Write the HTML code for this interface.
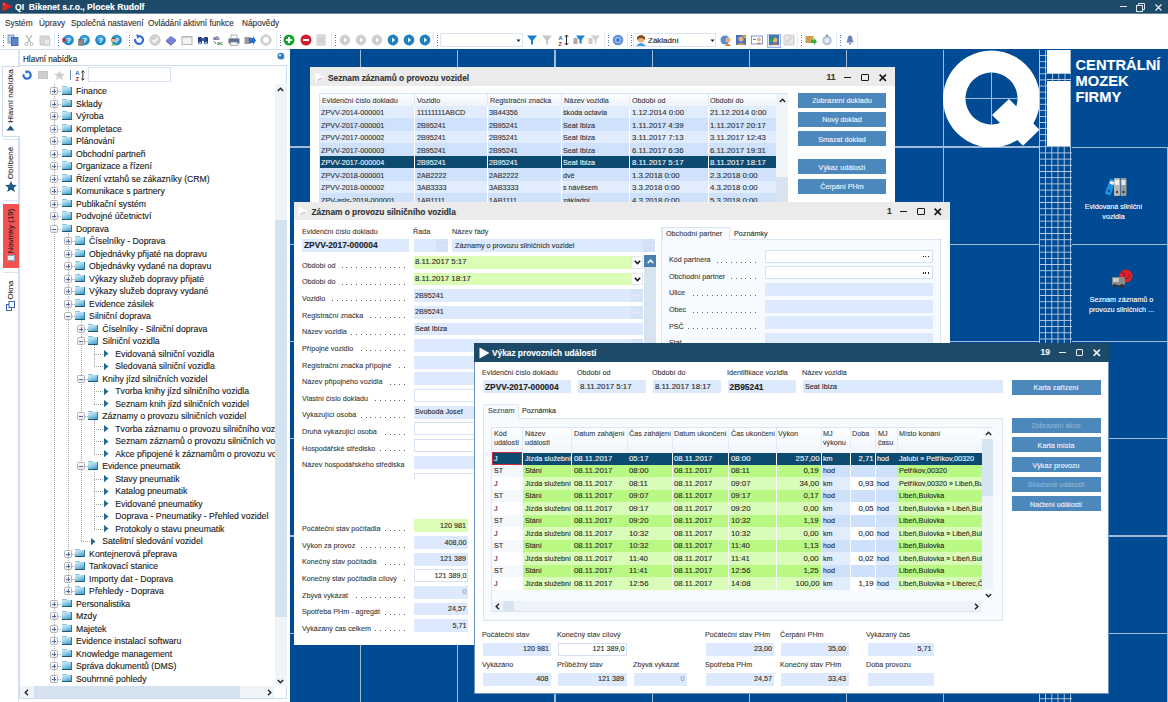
<!DOCTYPE html><html><head><meta charset="utf-8"><style>
html,body{margin:0;padding:0;width:1168px;height:702px;overflow:hidden;background:#fff;font-family:"Liberation Sans",sans-serif;}
.a{position:absolute;box-sizing:border-box;}
.t{position:absolute;white-space:nowrap;-webkit-text-stroke:0.12px currentColor;}
svg{position:absolute;overflow:visible}
</style></head><body>
<div class="a" style="left:0px;top:0px;width:1168px;height:13px;background:#1c4a68"></div>
<div class="a" style="left:0px;top:13px;width:1168px;height:1px;background:#6a8598"></div>
<div class="t" style="left:15px;top:1.62px;font-size:8.6px;line-height:10.75px;color:#fff;font-weight:bold;transform-origin:left;">QI&nbsp; Bikenet s.r.o., Plocek Rudolf</div>
<div class="a" style="left:1120px;top:6px;width:7px;height:1px;background:#dfe8ef"></div>
<svg style="left:1136px;top:3px" width="9" height="9" viewBox="0 0 9 9"><path d="M2.5 2.5 V0.5 H8.5 V6.5 H6.5" fill="none" stroke="#dfe8ef" stroke-width="1"/><rect x="0.5" y="2.5" width="6" height="6" fill="none" stroke="#dfe8ef" stroke-width="1"/></svg>
<svg style="left:1155px;top:3.5px" width="7" height="7"><path d="M0.5 0.5L6.5 6.5M6.5 0.5L0.5 6.5" stroke="#e8eef3" stroke-width="1.2"/></svg>
<div class="a" style="left:0px;top:14px;width:1168px;height:17px;background:#fff"></div>
<div class="t" style="left:5px;top:18.23px;font-size:8.6px;line-height:10.75px;color:#333;transform:scaleX(0.96);transform-origin:left;">Systém</div>
<div class="t" style="left:38.5px;top:18.23px;font-size:8.6px;line-height:10.75px;color:#333;transform:scaleX(0.96);transform-origin:left;">Úpravy</div>
<div class="t" style="left:71px;top:18.23px;font-size:8.6px;line-height:10.75px;color:#333;transform:scaleX(0.96);transform-origin:left;">Společná nastavení</div>
<div class="t" style="left:148px;top:18.23px;font-size:8.6px;line-height:10.75px;color:#333;transform:scaleX(0.96);transform-origin:left;">Ovládání aktivní funkce</div>
<div class="t" style="left:241.5px;top:18.23px;font-size:8.6px;line-height:10.75px;color:#333;transform:scaleX(0.96);transform-origin:left;">Nápovědy</div>
<div class="a" style="left:0px;top:31px;width:1168px;height:18px;background:#fff"></div>
<div class="a" style="left:0px;top:49px;width:19px;height:653px;background:#fff;border-right:1px solid #d6e2f1"></div>
<div class="a" style="left:19px;top:49px;width:271px;height:653px;background:#fff"></div>
<div class="a" style="left:0px;top:49px;width:290px;height:0.8px;background:#d3e0f2"></div>
<div class="a" style="left:19px;top:49.5px;width:268px;height:16px;background:#fff;border-left:1px solid #d6e2f1"></div>
<svg style="left:276px;top:51.5px" width="10" height="9" viewBox="0 0 10 9"><ellipse cx="5.5" cy="6" rx="3.5" ry="2" fill="#b8c0c8" opacity="0.6"/><circle cx="4.8" cy="4" r="3.3" fill="#2f78b8"/><circle cx="4" cy="3.2" r="1.4" fill="#a8d4f0"/></svg>
<div class="t" style="left:22.8px;top:54.05px;font-size:8.4px;line-height:10.5px;color:#222;transform:scaleX(0.97);transform-origin:left;">Hlavní nabídka</div>
<div class="a" style="left:19px;top:65px;width:268px;height:634px;border:1px solid #cddcf0;background:#fff"></div>
<div class="a" style="left:290px;top:49px;width:878px;height:653px;background:#004b94"></div>
<div class="a" style="left:360.0px;top:50px;width:1.3px;height:652px;background:#a3bbd9"></div>
<div class="a" style="left:457.1px;top:50px;width:1.3px;height:652px;background:#a3bbd9"></div>
<div class="a" style="left:554.3px;top:50px;width:1.3px;height:652px;background:#a3bbd9"></div>
<div class="a" style="left:651.5px;top:50px;width:1.3px;height:652px;background:#a3bbd9"></div>
<div class="a" style="left:748.6px;top:50px;width:1.3px;height:652px;background:#a3bbd9"></div>
<div class="a" style="left:845.7px;top:50px;width:1.3px;height:652px;background:#a3bbd9"></div>
<div class="a" style="left:942.9px;top:50px;width:1.3px;height:652px;background:#a3bbd9"></div>
<div class="a" style="left:1040.1px;top:50px;width:1.3px;height:652px;background:#a3bbd9"></div>
<div class="a" style="left:1166.5px;top:50px;width:1.3px;height:652px;background:#a3bbd9"></div>
<div class="a" style="left:290px;top:146.3px;width:878px;height:1.3px;background:#a3bbd9"></div>
<div class="a" style="left:290px;top:243.5px;width:878px;height:1.3px;background:#a3bbd9"></div>
<div class="a" style="left:290px;top:340.7px;width:878px;height:1.3px;background:#a3bbd9"></div>
<div class="a" style="left:290px;top:438.0px;width:878px;height:1.3px;background:#a3bbd9"></div>
<div class="a" style="left:290px;top:535.3px;width:878px;height:1.3px;background:#a3bbd9"></div>
<div class="a" style="left:290px;top:632.5px;width:878px;height:1.3px;background:#a3bbd9"></div>
<div class="a" style="left:1039.3px;top:50px;width:32.4px;height:652px;background-color:#004b94;background-image:linear-gradient(90deg,#bcd0e8 1.3px,transparent 1.3px),linear-gradient(180deg,#bcd0e8 1.3px,transparent 1.3px);background-size:6.2px 6.214px;background-position:0 0, 0 3.2px"></div>
<svg style="left:943px;top:50px" width="98" height="98" viewBox="0 0 98 98">
<defs><clipPath id="qc"><rect x="0" y="0" width="97" height="97"/></clipPath></defs>
<g clip-path="url(#qc)">
<path fill="#fff" fill-rule="evenodd" d="M48.5 0.5 a48.5 48.5 0 1 0 0.01 0 Z M48.5 22.5 a26 26 0 1 1 -0.01 0 Z"/>
<line x1="48.5" y1="22.5" x2="48.5" y2="74.5" stroke="#a3bbd9" stroke-width="1"/>
<line x1="22.5" y1="48.5" x2="74.5" y2="48.5" stroke="#a3bbd9" stroke-width="1"/>
<polygon fill="#fff" points="66,49 96.5,79.7 80,95.8 49,65"/>
</g></svg>
<div class="a" style="left:1046.8px;top:50px;width:23.7px;height:96.4px;background:#fff"></div>
<div class="a" style="left:1045.5px;top:73.4px;width:25.7px;height:7.4px;background-color:#004b94;background-image:linear-gradient(90deg,#bcd0e8 1.3px,transparent 1.3px),linear-gradient(180deg,#bcd0e8 1.3px,transparent 1.3px);background-size:6.2px 6.1px;background-position:0 0,0 0"></div>
<div class="a" style="left:1039.3px;top:50px;width:7.5px;height:96.4px;background-color:#004b94;background-image:linear-gradient(90deg,#bcd0e8 1.3px,transparent 1.3px),linear-gradient(180deg,#bcd0e8 1.3px,transparent 1.3px);background-size:6.2px 6.08px;background-position:0 0,0 5.2px"></div>
<div class="a" style="left:1070.5px;top:50px;width:97px;height:96.75px;background:#004b94"></div>
<div class="t" style="left:1075.5px;top:55.81px;font-size:14.7px;line-height:18.38px;color:#fff;font-weight:bold;transform-origin:left;">CENTRÁLNÍ</div>
<div class="t" style="left:1075.5px;top:71.81px;font-size:14.7px;line-height:18.38px;color:#fff;font-weight:bold;transform-origin:left;">MOZEK</div>
<div class="t" style="left:1075.5px;top:88.11px;font-size:14.7px;line-height:18.38px;color:#fff;font-weight:bold;transform-origin:left;">FIRMY</div>
<div style="position:absolute;left:0;top:0;width:274.5px;height:686px;overflow:hidden">
<div class="a" style="left:53.5px;top:84px;width:1px;height:594.8px;border-left:1px dotted #a8a8a8"></div>
<div class="a" style="left:67.5px;top:232.8px;width:1px;height:358.49999999999994px;border-left:1px dotted #a8a8a8"></div>
<div class="a" style="left:80.5px;top:320.3px;width:1px;height:220.99999999999994px;border-left:1px dotted #a8a8a8"></div>
<div class="a" style="left:93.5px;top:345.3px;width:1px;height:21.0px;border-left:1px dotted #a8a8a8"></div>
<div class="a" style="left:93.5px;top:382.8px;width:1px;height:21.0px;border-left:1px dotted #a8a8a8"></div>
<div class="a" style="left:93.5px;top:420.3px;width:1px;height:33.5px;border-left:1px dotted #a8a8a8"></div>
<div class="a" style="left:93.5px;top:470.3px;width:1px;height:58.49999999999994px;border-left:1px dotted #a8a8a8"></div>
<div class="a" style="left:53.5px;top:90.5px;width:9px;height:1px;border-top:1px dotted #a8a8a8"></div>
<div class="a" style="left:50px;top:87px;width:8px;height:8px;border:1px solid #b4b4b4;border-radius:1.5px;background:linear-gradient(#fdfdfd,#e6e6e6)"></div>
<div class="a" style="left:52px;top:90.5px;width:4px;height:1px;background:#5468a8"></div>
<div class="a" style="left:53.5px;top:89px;width:1px;height:4px;background:#5468a8"></div>
<div class="a" style="left:61.9px;top:86.0px;width:5px;height:2px;background:#7cc0e2;border-radius:1px 1px 0 0"></div>
<div class="a" style="left:61.9px;top:87.3px;width:10.3px;height:7.4px;background:linear-gradient(160deg,#d4ecf7 0%,#9ed2ea 45%,#3b9cc8 100%);border-bottom:1.2px solid #1d5874;border-right:0.8px solid #2d7ea6"></div>
<div class="t" style="left:76.0px;top:86.16px;font-size:8.7px;line-height:10.88px;color:#1a1a1a;transform-origin:left;">Finance</div>
<div class="a" style="left:53.5px;top:103.5px;width:9px;height:1px;border-top:1px dotted #a8a8a8"></div>
<div class="a" style="left:50px;top:100px;width:8px;height:8px;border:1px solid #b4b4b4;border-radius:1.5px;background:linear-gradient(#fdfdfd,#e6e6e6)"></div>
<div class="a" style="left:52px;top:103.5px;width:4px;height:1px;background:#5468a8"></div>
<div class="a" style="left:53.5px;top:102px;width:1px;height:4px;background:#5468a8"></div>
<div class="a" style="left:61.9px;top:98.5px;width:5px;height:2px;background:#7cc0e2;border-radius:1px 1px 0 0"></div>
<div class="a" style="left:61.9px;top:99.8px;width:10.3px;height:7.4px;background:linear-gradient(160deg,#d4ecf7 0%,#9ed2ea 45%,#3b9cc8 100%);border-bottom:1.2px solid #1d5874;border-right:0.8px solid #2d7ea6"></div>
<div class="t" style="left:76.0px;top:98.66px;font-size:8.7px;line-height:10.88px;color:#1a1a1a;transform-origin:left;">Sklady</div>
<div class="a" style="left:53.5px;top:115.5px;width:9px;height:1px;border-top:1px dotted #a8a8a8"></div>
<div class="a" style="left:50px;top:112px;width:8px;height:8px;border:1px solid #b4b4b4;border-radius:1.5px;background:linear-gradient(#fdfdfd,#e6e6e6)"></div>
<div class="a" style="left:52px;top:115.5px;width:4px;height:1px;background:#5468a8"></div>
<div class="a" style="left:53.5px;top:114px;width:1px;height:4px;background:#5468a8"></div>
<div class="a" style="left:61.9px;top:111.0px;width:5px;height:2px;background:#7cc0e2;border-radius:1px 1px 0 0"></div>
<div class="a" style="left:61.9px;top:112.3px;width:10.3px;height:7.4px;background:linear-gradient(160deg,#d4ecf7 0%,#9ed2ea 45%,#3b9cc8 100%);border-bottom:1.2px solid #1d5874;border-right:0.8px solid #2d7ea6"></div>
<div class="t" style="left:76.0px;top:111.16px;font-size:8.7px;line-height:10.88px;color:#1a1a1a;transform-origin:left;">Výroba</div>
<div class="a" style="left:53.5px;top:128.5px;width:9px;height:1px;border-top:1px dotted #a8a8a8"></div>
<div class="a" style="left:50px;top:125px;width:8px;height:8px;border:1px solid #b4b4b4;border-radius:1.5px;background:linear-gradient(#fdfdfd,#e6e6e6)"></div>
<div class="a" style="left:52px;top:128.5px;width:4px;height:1px;background:#5468a8"></div>
<div class="a" style="left:53.5px;top:127px;width:1px;height:4px;background:#5468a8"></div>
<div class="a" style="left:61.9px;top:123.50000000000001px;width:5px;height:2px;background:#7cc0e2;border-radius:1px 1px 0 0"></div>
<div class="a" style="left:61.9px;top:124.80000000000001px;width:10.3px;height:7.4px;background:linear-gradient(160deg,#d4ecf7 0%,#9ed2ea 45%,#3b9cc8 100%);border-bottom:1.2px solid #1d5874;border-right:0.8px solid #2d7ea6"></div>
<div class="t" style="left:76.0px;top:123.66px;font-size:8.7px;line-height:10.88px;color:#1a1a1a;transform-origin:left;">Kompletace</div>
<div class="a" style="left:53.5px;top:140.5px;width:9px;height:1px;border-top:1px dotted #a8a8a8"></div>
<div class="a" style="left:50px;top:137px;width:8px;height:8px;border:1px solid #b4b4b4;border-radius:1.5px;background:linear-gradient(#fdfdfd,#e6e6e6)"></div>
<div class="a" style="left:52px;top:140.5px;width:4px;height:1px;background:#5468a8"></div>
<div class="a" style="left:53.5px;top:139px;width:1px;height:4px;background:#5468a8"></div>
<div class="a" style="left:61.9px;top:136.0px;width:5px;height:2px;background:#7cc0e2;border-radius:1px 1px 0 0"></div>
<div class="a" style="left:61.9px;top:137.3px;width:10.3px;height:7.4px;background:linear-gradient(160deg,#d4ecf7 0%,#9ed2ea 45%,#3b9cc8 100%);border-bottom:1.2px solid #1d5874;border-right:0.8px solid #2d7ea6"></div>
<div class="t" style="left:76.0px;top:136.16px;font-size:8.7px;line-height:10.88px;color:#1a1a1a;transform-origin:left;">Plánování</div>
<div class="a" style="left:53.5px;top:153.5px;width:9px;height:1px;border-top:1px dotted #a8a8a8"></div>
<div class="a" style="left:50px;top:150px;width:8px;height:8px;border:1px solid #b4b4b4;border-radius:1.5px;background:linear-gradient(#fdfdfd,#e6e6e6)"></div>
<div class="a" style="left:52px;top:153.5px;width:4px;height:1px;background:#5468a8"></div>
<div class="a" style="left:53.5px;top:152px;width:1px;height:4px;background:#5468a8"></div>
<div class="a" style="left:61.9px;top:148.5px;width:5px;height:2px;background:#7cc0e2;border-radius:1px 1px 0 0"></div>
<div class="a" style="left:61.9px;top:149.8px;width:10.3px;height:7.4px;background:linear-gradient(160deg,#d4ecf7 0%,#9ed2ea 45%,#3b9cc8 100%);border-bottom:1.2px solid #1d5874;border-right:0.8px solid #2d7ea6"></div>
<div class="t" style="left:76.0px;top:148.66px;font-size:8.7px;line-height:10.88px;color:#1a1a1a;transform-origin:left;">Obchodní partneři</div>
<div class="a" style="left:53.5px;top:165.5px;width:9px;height:1px;border-top:1px dotted #a8a8a8"></div>
<div class="a" style="left:50px;top:162px;width:8px;height:8px;border:1px solid #b4b4b4;border-radius:1.5px;background:linear-gradient(#fdfdfd,#e6e6e6)"></div>
<div class="a" style="left:52px;top:165.5px;width:4px;height:1px;background:#5468a8"></div>
<div class="a" style="left:53.5px;top:164px;width:1px;height:4px;background:#5468a8"></div>
<div class="a" style="left:61.9px;top:161.0px;width:5px;height:2px;background:#7cc0e2;border-radius:1px 1px 0 0"></div>
<div class="a" style="left:61.9px;top:162.3px;width:10.3px;height:7.4px;background:linear-gradient(160deg,#d4ecf7 0%,#9ed2ea 45%,#3b9cc8 100%);border-bottom:1.2px solid #1d5874;border-right:0.8px solid #2d7ea6"></div>
<div class="t" style="left:76.0px;top:161.16px;font-size:8.7px;line-height:10.88px;color:#1a1a1a;transform-origin:left;">Organizace a řízení</div>
<div class="a" style="left:53.5px;top:178.5px;width:9px;height:1px;border-top:1px dotted #a8a8a8"></div>
<div class="a" style="left:50px;top:175px;width:8px;height:8px;border:1px solid #b4b4b4;border-radius:1.5px;background:linear-gradient(#fdfdfd,#e6e6e6)"></div>
<div class="a" style="left:52px;top:178.5px;width:4px;height:1px;background:#5468a8"></div>
<div class="a" style="left:53.5px;top:177px;width:1px;height:4px;background:#5468a8"></div>
<div class="a" style="left:61.9px;top:173.5px;width:5px;height:2px;background:#7cc0e2;border-radius:1px 1px 0 0"></div>
<div class="a" style="left:61.9px;top:174.8px;width:10.3px;height:7.4px;background:linear-gradient(160deg,#d4ecf7 0%,#9ed2ea 45%,#3b9cc8 100%);border-bottom:1.2px solid #1d5874;border-right:0.8px solid #2d7ea6"></div>
<div class="t" style="left:76.0px;top:173.66px;font-size:8.7px;line-height:10.88px;color:#1a1a1a;transform-origin:left;">Řízení vztahů se zákazníky (CRM)</div>
<div class="a" style="left:53.5px;top:190.5px;width:9px;height:1px;border-top:1px dotted #a8a8a8"></div>
<div class="a" style="left:50px;top:187px;width:8px;height:8px;border:1px solid #b4b4b4;border-radius:1.5px;background:linear-gradient(#fdfdfd,#e6e6e6)"></div>
<div class="a" style="left:52px;top:190.5px;width:4px;height:1px;background:#5468a8"></div>
<div class="a" style="left:53.5px;top:189px;width:1px;height:4px;background:#5468a8"></div>
<div class="a" style="left:61.9px;top:186.0px;width:5px;height:2px;background:#7cc0e2;border-radius:1px 1px 0 0"></div>
<div class="a" style="left:61.9px;top:187.3px;width:10.3px;height:7.4px;background:linear-gradient(160deg,#d4ecf7 0%,#9ed2ea 45%,#3b9cc8 100%);border-bottom:1.2px solid #1d5874;border-right:0.8px solid #2d7ea6"></div>
<div class="t" style="left:76.0px;top:186.16px;font-size:8.7px;line-height:10.88px;color:#1a1a1a;transform-origin:left;">Komunikace s partnery</div>
<div class="a" style="left:53.5px;top:203.5px;width:9px;height:1px;border-top:1px dotted #a8a8a8"></div>
<div class="a" style="left:50px;top:200px;width:8px;height:8px;border:1px solid #b4b4b4;border-radius:1.5px;background:linear-gradient(#fdfdfd,#e6e6e6)"></div>
<div class="a" style="left:52px;top:203.5px;width:4px;height:1px;background:#5468a8"></div>
<div class="a" style="left:53.5px;top:202px;width:1px;height:4px;background:#5468a8"></div>
<div class="a" style="left:61.9px;top:198.5px;width:5px;height:2px;background:#7cc0e2;border-radius:1px 1px 0 0"></div>
<div class="a" style="left:61.9px;top:199.8px;width:10.3px;height:7.4px;background:linear-gradient(160deg,#d4ecf7 0%,#9ed2ea 45%,#3b9cc8 100%);border-bottom:1.2px solid #1d5874;border-right:0.8px solid #2d7ea6"></div>
<div class="t" style="left:76.0px;top:198.66px;font-size:8.7px;line-height:10.88px;color:#1a1a1a;transform-origin:left;">Publikační systém</div>
<div class="a" style="left:53.5px;top:215.5px;width:9px;height:1px;border-top:1px dotted #a8a8a8"></div>
<div class="a" style="left:50px;top:212px;width:8px;height:8px;border:1px solid #b4b4b4;border-radius:1.5px;background:linear-gradient(#fdfdfd,#e6e6e6)"></div>
<div class="a" style="left:52px;top:215.5px;width:4px;height:1px;background:#5468a8"></div>
<div class="a" style="left:53.5px;top:214px;width:1px;height:4px;background:#5468a8"></div>
<div class="a" style="left:61.9px;top:211.0px;width:5px;height:2px;background:#7cc0e2;border-radius:1px 1px 0 0"></div>
<div class="a" style="left:61.9px;top:212.3px;width:10.3px;height:7.4px;background:linear-gradient(160deg,#d4ecf7 0%,#9ed2ea 45%,#3b9cc8 100%);border-bottom:1.2px solid #1d5874;border-right:0.8px solid #2d7ea6"></div>
<div class="t" style="left:76.0px;top:211.16px;font-size:8.7px;line-height:10.88px;color:#1a1a1a;transform-origin:left;">Podvojné účetnictví</div>
<div class="a" style="left:53.5px;top:228.5px;width:9px;height:1px;border-top:1px dotted #a8a8a8"></div>
<div class="a" style="left:50px;top:225px;width:8px;height:8px;border:1px solid #b4b4b4;border-radius:1.5px;background:linear-gradient(#fdfdfd,#e6e6e6)"></div>
<div class="a" style="left:52px;top:228.5px;width:4px;height:1px;background:#5468a8"></div>
<div class="a" style="left:61.9px;top:223.5px;width:5px;height:2px;background:#7cc0e2;border-radius:1px 1px 0 0"></div>
<div class="a" style="left:61.9px;top:224.8px;width:10.3px;height:7.4px;background:linear-gradient(160deg,#d4ecf7 0%,#9ed2ea 45%,#3b9cc8 100%);border-bottom:1.2px solid #1d5874;border-right:0.8px solid #2d7ea6"></div>
<div class="t" style="left:76.0px;top:223.66px;font-size:8.7px;line-height:10.88px;color:#1a1a1a;transform-origin:left;">Doprava</div>
<div class="a" style="left:67.5px;top:240.5px;width:9px;height:1px;border-top:1px dotted #a8a8a8"></div>
<div class="a" style="left:64px;top:237px;width:8px;height:8px;border:1px solid #b4b4b4;border-radius:1.5px;background:linear-gradient(#fdfdfd,#e6e6e6)"></div>
<div class="a" style="left:66px;top:240.5px;width:4px;height:1px;background:#5468a8"></div>
<div class="a" style="left:67.5px;top:239px;width:1px;height:4px;background:#5468a8"></div>
<div class="a" style="left:75.0px;top:236.0px;width:5px;height:2px;background:#7cc0e2;border-radius:1px 1px 0 0"></div>
<div class="a" style="left:75.0px;top:237.3px;width:10.3px;height:7.4px;background:linear-gradient(160deg,#d4ecf7 0%,#9ed2ea 45%,#3b9cc8 100%);border-bottom:1.2px solid #1d5874;border-right:0.8px solid #2d7ea6"></div>
<div class="t" style="left:89.1px;top:236.16px;font-size:8.7px;line-height:10.88px;color:#1a1a1a;transform-origin:left;">Číselníky - Doprava</div>
<div class="a" style="left:67.5px;top:253.5px;width:9px;height:1px;border-top:1px dotted #a8a8a8"></div>
<div class="a" style="left:64px;top:250px;width:8px;height:8px;border:1px solid #b4b4b4;border-radius:1.5px;background:linear-gradient(#fdfdfd,#e6e6e6)"></div>
<div class="a" style="left:66px;top:253.5px;width:4px;height:1px;background:#5468a8"></div>
<div class="a" style="left:67.5px;top:252px;width:1px;height:4px;background:#5468a8"></div>
<div class="a" style="left:75.0px;top:248.5px;width:5px;height:2px;background:#7cc0e2;border-radius:1px 1px 0 0"></div>
<div class="a" style="left:75.0px;top:249.8px;width:10.3px;height:7.4px;background:linear-gradient(160deg,#d4ecf7 0%,#9ed2ea 45%,#3b9cc8 100%);border-bottom:1.2px solid #1d5874;border-right:0.8px solid #2d7ea6"></div>
<div class="t" style="left:89.1px;top:248.66px;font-size:8.7px;line-height:10.88px;color:#1a1a1a;transform-origin:left;">Objednávky přijaté na dopravu</div>
<div class="a" style="left:67.5px;top:265.5px;width:9px;height:1px;border-top:1px dotted #a8a8a8"></div>
<div class="a" style="left:64px;top:262px;width:8px;height:8px;border:1px solid #b4b4b4;border-radius:1.5px;background:linear-gradient(#fdfdfd,#e6e6e6)"></div>
<div class="a" style="left:66px;top:265.5px;width:4px;height:1px;background:#5468a8"></div>
<div class="a" style="left:67.5px;top:264px;width:1px;height:4px;background:#5468a8"></div>
<div class="a" style="left:75.0px;top:261.0px;width:5px;height:2px;background:#7cc0e2;border-radius:1px 1px 0 0"></div>
<div class="a" style="left:75.0px;top:262.3px;width:10.3px;height:7.4px;background:linear-gradient(160deg,#d4ecf7 0%,#9ed2ea 45%,#3b9cc8 100%);border-bottom:1.2px solid #1d5874;border-right:0.8px solid #2d7ea6"></div>
<div class="t" style="left:89.1px;top:261.16px;font-size:8.7px;line-height:10.88px;color:#1a1a1a;transform-origin:left;">Objednávky vydané na dopravu</div>
<div class="a" style="left:67.5px;top:278.5px;width:9px;height:1px;border-top:1px dotted #a8a8a8"></div>
<div class="a" style="left:64px;top:275px;width:8px;height:8px;border:1px solid #b4b4b4;border-radius:1.5px;background:linear-gradient(#fdfdfd,#e6e6e6)"></div>
<div class="a" style="left:66px;top:278.5px;width:4px;height:1px;background:#5468a8"></div>
<div class="a" style="left:67.5px;top:277px;width:1px;height:4px;background:#5468a8"></div>
<div class="a" style="left:75.0px;top:273.5px;width:5px;height:2px;background:#7cc0e2;border-radius:1px 1px 0 0"></div>
<div class="a" style="left:75.0px;top:274.8px;width:10.3px;height:7.4px;background:linear-gradient(160deg,#d4ecf7 0%,#9ed2ea 45%,#3b9cc8 100%);border-bottom:1.2px solid #1d5874;border-right:0.8px solid #2d7ea6"></div>
<div class="t" style="left:89.1px;top:273.66px;font-size:8.7px;line-height:10.88px;color:#1a1a1a;transform-origin:left;">Výkazy služeb dopravy přijaté</div>
<div class="a" style="left:67.5px;top:290.5px;width:9px;height:1px;border-top:1px dotted #a8a8a8"></div>
<div class="a" style="left:64px;top:287px;width:8px;height:8px;border:1px solid #b4b4b4;border-radius:1.5px;background:linear-gradient(#fdfdfd,#e6e6e6)"></div>
<div class="a" style="left:66px;top:290.5px;width:4px;height:1px;background:#5468a8"></div>
<div class="a" style="left:67.5px;top:289px;width:1px;height:4px;background:#5468a8"></div>
<div class="a" style="left:75.0px;top:286.0px;width:5px;height:2px;background:#7cc0e2;border-radius:1px 1px 0 0"></div>
<div class="a" style="left:75.0px;top:287.3px;width:10.3px;height:7.4px;background:linear-gradient(160deg,#d4ecf7 0%,#9ed2ea 45%,#3b9cc8 100%);border-bottom:1.2px solid #1d5874;border-right:0.8px solid #2d7ea6"></div>
<div class="t" style="left:89.1px;top:286.16px;font-size:8.7px;line-height:10.88px;color:#1a1a1a;transform-origin:left;">Výkazy služeb dopravy vydané</div>
<div class="a" style="left:67.5px;top:303.5px;width:9px;height:1px;border-top:1px dotted #a8a8a8"></div>
<div class="a" style="left:64px;top:300px;width:8px;height:8px;border:1px solid #b4b4b4;border-radius:1.5px;background:linear-gradient(#fdfdfd,#e6e6e6)"></div>
<div class="a" style="left:66px;top:303.5px;width:4px;height:1px;background:#5468a8"></div>
<div class="a" style="left:67.5px;top:302px;width:1px;height:4px;background:#5468a8"></div>
<div class="a" style="left:75.0px;top:298.5px;width:5px;height:2px;background:#7cc0e2;border-radius:1px 1px 0 0"></div>
<div class="a" style="left:75.0px;top:299.8px;width:10.3px;height:7.4px;background:linear-gradient(160deg,#d4ecf7 0%,#9ed2ea 45%,#3b9cc8 100%);border-bottom:1.2px solid #1d5874;border-right:0.8px solid #2d7ea6"></div>
<div class="t" style="left:89.1px;top:298.66px;font-size:8.7px;line-height:10.88px;color:#1a1a1a;transform-origin:left;">Evidence zásilek</div>
<div class="a" style="left:67.5px;top:315.5px;width:9px;height:1px;border-top:1px dotted #a8a8a8"></div>
<div class="a" style="left:64px;top:312px;width:8px;height:8px;border:1px solid #b4b4b4;border-radius:1.5px;background:linear-gradient(#fdfdfd,#e6e6e6)"></div>
<div class="a" style="left:66px;top:315.5px;width:4px;height:1px;background:#5468a8"></div>
<div class="a" style="left:75.0px;top:311.0px;width:5px;height:2px;background:#7cc0e2;border-radius:1px 1px 0 0"></div>
<div class="a" style="left:75.0px;top:312.3px;width:10.3px;height:7.4px;background:linear-gradient(160deg,#d4ecf7 0%,#9ed2ea 45%,#3b9cc8 100%);border-bottom:1.2px solid #1d5874;border-right:0.8px solid #2d7ea6"></div>
<div class="t" style="left:89.1px;top:311.16px;font-size:8.7px;line-height:10.88px;color:#1a1a1a;transform-origin:left;">Silniční doprava</div>
<div class="a" style="left:80.5px;top:328.5px;width:9px;height:1px;border-top:1px dotted #a8a8a8"></div>
<div class="a" style="left:77px;top:325px;width:8px;height:8px;border:1px solid #b4b4b4;border-radius:1.5px;background:linear-gradient(#fdfdfd,#e6e6e6)"></div>
<div class="a" style="left:79px;top:328.5px;width:4px;height:1px;background:#5468a8"></div>
<div class="a" style="left:80.5px;top:327px;width:1px;height:4px;background:#5468a8"></div>
<div class="a" style="left:88.1px;top:323.5px;width:5px;height:2px;background:#7cc0e2;border-radius:1px 1px 0 0"></div>
<div class="a" style="left:88.1px;top:324.8px;width:10.3px;height:7.4px;background:linear-gradient(160deg,#d4ecf7 0%,#9ed2ea 45%,#3b9cc8 100%);border-bottom:1.2px solid #1d5874;border-right:0.8px solid #2d7ea6"></div>
<div class="t" style="left:102.2px;top:323.66px;font-size:8.7px;line-height:10.88px;color:#1a1a1a;transform-origin:left;">Číselníky - Silniční doprava</div>
<div class="a" style="left:80.5px;top:340.5px;width:9px;height:1px;border-top:1px dotted #a8a8a8"></div>
<div class="a" style="left:77px;top:337px;width:8px;height:8px;border:1px solid #b4b4b4;border-radius:1.5px;background:linear-gradient(#fdfdfd,#e6e6e6)"></div>
<div class="a" style="left:79px;top:340.5px;width:4px;height:1px;background:#5468a8"></div>
<div class="a" style="left:88.1px;top:336.0px;width:5px;height:2px;background:#7cc0e2;border-radius:1px 1px 0 0"></div>
<div class="a" style="left:88.1px;top:337.3px;width:10.3px;height:7.4px;background:linear-gradient(160deg,#d4ecf7 0%,#9ed2ea 45%,#3b9cc8 100%);border-bottom:1.2px solid #1d5874;border-right:0.8px solid #2d7ea6"></div>
<div class="t" style="left:102.2px;top:336.16px;font-size:8.7px;line-height:10.88px;color:#1a1a1a;transform-origin:left;">Silniční vozidla</div>
<div class="a" style="left:93.5px;top:353.5px;width:9px;height:1px;border-top:1px dotted #a8a8a8"></div>
<svg style="left:104.29999999999998px;top:350.2px" width="5" height="8"><polygon points="0,0 4.5,3.6 0,7.2" fill="#236a92"/></svg>
<div class="t" style="left:115.3px;top:348.66px;font-size:8.7px;line-height:10.88px;color:#1a1a1a;transform-origin:left;">Evidovaná silniční vozidla</div>
<div class="a" style="left:93.5px;top:365.5px;width:9px;height:1px;border-top:1px dotted #a8a8a8"></div>
<svg style="left:104.29999999999998px;top:362.7px" width="5" height="8"><polygon points="0,0 4.5,3.6 0,7.2" fill="#236a92"/></svg>
<div class="t" style="left:115.3px;top:361.16px;font-size:8.7px;line-height:10.88px;color:#1a1a1a;transform-origin:left;">Sledovaná silniční vozidla</div>
<div class="a" style="left:80.5px;top:378.5px;width:9px;height:1px;border-top:1px dotted #a8a8a8"></div>
<div class="a" style="left:77px;top:375px;width:8px;height:8px;border:1px solid #b4b4b4;border-radius:1.5px;background:linear-gradient(#fdfdfd,#e6e6e6)"></div>
<div class="a" style="left:79px;top:378.5px;width:4px;height:1px;background:#5468a8"></div>
<div class="a" style="left:88.1px;top:373.5px;width:5px;height:2px;background:#7cc0e2;border-radius:1px 1px 0 0"></div>
<div class="a" style="left:88.1px;top:374.8px;width:10.3px;height:7.4px;background:linear-gradient(160deg,#d4ecf7 0%,#9ed2ea 45%,#3b9cc8 100%);border-bottom:1.2px solid #1d5874;border-right:0.8px solid #2d7ea6"></div>
<div class="t" style="left:102.2px;top:373.66px;font-size:8.7px;line-height:10.88px;color:#1a1a1a;transform-origin:left;">Knihy jízd silničních vozidel</div>
<div class="a" style="left:93.5px;top:390.5px;width:9px;height:1px;border-top:1px dotted #a8a8a8"></div>
<svg style="left:104.29999999999998px;top:387.7px" width="5" height="8"><polygon points="0,0 4.5,3.6 0,7.2" fill="#236a92"/></svg>
<div class="t" style="left:115.3px;top:386.16px;font-size:8.7px;line-height:10.88px;color:#1a1a1a;transform-origin:left;">Tvorba knihy jízd silničního vozidla</div>
<div class="a" style="left:93.5px;top:403.5px;width:9px;height:1px;border-top:1px dotted #a8a8a8"></div>
<svg style="left:104.29999999999998px;top:400.2px" width="5" height="8"><polygon points="0,0 4.5,3.6 0,7.2" fill="#236a92"/></svg>
<div class="t" style="left:115.3px;top:398.66px;font-size:8.7px;line-height:10.88px;color:#1a1a1a;transform-origin:left;">Seznam knih jízd silničních vozidel</div>
<div class="a" style="left:80.5px;top:415.5px;width:9px;height:1px;border-top:1px dotted #a8a8a8"></div>
<div class="a" style="left:77px;top:412px;width:8px;height:8px;border:1px solid #b4b4b4;border-radius:1.5px;background:linear-gradient(#fdfdfd,#e6e6e6)"></div>
<div class="a" style="left:79px;top:415.5px;width:4px;height:1px;background:#5468a8"></div>
<div class="a" style="left:88.1px;top:411.0px;width:5px;height:2px;background:#7cc0e2;border-radius:1px 1px 0 0"></div>
<div class="a" style="left:88.1px;top:412.3px;width:10.3px;height:7.4px;background:linear-gradient(160deg,#d4ecf7 0%,#9ed2ea 45%,#3b9cc8 100%);border-bottom:1.2px solid #1d5874;border-right:0.8px solid #2d7ea6"></div>
<div class="t" style="left:102.2px;top:411.16px;font-size:8.7px;line-height:10.88px;color:#1a1a1a;transform-origin:left;">Záznamy o provozu silničních vozidel</div>
<div class="a" style="left:93.5px;top:428.5px;width:9px;height:1px;border-top:1px dotted #a8a8a8"></div>
<svg style="left:104.29999999999998px;top:425.2px" width="5" height="8"><polygon points="0,0 4.5,3.6 0,7.2" fill="#236a92"/></svg>
<div class="t" style="left:115.3px;top:423.66px;font-size:8.7px;line-height:10.88px;color:#1a1a1a;transform-origin:left;">Tvorba záznamu o provozu silničního vozidla</div>
<div class="a" style="left:93.5px;top:440.5px;width:9px;height:1px;border-top:1px dotted #a8a8a8"></div>
<svg style="left:104.29999999999998px;top:437.7px" width="5" height="8"><polygon points="0,0 4.5,3.6 0,7.2" fill="#236a92"/></svg>
<div class="t" style="left:115.3px;top:436.16px;font-size:8.7px;line-height:10.88px;color:#1a1a1a;transform-origin:left;">Seznam záznamů o provozu silničních vozidel</div>
<div class="a" style="left:93.5px;top:453.5px;width:9px;height:1px;border-top:1px dotted #a8a8a8"></div>
<svg style="left:104.29999999999998px;top:450.2px" width="5" height="8"><polygon points="0,0 4.5,3.6 0,7.2" fill="#236a92"/></svg>
<div class="t" style="left:115.3px;top:448.66px;font-size:8.7px;line-height:10.88px;color:#1a1a1a;transform-origin:left;">Akce připojené k záznamům o provozu vozidel</div>
<div class="a" style="left:80.5px;top:465.5px;width:9px;height:1px;border-top:1px dotted #a8a8a8"></div>
<div class="a" style="left:77px;top:462px;width:8px;height:8px;border:1px solid #b4b4b4;border-radius:1.5px;background:linear-gradient(#fdfdfd,#e6e6e6)"></div>
<div class="a" style="left:79px;top:465.5px;width:4px;height:1px;background:#5468a8"></div>
<div class="a" style="left:88.1px;top:461.0px;width:5px;height:2px;background:#7cc0e2;border-radius:1px 1px 0 0"></div>
<div class="a" style="left:88.1px;top:462.3px;width:10.3px;height:7.4px;background:linear-gradient(160deg,#d4ecf7 0%,#9ed2ea 45%,#3b9cc8 100%);border-bottom:1.2px solid #1d5874;border-right:0.8px solid #2d7ea6"></div>
<div class="t" style="left:102.2px;top:461.16px;font-size:8.7px;line-height:10.88px;color:#1a1a1a;transform-origin:left;">Evidence pneumatik</div>
<div class="a" style="left:93.5px;top:478.5px;width:9px;height:1px;border-top:1px dotted #a8a8a8"></div>
<svg style="left:104.29999999999998px;top:475.2px" width="5" height="8"><polygon points="0,0 4.5,3.6 0,7.2" fill="#236a92"/></svg>
<div class="t" style="left:115.3px;top:473.66px;font-size:8.7px;line-height:10.88px;color:#1a1a1a;transform-origin:left;">Stavy pneumatik</div>
<div class="a" style="left:93.5px;top:490.5px;width:9px;height:1px;border-top:1px dotted #a8a8a8"></div>
<svg style="left:104.29999999999998px;top:487.7px" width="5" height="8"><polygon points="0,0 4.5,3.6 0,7.2" fill="#236a92"/></svg>
<div class="t" style="left:115.3px;top:486.16px;font-size:8.7px;line-height:10.88px;color:#1a1a1a;transform-origin:left;">Katalog pneumatik</div>
<div class="a" style="left:93.5px;top:503.5px;width:9px;height:1px;border-top:1px dotted #a8a8a8"></div>
<svg style="left:104.29999999999998px;top:500.2px" width="5" height="8"><polygon points="0,0 4.5,3.6 0,7.2" fill="#236a92"/></svg>
<div class="t" style="left:115.3px;top:498.66px;font-size:8.7px;line-height:10.88px;color:#1a1a1a;transform-origin:left;">Evidované pneumatiky</div>
<div class="a" style="left:93.5px;top:515.5px;width:9px;height:1px;border-top:1px dotted #a8a8a8"></div>
<svg style="left:104.29999999999998px;top:512.6999999999999px" width="5" height="8"><polygon points="0,0 4.5,3.6 0,7.2" fill="#236a92"/></svg>
<div class="t" style="left:115.3px;top:511.16px;font-size:8.7px;line-height:10.88px;color:#1a1a1a;transform-origin:left;">Doprava - Pneumatiky - Přehled vozidel</div>
<div class="a" style="left:93.5px;top:528.5px;width:9px;height:1px;border-top:1px dotted #a8a8a8"></div>
<svg style="left:104.29999999999998px;top:525.1999999999999px" width="5" height="8"><polygon points="0,0 4.5,3.6 0,7.2" fill="#236a92"/></svg>
<div class="t" style="left:115.3px;top:523.66px;font-size:8.7px;line-height:10.88px;color:#1a1a1a;transform-origin:left;">Protokoly o stavu pneumatik</div>
<div class="a" style="left:80.5px;top:540.5px;width:9px;height:1px;border-top:1px dotted #a8a8a8"></div>
<svg style="left:91.19999999999999px;top:537.6999999999999px" width="5" height="8"><polygon points="0,0 4.5,3.6 0,7.2" fill="#236a92"/></svg>
<div class="t" style="left:102.2px;top:536.16px;font-size:8.7px;line-height:10.88px;color:#1a1a1a;transform-origin:left;">Satelitní sledování vozidel</div>
<div class="a" style="left:67.5px;top:553.5px;width:9px;height:1px;border-top:1px dotted #a8a8a8"></div>
<div class="a" style="left:64px;top:550px;width:8px;height:8px;border:1px solid #b4b4b4;border-radius:1.5px;background:linear-gradient(#fdfdfd,#e6e6e6)"></div>
<div class="a" style="left:66px;top:553.5px;width:4px;height:1px;background:#5468a8"></div>
<div class="a" style="left:67.5px;top:552px;width:1px;height:4px;background:#5468a8"></div>
<div class="a" style="left:75.0px;top:548.5px;width:5px;height:2px;background:#7cc0e2;border-radius:1px 1px 0 0"></div>
<div class="a" style="left:75.0px;top:549.8px;width:10.3px;height:7.4px;background:linear-gradient(160deg,#d4ecf7 0%,#9ed2ea 45%,#3b9cc8 100%);border-bottom:1.2px solid #1d5874;border-right:0.8px solid #2d7ea6"></div>
<div class="t" style="left:89.1px;top:548.66px;font-size:8.7px;line-height:10.88px;color:#1a1a1a;transform-origin:left;">Kontejnerová přeprava</div>
<div class="a" style="left:67.5px;top:565.5px;width:9px;height:1px;border-top:1px dotted #a8a8a8"></div>
<div class="a" style="left:64px;top:562px;width:8px;height:8px;border:1px solid #b4b4b4;border-radius:1.5px;background:linear-gradient(#fdfdfd,#e6e6e6)"></div>
<div class="a" style="left:66px;top:565.5px;width:4px;height:1px;background:#5468a8"></div>
<div class="a" style="left:67.5px;top:564px;width:1px;height:4px;background:#5468a8"></div>
<div class="a" style="left:75.0px;top:561.0px;width:5px;height:2px;background:#7cc0e2;border-radius:1px 1px 0 0"></div>
<div class="a" style="left:75.0px;top:562.3px;width:10.3px;height:7.4px;background:linear-gradient(160deg,#d4ecf7 0%,#9ed2ea 45%,#3b9cc8 100%);border-bottom:1.2px solid #1d5874;border-right:0.8px solid #2d7ea6"></div>
<div class="t" style="left:89.1px;top:561.16px;font-size:8.7px;line-height:10.88px;color:#1a1a1a;transform-origin:left;">Tankovací stanice</div>
<div class="a" style="left:67.5px;top:578.5px;width:9px;height:1px;border-top:1px dotted #a8a8a8"></div>
<div class="a" style="left:64px;top:575px;width:8px;height:8px;border:1px solid #b4b4b4;border-radius:1.5px;background:linear-gradient(#fdfdfd,#e6e6e6)"></div>
<div class="a" style="left:66px;top:578.5px;width:4px;height:1px;background:#5468a8"></div>
<div class="a" style="left:67.5px;top:577px;width:1px;height:4px;background:#5468a8"></div>
<div class="a" style="left:75.0px;top:573.5px;width:5px;height:2px;background:#7cc0e2;border-radius:1px 1px 0 0"></div>
<div class="a" style="left:75.0px;top:574.8px;width:10.3px;height:7.4px;background:linear-gradient(160deg,#d4ecf7 0%,#9ed2ea 45%,#3b9cc8 100%);border-bottom:1.2px solid #1d5874;border-right:0.8px solid #2d7ea6"></div>
<div class="t" style="left:89.1px;top:573.66px;font-size:8.7px;line-height:10.88px;color:#1a1a1a;transform-origin:left;">Importy dat - Doprava</div>
<div class="a" style="left:67.5px;top:590.5px;width:9px;height:1px;border-top:1px dotted #a8a8a8"></div>
<div class="a" style="left:64px;top:587px;width:8px;height:8px;border:1px solid #b4b4b4;border-radius:1.5px;background:linear-gradient(#fdfdfd,#e6e6e6)"></div>
<div class="a" style="left:66px;top:590.5px;width:4px;height:1px;background:#5468a8"></div>
<div class="a" style="left:67.5px;top:589px;width:1px;height:4px;background:#5468a8"></div>
<div class="a" style="left:75.0px;top:586.0px;width:5px;height:2px;background:#7cc0e2;border-radius:1px 1px 0 0"></div>
<div class="a" style="left:75.0px;top:587.3px;width:10.3px;height:7.4px;background:linear-gradient(160deg,#d4ecf7 0%,#9ed2ea 45%,#3b9cc8 100%);border-bottom:1.2px solid #1d5874;border-right:0.8px solid #2d7ea6"></div>
<div class="t" style="left:89.1px;top:586.16px;font-size:8.7px;line-height:10.88px;color:#1a1a1a;transform-origin:left;">Přehledy - Doprava</div>
<div class="a" style="left:53.5px;top:603.5px;width:9px;height:1px;border-top:1px dotted #a8a8a8"></div>
<div class="a" style="left:50px;top:600px;width:8px;height:8px;border:1px solid #b4b4b4;border-radius:1.5px;background:linear-gradient(#fdfdfd,#e6e6e6)"></div>
<div class="a" style="left:52px;top:603.5px;width:4px;height:1px;background:#5468a8"></div>
<div class="a" style="left:53.5px;top:602px;width:1px;height:4px;background:#5468a8"></div>
<div class="a" style="left:61.9px;top:598.5px;width:5px;height:2px;background:#7cc0e2;border-radius:1px 1px 0 0"></div>
<div class="a" style="left:61.9px;top:599.8px;width:10.3px;height:7.4px;background:linear-gradient(160deg,#d4ecf7 0%,#9ed2ea 45%,#3b9cc8 100%);border-bottom:1.2px solid #1d5874;border-right:0.8px solid #2d7ea6"></div>
<div class="t" style="left:76.0px;top:598.66px;font-size:8.7px;line-height:10.88px;color:#1a1a1a;transform-origin:left;">Personalistika</div>
<div class="a" style="left:53.5px;top:615.5px;width:9px;height:1px;border-top:1px dotted #a8a8a8"></div>
<div class="a" style="left:50px;top:612px;width:8px;height:8px;border:1px solid #b4b4b4;border-radius:1.5px;background:linear-gradient(#fdfdfd,#e6e6e6)"></div>
<div class="a" style="left:52px;top:615.5px;width:4px;height:1px;background:#5468a8"></div>
<div class="a" style="left:53.5px;top:614px;width:1px;height:4px;background:#5468a8"></div>
<div class="a" style="left:61.9px;top:611.0px;width:5px;height:2px;background:#7cc0e2;border-radius:1px 1px 0 0"></div>
<div class="a" style="left:61.9px;top:612.3px;width:10.3px;height:7.4px;background:linear-gradient(160deg,#d4ecf7 0%,#9ed2ea 45%,#3b9cc8 100%);border-bottom:1.2px solid #1d5874;border-right:0.8px solid #2d7ea6"></div>
<div class="t" style="left:76.0px;top:611.16px;font-size:8.7px;line-height:10.88px;color:#1a1a1a;transform-origin:left;">Mzdy</div>
<div class="a" style="left:53.5px;top:628.5px;width:9px;height:1px;border-top:1px dotted #a8a8a8"></div>
<div class="a" style="left:50px;top:625px;width:8px;height:8px;border:1px solid #b4b4b4;border-radius:1.5px;background:linear-gradient(#fdfdfd,#e6e6e6)"></div>
<div class="a" style="left:52px;top:628.5px;width:4px;height:1px;background:#5468a8"></div>
<div class="a" style="left:53.5px;top:627px;width:1px;height:4px;background:#5468a8"></div>
<div class="a" style="left:61.9px;top:623.5px;width:5px;height:2px;background:#7cc0e2;border-radius:1px 1px 0 0"></div>
<div class="a" style="left:61.9px;top:624.8px;width:10.3px;height:7.4px;background:linear-gradient(160deg,#d4ecf7 0%,#9ed2ea 45%,#3b9cc8 100%);border-bottom:1.2px solid #1d5874;border-right:0.8px solid #2d7ea6"></div>
<div class="t" style="left:76.0px;top:623.66px;font-size:8.7px;line-height:10.88px;color:#1a1a1a;transform-origin:left;">Majetek</div>
<div class="a" style="left:53.5px;top:640.5px;width:9px;height:1px;border-top:1px dotted #a8a8a8"></div>
<div class="a" style="left:50px;top:637px;width:8px;height:8px;border:1px solid #b4b4b4;border-radius:1.5px;background:linear-gradient(#fdfdfd,#e6e6e6)"></div>
<div class="a" style="left:52px;top:640.5px;width:4px;height:1px;background:#5468a8"></div>
<div class="a" style="left:53.5px;top:639px;width:1px;height:4px;background:#5468a8"></div>
<div class="a" style="left:61.9px;top:636.0px;width:5px;height:2px;background:#7cc0e2;border-radius:1px 1px 0 0"></div>
<div class="a" style="left:61.9px;top:637.3px;width:10.3px;height:7.4px;background:linear-gradient(160deg,#d4ecf7 0%,#9ed2ea 45%,#3b9cc8 100%);border-bottom:1.2px solid #1d5874;border-right:0.8px solid #2d7ea6"></div>
<div class="t" style="left:76.0px;top:636.16px;font-size:8.7px;line-height:10.88px;color:#1a1a1a;transform-origin:left;">Evidence instalací softwaru</div>
<div class="a" style="left:53.5px;top:653.5px;width:9px;height:1px;border-top:1px dotted #a8a8a8"></div>
<div class="a" style="left:50px;top:650px;width:8px;height:8px;border:1px solid #b4b4b4;border-radius:1.5px;background:linear-gradient(#fdfdfd,#e6e6e6)"></div>
<div class="a" style="left:52px;top:653.5px;width:4px;height:1px;background:#5468a8"></div>
<div class="a" style="left:53.5px;top:652px;width:1px;height:4px;background:#5468a8"></div>
<div class="a" style="left:61.9px;top:648.5px;width:5px;height:2px;background:#7cc0e2;border-radius:1px 1px 0 0"></div>
<div class="a" style="left:61.9px;top:649.8px;width:10.3px;height:7.4px;background:linear-gradient(160deg,#d4ecf7 0%,#9ed2ea 45%,#3b9cc8 100%);border-bottom:1.2px solid #1d5874;border-right:0.8px solid #2d7ea6"></div>
<div class="t" style="left:76.0px;top:648.66px;font-size:8.7px;line-height:10.88px;color:#1a1a1a;transform-origin:left;">Knowledge management</div>
<div class="a" style="left:53.5px;top:665.5px;width:9px;height:1px;border-top:1px dotted #a8a8a8"></div>
<div class="a" style="left:50px;top:662px;width:8px;height:8px;border:1px solid #b4b4b4;border-radius:1.5px;background:linear-gradient(#fdfdfd,#e6e6e6)"></div>
<div class="a" style="left:52px;top:665.5px;width:4px;height:1px;background:#5468a8"></div>
<div class="a" style="left:53.5px;top:664px;width:1px;height:4px;background:#5468a8"></div>
<div class="a" style="left:61.9px;top:661.0px;width:5px;height:2px;background:#7cc0e2;border-radius:1px 1px 0 0"></div>
<div class="a" style="left:61.9px;top:662.3px;width:10.3px;height:7.4px;background:linear-gradient(160deg,#d4ecf7 0%,#9ed2ea 45%,#3b9cc8 100%);border-bottom:1.2px solid #1d5874;border-right:0.8px solid #2d7ea6"></div>
<div class="t" style="left:76.0px;top:661.16px;font-size:8.7px;line-height:10.88px;color:#1a1a1a;transform-origin:left;">Správa dokumentů (DMS)</div>
<div class="a" style="left:53.5px;top:678.5px;width:9px;height:1px;border-top:1px dotted #a8a8a8"></div>
<div class="a" style="left:50px;top:675px;width:8px;height:8px;border:1px solid #b4b4b4;border-radius:1.5px;background:linear-gradient(#fdfdfd,#e6e6e6)"></div>
<div class="a" style="left:52px;top:678.5px;width:4px;height:1px;background:#5468a8"></div>
<div class="a" style="left:53.5px;top:677px;width:1px;height:4px;background:#5468a8"></div>
<div class="a" style="left:61.9px;top:673.5px;width:5px;height:2px;background:#7cc0e2;border-radius:1px 1px 0 0"></div>
<div class="a" style="left:61.9px;top:674.8px;width:10.3px;height:7.4px;background:linear-gradient(160deg,#d4ecf7 0%,#9ed2ea 45%,#3b9cc8 100%);border-bottom:1.2px solid #1d5874;border-right:0.8px solid #2d7ea6"></div>
<div class="t" style="left:76.0px;top:673.66px;font-size:8.7px;line-height:10.88px;color:#1a1a1a;transform-origin:left;">Souhrnné pohledy</div>
</div>
<svg style="left:22px;top:70px" width="10" height="10" viewBox="0 0 10 10"><path d="M5 1.5 A3.6 3.6 0 1 1 1.6 4.2" fill="none" stroke="#2f6fd0" stroke-width="2.2"/><polygon points="3.2,0 6.6,1.8 3.6,4" fill="#2f6fd0"/></svg>
<div class="a" style="left:38px;top:71px;width:10px;height:8px;background:#cfcfcf;border:1px solid #c2c2c2"></div>
<svg style="left:54px;top:70px" width="11" height="10" viewBox="0 0 11 10"><polygon points="5.5,0 7,3.5 11,3.7 8,6.2 9,10 5.5,7.9 2,10 3,6.2 0,3.7 4,3.5" fill="#d0d0d0"/></svg>
<div class="a" style="left:70px;top:70px;width:1px;height:10px;background:#6a8fc0"></div>
<svg style="left:75px;top:69.5px" width="10" height="11" viewBox="0 0 10 11"><text x="0.3" y="5" font-size="5.8" font-weight="bold" fill="#2a58b0" font-family="Liberation Sans">A</text><text x="0.5" y="10.6" font-size="5.8" font-weight="bold" fill="#903028" font-family="Liberation Sans">Z</text><path d="M7.8 0.8 V10.2 M6.2 2.4 L7.8 0.8 L9.4 2.4 M6.2 8.6 L7.8 10.2 L9.4 8.6" stroke="#222" stroke-width="0.9" fill="none"/></svg>
<div class="a" style="left:87.5px;top:67px;width:83px;height:14.5px;border:1px solid #d6e2f1;background:#fff"></div>
<div class="a" style="left:274.5px;top:84px;width:12px;height:602px;background:#eff4f9"></div>
<div class="a" style="left:274.5px;top:220px;width:12px;height:397px;background:#d5e3f1"></div>
<svg style="left:277px;top:87px" width="7" height="5"><path d="M0.8 4 L3.5 1.2 L6.2 4" fill="none" stroke="#222" stroke-width="1.4"/></svg>
<svg style="left:277px;top:679px" width="7" height="5"><path d="M0.8 1 L3.5 3.8 L6.2 1" fill="none" stroke="#222" stroke-width="1.4"/></svg>
<div class="a" style="left:20px;top:686px;width:254px;height:12px;background:#eff4f9"></div>
<div class="a" style="left:34px;top:686px;width:206px;height:12px;background:#d5e3f1"></div>
<svg style="left:24px;top:689px" width="5" height="7"><path d="M4 0.8 L1.2 3.5 L4 6.2" fill="none" stroke="#222" stroke-width="1.4"/></svg>
<svg style="left:267px;top:689px" width="5" height="7"><path d="M1 0.8 L3.8 3.5 L1 6.2" fill="none" stroke="#222" stroke-width="1.4"/></svg>
<svg style="left:1104px;top:176px" width="24" height="22" viewBox="0 0 24 22">
<g transform="rotate(20 6 12)"><rect x="3" y="3" width="6" height="16" rx="1" fill="#1e90e0"/><rect x="4" y="5" width="4" height="3" fill="#e8f4ff"/><circle cx="6" cy="15" r="1.2" fill="#0a4a90"/></g>
<rect x="10" y="2" width="6" height="18" rx="1" fill="#b8b8b8"/><rect x="11" y="4" width="4" height="5" fill="#f0f0f0"/><circle cx="13" cy="16" r="1.2" fill="#444"/>
<rect x="16.5" y="2" width="6" height="18" rx="1" fill="#9a9a9a"/><rect x="17.5" y="4" width="4" height="5" fill="#e8e8e8"/><circle cx="19.5" cy="16" r="1.2" fill="#333"/>
</svg>
<div class="t" style="left:813.5px;width:600px;text-align:center;top:202.0px;font-size:7.2px;line-height:9.0px;color:#fff;transform-origin:center;">Evidovaná silniční</div>
<div class="t" style="left:813.5px;width:600px;text-align:center;top:212.0px;font-size:7.2px;line-height:9.0px;color:#fff;transform-origin:center;">vozidla</div>
<div class="t" style="left:821.5px;width:600px;text-align:center;top:294.5px;font-size:7.2px;line-height:9.0px;color:#fff;transform-origin:center;">Seznam záznamů o</div>
<div class="t" style="left:821.5px;width:600px;text-align:center;top:304.5px;font-size:7.2px;line-height:9.0px;color:#fff;transform-origin:center;">provozu silničních ...</div>
<svg style="left:1109px;top:268px" width="26" height="22" viewBox="0 0 26 22">
<circle cx="17" cy="8" r="6.5" fill="#e0202a"/><path d="M13 4 Q17 6 15 10 Q19 12 21 7" stroke="#a01018" stroke-width="1.2" fill="none"/>
<rect x="3" y="9" width="13" height="8" rx="1" fill="#8a8a8a"/><rect x="4" y="10" width="6" height="4" fill="#c8c8c8"/>
<circle cx="6" cy="18" r="2" fill="#333"/><circle cx="13" cy="18" r="2" fill="#333"/>
</svg>
<div class="a" style="left:310px;top:67.3px;width:584.6px;height:200px;background:#fff"></div>
<div class="a" style="left:310px;top:67.3px;width:584.6px;height:19.1px;background:#ebebeb"></div>
<svg style="left:315px;top:72px" width="10" height="11" viewBox="0 0 10 11"><polygon points="0.5,0.5 9.5,5 0.5,10.5" fill="#fff"/><path d="M2 8.5 L7 6" stroke="#999" stroke-width="0.8"/></svg>
<div class="t" style="left:328px;top:72.81px;font-size:8.3px;line-height:10.38px;color:#333;font-weight:bold;transform-origin:left;">Seznam záznamů o provozu vozidel</div>
<div class="t" style="left:826.5px;top:72.33px;font-size:8.6px;line-height:10.75px;color:#3a3328;font-weight:bold;transform-origin:left;">11</div>
<div class="a" style="left:844px;top:76.80000000000001px;width:7px;height:1.3px;background:#1a1a1a"></div>
<div class="a" style="left:861px;top:73.9px;width:7.5px;height:7.3px;border:1.2px solid #1a1a1a;border-radius:1px"></div>
<svg style="left:879px;top:73.9px" width="7.5" height="7.5" viewBox="0 0 7.5 7.5"><path d="M0.6 0.6L6.9 6.9M6.9 0.6L0.6 6.9" stroke="#1a1a1a" stroke-width="1.6"/></svg>
<div class="a" style="left:319.2px;top:93.2px;width:469px;height:110px;background:#fff;border:1px solid #d8e4f4"></div>
<div class="a" style="left:320px;top:93.8px;width:456px;height:12px;background:linear-gradient(#fcfdff,#eef3fa)"></div>
<div class="a" style="left:414.4px;top:94px;width:0.8px;height:11.6px;background:#e2eaf5"></div>
<div class="a" style="left:487.2px;top:94px;width:0.8px;height:11.6px;background:#e2eaf5"></div>
<div class="a" style="left:561.2px;top:94px;width:0.8px;height:11.6px;background:#e2eaf5"></div>
<div class="a" style="left:629.3px;top:94px;width:0.8px;height:11.6px;background:#e2eaf5"></div>
<div class="a" style="left:708px;top:94px;width:0.8px;height:11.6px;background:#e2eaf5"></div>
<div class="t" style="left:321.59999999999997px;top:95.8px;font-size:8.0px;line-height:10.0px;color:#404040;transform:scaleX(0.9);transform-origin:left;">Evidenční číslo dokladu</div>
<div class="t" style="left:416.79999999999995px;top:95.8px;font-size:8.0px;line-height:10.0px;color:#404040;transform:scaleX(0.9);transform-origin:left;">Vozidlo</div>
<div class="t" style="left:489.59999999999997px;top:95.8px;font-size:8.0px;line-height:10.0px;color:#404040;transform:scaleX(0.9);transform-origin:left;">Registrační značka</div>
<div class="t" style="left:563.6px;top:95.8px;font-size:8.0px;line-height:10.0px;color:#404040;transform:scaleX(0.9);transform-origin:left;">Název vozidla</div>
<div class="t" style="left:631.6999999999999px;top:95.8px;font-size:8.0px;line-height:10.0px;color:#404040;transform:scaleX(0.9);transform-origin:left;">Období od</div>
<div class="t" style="left:710.4px;top:95.8px;font-size:8.0px;line-height:10.0px;color:#404040;transform:scaleX(0.9);transform-origin:left;">Období do</div>
<div class="a" style="left:320.0px;top:105.6px;width:94.39999999999999px;height:12.5px;background:#e1edfd"></div>
<div class="t" style="left:321.4px;top:108.1px;font-size:8.0px;line-height:10.0px;color:#333;transform:scaleX(0.9);transform-origin:left;">ZPVV-2014-000001</div>
<div class="a" style="left:415.2px;top:105.6px;width:72.00000000000001px;height:12.5px;background:#e1edfd"></div>
<div class="t" style="left:416.59999999999997px;top:108.1px;font-size:8.0px;line-height:10.0px;color:#333;transform:scaleX(0.9);transform-origin:left;">11111111ABCD</div>
<div class="a" style="left:488.0px;top:105.6px;width:73.20000000000006px;height:12.5px;background:#e1edfd"></div>
<div class="t" style="left:489.4px;top:108.1px;font-size:8.0px;line-height:10.0px;color:#333;transform:scaleX(0.9);transform-origin:left;">3B44356</div>
<div class="a" style="left:562.0px;top:105.6px;width:67.29999999999991px;height:12.5px;background:#e1edfd"></div>
<div class="t" style="left:563.4000000000001px;top:108.1px;font-size:8.0px;line-height:10.0px;color:#333;transform:scaleX(0.9);transform-origin:left;">škoda octavia</div>
<div class="a" style="left:630.0999999999999px;top:105.6px;width:77.90000000000005px;height:12.5px;background:#e1edfd"></div>
<div class="t" style="left:631.5px;top:108.1px;font-size:8.0px;line-height:10.0px;color:#333;transform:scaleX(0.975);transform-origin:left;">1.12.2014 0:00</div>
<div class="a" style="left:708.8px;top:105.6px;width:67.49999999999996px;height:12.5px;background:#e1edfd"></div>
<div class="t" style="left:710.2px;top:108.1px;font-size:8.0px;line-height:10.0px;color:#333;transform:scaleX(0.975);transform-origin:left;">21.12.2014 0:00</div>
<div class="a" style="left:320.0px;top:118.1px;width:94.39999999999999px;height:12.5px;background:#d0e2fb"></div>
<div class="t" style="left:321.4px;top:120.6px;font-size:8.0px;line-height:10.0px;color:#333;transform:scaleX(0.9);transform-origin:left;">ZPVV-2017-000001</div>
<div class="a" style="left:415.2px;top:118.1px;width:72.00000000000001px;height:12.5px;background:#d0e2fb"></div>
<div class="t" style="left:416.59999999999997px;top:120.6px;font-size:8.0px;line-height:10.0px;color:#333;transform:scaleX(0.9);transform-origin:left;">2B95241</div>
<div class="a" style="left:488.0px;top:118.1px;width:73.20000000000006px;height:12.5px;background:#d0e2fb"></div>
<div class="t" style="left:489.4px;top:120.6px;font-size:8.0px;line-height:10.0px;color:#333;transform:scaleX(0.9);transform-origin:left;">2B95241</div>
<div class="a" style="left:562.0px;top:118.1px;width:67.29999999999991px;height:12.5px;background:#d0e2fb"></div>
<div class="t" style="left:563.4000000000001px;top:120.6px;font-size:8.0px;line-height:10.0px;color:#333;transform:scaleX(0.9);transform-origin:left;">Seat Ibiza</div>
<div class="a" style="left:630.0999999999999px;top:118.1px;width:77.90000000000005px;height:12.5px;background:#d0e2fb"></div>
<div class="t" style="left:631.5px;top:120.6px;font-size:8.0px;line-height:10.0px;color:#333;transform:scaleX(0.975);transform-origin:left;">1.11.2017 4:39</div>
<div class="a" style="left:708.8px;top:118.1px;width:67.49999999999996px;height:12.5px;background:#d0e2fb"></div>
<div class="t" style="left:710.2px;top:120.6px;font-size:8.0px;line-height:10.0px;color:#333;transform:scaleX(0.975);transform-origin:left;">1.11.2017 20:17</div>
<div class="a" style="left:320.0px;top:130.6px;width:94.39999999999999px;height:12.5px;background:#e1edfd"></div>
<div class="t" style="left:321.4px;top:133.1px;font-size:8.0px;line-height:10.0px;color:#333;transform:scaleX(0.9);transform-origin:left;">ZPVV-2017-000002</div>
<div class="a" style="left:415.2px;top:130.6px;width:72.00000000000001px;height:12.5px;background:#e1edfd"></div>
<div class="t" style="left:416.59999999999997px;top:133.1px;font-size:8.0px;line-height:10.0px;color:#333;transform:scaleX(0.9);transform-origin:left;">2B95241</div>
<div class="a" style="left:488.0px;top:130.6px;width:73.20000000000006px;height:12.5px;background:#e1edfd"></div>
<div class="t" style="left:489.4px;top:133.1px;font-size:8.0px;line-height:10.0px;color:#333;transform:scaleX(0.9);transform-origin:left;">2B95241</div>
<div class="a" style="left:562.0px;top:130.6px;width:67.29999999999991px;height:12.5px;background:#e1edfd"></div>
<div class="t" style="left:563.4000000000001px;top:133.1px;font-size:8.0px;line-height:10.0px;color:#333;transform:scaleX(0.9);transform-origin:left;">Seat Ibiza</div>
<div class="a" style="left:630.0999999999999px;top:130.6px;width:77.90000000000005px;height:12.5px;background:#e1edfd"></div>
<div class="t" style="left:631.5px;top:133.1px;font-size:8.0px;line-height:10.0px;color:#333;transform:scaleX(0.975);transform-origin:left;">3.11.2017 7:13</div>
<div class="a" style="left:708.8px;top:130.6px;width:67.49999999999996px;height:12.5px;background:#e1edfd"></div>
<div class="t" style="left:710.2px;top:133.1px;font-size:8.0px;line-height:10.0px;color:#333;transform:scaleX(0.975);transform-origin:left;">3.11.2017 12:43</div>
<div class="a" style="left:320.0px;top:143.1px;width:94.39999999999999px;height:12.5px;background:#d0e2fb"></div>
<div class="t" style="left:321.4px;top:145.6px;font-size:8.0px;line-height:10.0px;color:#333;transform:scaleX(0.9);transform-origin:left;">ZPVV-2017-000003</div>
<div class="a" style="left:415.2px;top:143.1px;width:72.00000000000001px;height:12.5px;background:#d0e2fb"></div>
<div class="t" style="left:416.59999999999997px;top:145.6px;font-size:8.0px;line-height:10.0px;color:#333;transform:scaleX(0.9);transform-origin:left;">2B95241</div>
<div class="a" style="left:488.0px;top:143.1px;width:73.20000000000006px;height:12.5px;background:#d0e2fb"></div>
<div class="t" style="left:489.4px;top:145.6px;font-size:8.0px;line-height:10.0px;color:#333;transform:scaleX(0.9);transform-origin:left;">2B95241</div>
<div class="a" style="left:562.0px;top:143.1px;width:67.29999999999991px;height:12.5px;background:#d0e2fb"></div>
<div class="t" style="left:563.4000000000001px;top:145.6px;font-size:8.0px;line-height:10.0px;color:#333;transform:scaleX(0.9);transform-origin:left;">Seat Ibiza</div>
<div class="a" style="left:630.0999999999999px;top:143.1px;width:77.90000000000005px;height:12.5px;background:#d0e2fb"></div>
<div class="t" style="left:631.5px;top:145.6px;font-size:8.0px;line-height:10.0px;color:#333;transform:scaleX(0.975);transform-origin:left;">6.11.2017 6:36</div>
<div class="a" style="left:708.8px;top:143.1px;width:67.49999999999996px;height:12.5px;background:#d0e2fb"></div>
<div class="t" style="left:710.2px;top:145.6px;font-size:8.0px;line-height:10.0px;color:#333;transform:scaleX(0.975);transform-origin:left;">6.11.2017 19:31</div>
<div class="a" style="left:320.0px;top:155.6px;width:94.39999999999999px;height:12.5px;background:#0d4a6f"></div>
<div class="t" style="left:321.4px;top:158.1px;font-size:8.0px;line-height:10.0px;color:#f0f4f8;transform:scaleX(0.9);transform-origin:left;">ZPVV-2017-000004</div>
<div class="a" style="left:415.2px;top:155.6px;width:72.00000000000001px;height:12.5px;background:#0d4a6f"></div>
<div class="t" style="left:416.59999999999997px;top:158.1px;font-size:8.0px;line-height:10.0px;color:#f0f4f8;transform:scaleX(0.9);transform-origin:left;">2B95241</div>
<div class="a" style="left:488.0px;top:155.6px;width:73.20000000000006px;height:12.5px;background:#0d4a6f"></div>
<div class="t" style="left:489.4px;top:158.1px;font-size:8.0px;line-height:10.0px;color:#f0f4f8;transform:scaleX(0.9);transform-origin:left;">2B95241</div>
<div class="a" style="left:562.0px;top:155.6px;width:67.29999999999991px;height:12.5px;background:#0d4a6f"></div>
<div class="t" style="left:563.4000000000001px;top:158.1px;font-size:8.0px;line-height:10.0px;color:#f0f4f8;transform:scaleX(0.9);transform-origin:left;">Seat Ibiza</div>
<div class="a" style="left:630.0999999999999px;top:155.6px;width:77.90000000000005px;height:12.5px;background:#0d4a6f"></div>
<div class="t" style="left:631.5px;top:158.1px;font-size:8.0px;line-height:10.0px;color:#f0f4f8;transform:scaleX(0.975);transform-origin:left;">8.11.2017 5:17</div>
<div class="a" style="left:708.8px;top:155.6px;width:67.49999999999996px;height:12.5px;background:#0d4a6f"></div>
<div class="t" style="left:710.2px;top:158.1px;font-size:8.0px;line-height:10.0px;color:#f0f4f8;transform:scaleX(0.975);transform-origin:left;">8.11.2017 18:17</div>
<div class="a" style="left:320.0px;top:168.1px;width:94.39999999999999px;height:12.5px;background:#d0e2fb"></div>
<div class="t" style="left:321.4px;top:170.6px;font-size:8.0px;line-height:10.0px;color:#333;transform:scaleX(0.9);transform-origin:left;">ZPVV-2018-000001</div>
<div class="a" style="left:415.2px;top:168.1px;width:72.00000000000001px;height:12.5px;background:#d0e2fb"></div>
<div class="t" style="left:416.59999999999997px;top:170.6px;font-size:8.0px;line-height:10.0px;color:#333;transform:scaleX(0.9);transform-origin:left;">2AB2222</div>
<div class="a" style="left:488.0px;top:168.1px;width:73.20000000000006px;height:12.5px;background:#d0e2fb"></div>
<div class="t" style="left:489.4px;top:170.6px;font-size:8.0px;line-height:10.0px;color:#333;transform:scaleX(0.9);transform-origin:left;">2AB2222</div>
<div class="a" style="left:562.0px;top:168.1px;width:67.29999999999991px;height:12.5px;background:#d0e2fb"></div>
<div class="t" style="left:563.4000000000001px;top:170.6px;font-size:8.0px;line-height:10.0px;color:#333;transform:scaleX(0.9);transform-origin:left;">dvě</div>
<div class="a" style="left:630.0999999999999px;top:168.1px;width:77.90000000000005px;height:12.5px;background:#d0e2fb"></div>
<div class="t" style="left:631.5px;top:170.6px;font-size:8.0px;line-height:10.0px;color:#333;transform:scaleX(0.975);transform-origin:left;">1.3.2018 0:00</div>
<div class="a" style="left:708.8px;top:168.1px;width:67.49999999999996px;height:12.5px;background:#d0e2fb"></div>
<div class="t" style="left:710.2px;top:170.6px;font-size:8.0px;line-height:10.0px;color:#333;transform:scaleX(0.975);transform-origin:left;">2.3.2018 0:00</div>
<div class="a" style="left:320.0px;top:180.6px;width:94.39999999999999px;height:12.5px;background:#e1edfd"></div>
<div class="t" style="left:321.4px;top:183.1px;font-size:8.0px;line-height:10.0px;color:#333;transform:scaleX(0.9);transform-origin:left;">ZPVV-2018-000002</div>
<div class="a" style="left:415.2px;top:180.6px;width:72.00000000000001px;height:12.5px;background:#e1edfd"></div>
<div class="t" style="left:416.59999999999997px;top:183.1px;font-size:8.0px;line-height:10.0px;color:#333;transform:scaleX(0.9);transform-origin:left;">3AB3333</div>
<div class="a" style="left:488.0px;top:180.6px;width:73.20000000000006px;height:12.5px;background:#e1edfd"></div>
<div class="t" style="left:489.4px;top:183.1px;font-size:8.0px;line-height:10.0px;color:#333;transform:scaleX(0.9);transform-origin:left;">3AB3333</div>
<div class="a" style="left:562.0px;top:180.6px;width:67.29999999999991px;height:12.5px;background:#e1edfd"></div>
<div class="t" style="left:563.4000000000001px;top:183.1px;font-size:8.0px;line-height:10.0px;color:#333;transform:scaleX(0.9);transform-origin:left;">s návěsem</div>
<div class="a" style="left:630.0999999999999px;top:180.6px;width:77.90000000000005px;height:12.5px;background:#e1edfd"></div>
<div class="t" style="left:631.5px;top:183.1px;font-size:8.0px;line-height:10.0px;color:#333;transform:scaleX(0.975);transform-origin:left;">3.3.2018 0:00</div>
<div class="a" style="left:708.8px;top:180.6px;width:67.49999999999996px;height:12.5px;background:#e1edfd"></div>
<div class="t" style="left:710.2px;top:183.1px;font-size:8.0px;line-height:10.0px;color:#333;transform:scaleX(0.975);transform-origin:left;">4.3.2018 0:00</div>
<div class="a" style="left:320.0px;top:193.1px;width:94.39999999999999px;height:12.5px;background:#d0e2fb"></div>
<div class="t" style="left:321.4px;top:195.6px;font-size:8.0px;line-height:10.0px;color:#333;transform:scaleX(0.9);transform-origin:left;">ZPV-asis-2018-000001</div>
<div class="a" style="left:415.2px;top:193.1px;width:72.00000000000001px;height:12.5px;background:#d0e2fb"></div>
<div class="t" style="left:416.59999999999997px;top:195.6px;font-size:8.0px;line-height:10.0px;color:#333;transform:scaleX(0.9);transform-origin:left;">1AB1111</div>
<div class="a" style="left:488.0px;top:193.1px;width:73.20000000000006px;height:12.5px;background:#d0e2fb"></div>
<div class="t" style="left:489.4px;top:195.6px;font-size:8.0px;line-height:10.0px;color:#333;transform:scaleX(0.9);transform-origin:left;">1AB1111</div>
<div class="a" style="left:562.0px;top:193.1px;width:67.29999999999991px;height:12.5px;background:#d0e2fb"></div>
<div class="t" style="left:563.4000000000001px;top:195.6px;font-size:8.0px;line-height:10.0px;color:#333;transform:scaleX(0.9);transform-origin:left;">základní</div>
<div class="a" style="left:630.0999999999999px;top:193.1px;width:77.90000000000005px;height:12.5px;background:#d0e2fb"></div>
<div class="t" style="left:631.5px;top:195.6px;font-size:8.0px;line-height:10.0px;color:#333;transform:scaleX(0.975);transform-origin:left;">4.3.2018 0:00</div>
<div class="a" style="left:708.8px;top:193.1px;width:67.49999999999996px;height:12.5px;background:#d0e2fb"></div>
<div class="t" style="left:710.2px;top:195.6px;font-size:8.0px;line-height:10.0px;color:#333;transform:scaleX(0.975);transform-origin:left;">5.3.2018 0:00</div>
<div class="a" style="left:776.3px;top:93.8px;width:11.5px;height:109px;background:#eff4f9"></div>
<div class="a" style="left:776.3px;top:177px;width:11.5px;height:26px;background:#d8e5f1"></div>
<svg style="left:778.5px;top:97.5px" width="7" height="5"><path d="M0.8 4 L3.5 1.2 L6.2 4" fill="none" stroke="#222" stroke-width="1.4"/></svg>
<div class="a" style="left:797.5px;top:92.5px;width:88.5px;height:15.299999999999997px;background:#4d88bd"></div>
<div class="t" style="left:541.75px;width:600px;text-align:center;top:96.15px;font-size:8.0px;line-height:10.0px;color:#eef4fa;transform:scaleX(0.9);transform-origin:center;">Zobrazení dokladu</div>
<div class="a" style="left:797.5px;top:111.8px;width:88.5px;height:15.100000000000009px;background:#4d88bd"></div>
<div class="t" style="left:541.75px;width:600px;text-align:center;top:115.35px;font-size:8.0px;line-height:10.0px;color:#eef4fa;transform:scaleX(0.9);transform-origin:center;">Nový doklad</div>
<div class="a" style="left:797.5px;top:131.4px;width:88.5px;height:15.099999999999994px;background:#4d88bd"></div>
<div class="t" style="left:541.75px;width:600px;text-align:center;top:134.95px;font-size:8.0px;line-height:10.0px;color:#eef4fa;transform:scaleX(0.9);transform-origin:center;">Smazat doklad</div>
<div class="a" style="left:797.5px;top:159.3px;width:88.5px;height:15.099999999999994px;background:#4d88bd"></div>
<div class="t" style="left:541.75px;width:600px;text-align:center;top:162.85px;font-size:8.0px;line-height:10.0px;color:#eef4fa;transform:scaleX(0.9);transform-origin:center;">Výkaz událostí</div>
<div class="a" style="left:797.5px;top:178.7px;width:88.5px;height:15.100000000000023px;background:#4d88bd"></div>
<div class="t" style="left:541.75px;width:600px;text-align:center;top:182.25px;font-size:8.0px;line-height:10.0px;color:#eef4fa;transform:scaleX(0.9);transform-origin:center;">Čerpání PHm</div>
<div class="a" style="left:293.5px;top:201.6px;width:656.5px;height:443px;background:#fff"></div>
<div class="a" style="left:293.5px;top:201.6px;width:656.5px;height:18.7px;background:#ebebeb"></div>
<svg style="left:298px;top:206px" width="10" height="11" viewBox="0 0 10 11"><polygon points="0.5,0.5 9.5,5 0.5,10.5" fill="#fff"/><path d="M2 8.5 L7 6" stroke="#999" stroke-width="0.8"/></svg>
<div class="t" style="left:311.5px;top:207.01px;font-size:8.3px;line-height:10.38px;color:#333;font-weight:bold;transform-origin:left;">Záznam o provozu silničního vozidla</div>
<div class="t" style="left:887px;top:206.23px;font-size:8.6px;line-height:10.75px;color:#3a3328;font-weight:bold;transform-origin:left;">1</div>
<div class="a" style="left:900px;top:210.70000000000002px;width:7px;height:1.3px;background:#1a1a1a"></div>
<div class="a" style="left:917px;top:207.8px;width:7.5px;height:7.3px;border:1.2px solid #1a1a1a;border-radius:1px"></div>
<svg style="left:934px;top:207.8px" width="7.5" height="7.5" viewBox="0 0 7.5 7.5"><path d="M0.6 0.6L6.9 6.9M6.9 0.6L0.6 6.9" stroke="#1a1a1a" stroke-width="1.6"/></svg>
<div class="t" style="left:301.6px;top:227.3px;font-size:8.0px;line-height:10.0px;color:#404040;transform:scaleX(0.9);transform-origin:left;">Evidenční číslo dokladu</div>
<div class="t" style="left:412.8px;top:227.3px;font-size:8.0px;line-height:10.0px;color:#404040;transform:scaleX(0.9);transform-origin:left;">Řada</div>
<div class="t" style="left:451.8px;top:227.3px;font-size:8.0px;line-height:10.0px;color:#404040;transform:scaleX(0.9);transform-origin:left;">Název řady</div>
<div class="a" style="left:302px;top:239.1px;width:107.3px;height:12.8px;background:#dde9fd"></div>
<div class="t" style="left:304px;top:240.25px;font-size:8.4px;line-height:10.5px;color:#222;font-weight:bold;transform-origin:left;">ZPVV-2017-000004</div>
<div class="a" style="left:413.7px;top:239.1px;width:34.7px;height:12.8px;background:#dde9fd"></div>
<div class="a" style="left:436px;top:239.1px;width:12.4px;height:12.8px;background:#d3e1f8"></div>
<div class="a" style="left:438.6px;top:245.0px;width:1.2px;height:1.2px;background:#f2f4f8"></div>
<div class="a" style="left:441.20000000000005px;top:245.0px;width:1.2px;height:1.2px;background:#f2f4f8"></div>
<div class="a" style="left:443.8px;top:245.0px;width:1.2px;height:1.2px;background:#f2f4f8"></div>
<div class="a" style="left:452.4px;top:239.1px;width:202.6px;height:12.8px;background:#dde9fd"></div>
<div class="a" style="left:643px;top:239.1px;width:12px;height:12.8px;background:#d3e1f8"></div>
<div class="a" style="left:645.6px;top:245.0px;width:1.2px;height:1.2px;background:#f2f4f8"></div>
<div class="a" style="left:648.2px;top:245.0px;width:1.2px;height:1.2px;background:#f2f4f8"></div>
<div class="a" style="left:650.8000000000001px;top:245.0px;width:1.2px;height:1.2px;background:#f2f4f8"></div>
<div class="t" style="left:454.5px;top:240.5px;font-size:8.0px;line-height:10.0px;color:#333;transform:scaleX(0.9);transform-origin:left;">Záznamy o provozu silničních vozidel</div>
<div class="t" style="left:301.7px;top:260.6px;font-size:8.0px;line-height:10.0px;color:#404040;transform:scaleX(0.9);transform-origin:left;">Období od</div>
<div class="a" style="left:404px;top:267px;width:1.1px;height:1.1px;background:#666"></div>
<div class="a" style="left:399px;top:267px;width:1.1px;height:1.1px;background:#666"></div>
<div class="a" style="left:394px;top:267px;width:1.1px;height:1.1px;background:#666"></div>
<div class="a" style="left:390px;top:267px;width:1.1px;height:1.1px;background:#666"></div>
<div class="a" style="left:385px;top:267px;width:1.1px;height:1.1px;background:#666"></div>
<div class="a" style="left:380px;top:267px;width:1.1px;height:1.1px;background:#666"></div>
<div class="a" style="left:375px;top:267px;width:1.1px;height:1.1px;background:#666"></div>
<div class="a" style="left:370px;top:267px;width:1.1px;height:1.1px;background:#666"></div>
<div class="a" style="left:366px;top:267px;width:1.1px;height:1.1px;background:#666"></div>
<div class="a" style="left:361px;top:267px;width:1.1px;height:1.1px;background:#666"></div>
<div class="a" style="left:356px;top:267px;width:1.1px;height:1.1px;background:#666"></div>
<div class="a" style="left:351px;top:267px;width:1.1px;height:1.1px;background:#666"></div>
<div class="a" style="left:346px;top:267px;width:1.1px;height:1.1px;background:#666"></div>
<div class="a" style="left:342px;top:267px;width:1.1px;height:1.1px;background:#666"></div>
<div class="a" style="left:413.7px;top:255.9px;width:229px;height:12.9px;background:#dbfdb5"></div>
<div class="a" style="left:630.7px;top:255.9px;width:12px;height:12.9px;background:#fdfdfd;border:1px solid #e0e8f2"></div>
<svg style="left:633.5px;top:260.4px" width="7" height="5"><path d="M0.8 0.8 L3.5 3.6 L6.2 0.8" fill="none" stroke="#111" stroke-width="1.5"/></svg>
<div class="t" style="left:415.3px;top:257.4px;font-size:8.0px;line-height:10.0px;color:#2a2a2a;transform:scaleX(0.975);transform-origin:left;">8.11.2017 5:17</div>
<div class="t" style="left:301.7px;top:277.25px;font-size:8.0px;line-height:10.0px;color:#404040;transform:scaleX(0.9);transform-origin:left;">Období do</div>
<div class="a" style="left:404px;top:284px;width:1.1px;height:1.1px;background:#666"></div>
<div class="a" style="left:399px;top:284px;width:1.1px;height:1.1px;background:#666"></div>
<div class="a" style="left:394px;top:284px;width:1.1px;height:1.1px;background:#666"></div>
<div class="a" style="left:390px;top:284px;width:1.1px;height:1.1px;background:#666"></div>
<div class="a" style="left:385px;top:284px;width:1.1px;height:1.1px;background:#666"></div>
<div class="a" style="left:380px;top:284px;width:1.1px;height:1.1px;background:#666"></div>
<div class="a" style="left:375px;top:284px;width:1.1px;height:1.1px;background:#666"></div>
<div class="a" style="left:370px;top:284px;width:1.1px;height:1.1px;background:#666"></div>
<div class="a" style="left:366px;top:284px;width:1.1px;height:1.1px;background:#666"></div>
<div class="a" style="left:361px;top:284px;width:1.1px;height:1.1px;background:#666"></div>
<div class="a" style="left:356px;top:284px;width:1.1px;height:1.1px;background:#666"></div>
<div class="a" style="left:351px;top:284px;width:1.1px;height:1.1px;background:#666"></div>
<div class="a" style="left:346px;top:284px;width:1.1px;height:1.1px;background:#666"></div>
<div class="a" style="left:342px;top:284px;width:1.1px;height:1.1px;background:#666"></div>
<div class="a" style="left:413.7px;top:272.55px;width:229px;height:12.9px;background:#dbfdb5"></div>
<div class="a" style="left:630.7px;top:272.55px;width:12px;height:12.9px;background:#fdfdfd;border:1px solid #e0e8f2"></div>
<svg style="left:633.5px;top:277.05px" width="7" height="5"><path d="M0.8 0.8 L3.5 3.6 L6.2 0.8" fill="none" stroke="#111" stroke-width="1.5"/></svg>
<div class="t" style="left:415.3px;top:274.05px;font-size:8.0px;line-height:10.0px;color:#2a2a2a;transform:scaleX(0.975);transform-origin:left;">8.11.2017 18:17</div>
<div class="t" style="left:301.7px;top:293.9px;font-size:8.0px;line-height:10.0px;color:#404040;transform:scaleX(0.9);transform-origin:left;">Vozidlo</div>
<div class="a" style="left:404px;top:300px;width:1.1px;height:1.1px;background:#666"></div>
<div class="a" style="left:399px;top:300px;width:1.1px;height:1.1px;background:#666"></div>
<div class="a" style="left:394px;top:300px;width:1.1px;height:1.1px;background:#666"></div>
<div class="a" style="left:390px;top:300px;width:1.1px;height:1.1px;background:#666"></div>
<div class="a" style="left:385px;top:300px;width:1.1px;height:1.1px;background:#666"></div>
<div class="a" style="left:380px;top:300px;width:1.1px;height:1.1px;background:#666"></div>
<div class="a" style="left:375px;top:300px;width:1.1px;height:1.1px;background:#666"></div>
<div class="a" style="left:370px;top:300px;width:1.1px;height:1.1px;background:#666"></div>
<div class="a" style="left:366px;top:300px;width:1.1px;height:1.1px;background:#666"></div>
<div class="a" style="left:361px;top:300px;width:1.1px;height:1.1px;background:#666"></div>
<div class="a" style="left:356px;top:300px;width:1.1px;height:1.1px;background:#666"></div>
<div class="a" style="left:351px;top:300px;width:1.1px;height:1.1px;background:#666"></div>
<div class="a" style="left:346px;top:300px;width:1.1px;height:1.1px;background:#666"></div>
<div class="a" style="left:342px;top:300px;width:1.1px;height:1.1px;background:#666"></div>
<div class="a" style="left:337px;top:300px;width:1.1px;height:1.1px;background:#666"></div>
<div class="a" style="left:332px;top:300px;width:1.1px;height:1.1px;background:#666"></div>
<div class="a" style="left:413.7px;top:289.2px;width:229px;height:12.9px;background:#dde9fd"></div>
<div class="a" style="left:631px;top:289.2px;width:11.7px;height:12.9px;background:#d6e3f9"></div>
<div class="a" style="left:633.2px;top:295.2px;width:1.2px;height:1.2px;background:#f4f6fa"></div>
<div class="a" style="left:635.8000000000001px;top:295.2px;width:1.2px;height:1.2px;background:#f4f6fa"></div>
<div class="a" style="left:638.4000000000001px;top:295.2px;width:1.2px;height:1.2px;background:#f4f6fa"></div>
<div class="t" style="left:415.3px;top:290.7px;font-size:8.0px;line-height:10.0px;color:#2a2a2a;transform:scaleX(0.9);transform-origin:left;">2B95241</div>
<div class="t" style="left:301.7px;top:310.55px;font-size:8.0px;line-height:10.0px;color:#404040;transform:scaleX(0.9);transform-origin:left;">Registrační značka</div>
<div class="a" style="left:404px;top:317px;width:1.1px;height:1.1px;background:#666"></div>
<div class="a" style="left:399px;top:317px;width:1.1px;height:1.1px;background:#666"></div>
<div class="a" style="left:394px;top:317px;width:1.1px;height:1.1px;background:#666"></div>
<div class="a" style="left:390px;top:317px;width:1.1px;height:1.1px;background:#666"></div>
<div class="a" style="left:385px;top:317px;width:1.1px;height:1.1px;background:#666"></div>
<div class="a" style="left:380px;top:317px;width:1.1px;height:1.1px;background:#666"></div>
<div class="a" style="left:375px;top:317px;width:1.1px;height:1.1px;background:#666"></div>
<div class="a" style="left:370px;top:317px;width:1.1px;height:1.1px;background:#666"></div>
<div class="a" style="left:413.7px;top:305.85px;width:229px;height:12.9px;background:#dde9fd"></div>
<div class="a" style="left:631px;top:305.85px;width:11.7px;height:12.9px;background:#d6e3f9"></div>
<div class="a" style="left:633.2px;top:311.85px;width:1.2px;height:1.2px;background:#f4f6fa"></div>
<div class="a" style="left:635.8000000000001px;top:311.85px;width:1.2px;height:1.2px;background:#f4f6fa"></div>
<div class="a" style="left:638.4000000000001px;top:311.85px;width:1.2px;height:1.2px;background:#f4f6fa"></div>
<div class="t" style="left:415.3px;top:307.35px;font-size:8.0px;line-height:10.0px;color:#2a2a2a;transform:scaleX(0.9);transform-origin:left;">2B95241</div>
<div class="t" style="left:301.7px;top:327.2px;font-size:8.0px;line-height:10.0px;color:#404040;transform:scaleX(0.9);transform-origin:left;">Název vozidla</div>
<div class="a" style="left:404px;top:334px;width:1.1px;height:1.1px;background:#666"></div>
<div class="a" style="left:399px;top:334px;width:1.1px;height:1.1px;background:#666"></div>
<div class="a" style="left:394px;top:334px;width:1.1px;height:1.1px;background:#666"></div>
<div class="a" style="left:390px;top:334px;width:1.1px;height:1.1px;background:#666"></div>
<div class="a" style="left:385px;top:334px;width:1.1px;height:1.1px;background:#666"></div>
<div class="a" style="left:380px;top:334px;width:1.1px;height:1.1px;background:#666"></div>
<div class="a" style="left:375px;top:334px;width:1.1px;height:1.1px;background:#666"></div>
<div class="a" style="left:370px;top:334px;width:1.1px;height:1.1px;background:#666"></div>
<div class="a" style="left:366px;top:334px;width:1.1px;height:1.1px;background:#666"></div>
<div class="a" style="left:361px;top:334px;width:1.1px;height:1.1px;background:#666"></div>
<div class="a" style="left:356px;top:334px;width:1.1px;height:1.1px;background:#666"></div>
<div class="a" style="left:351px;top:334px;width:1.1px;height:1.1px;background:#666"></div>
<div class="a" style="left:413.7px;top:322.5px;width:229px;height:12.9px;background:#dde9fd"></div>
<div class="t" style="left:415.3px;top:324.0px;font-size:8.0px;line-height:10.0px;color:#2a2a2a;transform:scaleX(0.9);transform-origin:left;">Seat Ibiza</div>
<div class="t" style="left:301.7px;top:343.85px;font-size:8.0px;line-height:10.0px;color:#404040;transform:scaleX(0.9);transform-origin:left;">Přípojné vozidlo</div>
<div class="a" style="left:404px;top:350px;width:1.1px;height:1.1px;background:#666"></div>
<div class="a" style="left:399px;top:350px;width:1.1px;height:1.1px;background:#666"></div>
<div class="a" style="left:394px;top:350px;width:1.1px;height:1.1px;background:#666"></div>
<div class="a" style="left:390px;top:350px;width:1.1px;height:1.1px;background:#666"></div>
<div class="a" style="left:385px;top:350px;width:1.1px;height:1.1px;background:#666"></div>
<div class="a" style="left:380px;top:350px;width:1.1px;height:1.1px;background:#666"></div>
<div class="a" style="left:375px;top:350px;width:1.1px;height:1.1px;background:#666"></div>
<div class="a" style="left:370px;top:350px;width:1.1px;height:1.1px;background:#666"></div>
<div class="a" style="left:366px;top:350px;width:1.1px;height:1.1px;background:#666"></div>
<div class="a" style="left:361px;top:350px;width:1.1px;height:1.1px;background:#666"></div>
<div class="a" style="left:413.7px;top:339.15px;width:229px;height:12.9px;background:#dde9fd"></div>
<div class="a" style="left:631px;top:339.15px;width:11.7px;height:12.9px;background:#d6e3f9"></div>
<div class="a" style="left:633.2px;top:345.15px;width:1.2px;height:1.2px;background:#f4f6fa"></div>
<div class="a" style="left:635.8000000000001px;top:345.15px;width:1.2px;height:1.2px;background:#f4f6fa"></div>
<div class="a" style="left:638.4000000000001px;top:345.15px;width:1.2px;height:1.2px;background:#f4f6fa"></div>
<div class="t" style="left:301.7px;top:360.5px;font-size:8.0px;line-height:10.0px;color:#404040;transform:scaleX(0.9);transform-origin:left;">Registrační značka přípojné</div>
<div class="a" style="left:404px;top:367px;width:1.1px;height:1.1px;background:#666"></div>
<div class="a" style="left:399px;top:367px;width:1.1px;height:1.1px;background:#666"></div>
<div class="a" style="left:413.7px;top:355.8px;width:229px;height:12.9px;background:#dde9fd"></div>
<div class="t" style="left:301.7px;top:377.15px;font-size:8.0px;line-height:10.0px;color:#404040;transform:scaleX(0.9);transform-origin:left;">Název připojného vozidla</div>
<div class="a" style="left:404px;top:384px;width:1.1px;height:1.1px;background:#666"></div>
<div class="a" style="left:399px;top:384px;width:1.1px;height:1.1px;background:#666"></div>
<div class="a" style="left:394px;top:384px;width:1.1px;height:1.1px;background:#666"></div>
<div class="a" style="left:390px;top:384px;width:1.1px;height:1.1px;background:#666"></div>
<div class="a" style="left:413.7px;top:372.45px;width:229px;height:12.9px;background:#dde9fd"></div>
<div class="t" style="left:301.7px;top:393.8px;font-size:8.0px;line-height:10.0px;color:#404040;transform:scaleX(0.9);transform-origin:left;">Vlastní číslo dokladu</div>
<div class="a" style="left:404px;top:400px;width:1.1px;height:1.1px;background:#666"></div>
<div class="a" style="left:399px;top:400px;width:1.1px;height:1.1px;background:#666"></div>
<div class="a" style="left:394px;top:400px;width:1.1px;height:1.1px;background:#666"></div>
<div class="a" style="left:390px;top:400px;width:1.1px;height:1.1px;background:#666"></div>
<div class="a" style="left:385px;top:400px;width:1.1px;height:1.1px;background:#666"></div>
<div class="a" style="left:380px;top:400px;width:1.1px;height:1.1px;background:#666"></div>
<div class="a" style="left:375px;top:400px;width:1.1px;height:1.1px;background:#666"></div>
<div class="a" style="left:413.7px;top:389.1px;width:229px;height:12.9px;background:#fff;border:1px solid #d6e2f2"></div>
<div class="t" style="left:301.7px;top:410.45px;font-size:8.0px;line-height:10.0px;color:#404040;transform:scaleX(0.9);transform-origin:left;">Vykazující osoba</div>
<div class="a" style="left:404px;top:417px;width:1.1px;height:1.1px;background:#666"></div>
<div class="a" style="left:399px;top:417px;width:1.1px;height:1.1px;background:#666"></div>
<div class="a" style="left:394px;top:417px;width:1.1px;height:1.1px;background:#666"></div>
<div class="a" style="left:390px;top:417px;width:1.1px;height:1.1px;background:#666"></div>
<div class="a" style="left:385px;top:417px;width:1.1px;height:1.1px;background:#666"></div>
<div class="a" style="left:380px;top:417px;width:1.1px;height:1.1px;background:#666"></div>
<div class="a" style="left:375px;top:417px;width:1.1px;height:1.1px;background:#666"></div>
<div class="a" style="left:370px;top:417px;width:1.1px;height:1.1px;background:#666"></div>
<div class="a" style="left:366px;top:417px;width:1.1px;height:1.1px;background:#666"></div>
<div class="a" style="left:361px;top:417px;width:1.1px;height:1.1px;background:#666"></div>
<div class="a" style="left:413.7px;top:405.75px;width:229px;height:12.9px;background:#dde9fd"></div>
<div class="a" style="left:631px;top:405.75px;width:11.7px;height:12.9px;background:#d6e3f9"></div>
<div class="a" style="left:633.2px;top:411.75px;width:1.2px;height:1.2px;background:#f4f6fa"></div>
<div class="a" style="left:635.8000000000001px;top:411.75px;width:1.2px;height:1.2px;background:#f4f6fa"></div>
<div class="a" style="left:638.4000000000001px;top:411.75px;width:1.2px;height:1.2px;background:#f4f6fa"></div>
<div class="t" style="left:415.3px;top:407.25px;font-size:8.0px;line-height:10.0px;color:#2a2a2a;transform:scaleX(0.9);transform-origin:left;">Svoboda Josef</div>
<div class="t" style="left:301.7px;top:427.1px;font-size:8.0px;line-height:10.0px;color:#404040;transform:scaleX(0.9);transform-origin:left;">Druhá vykazující osoba</div>
<div class="a" style="left:404px;top:434px;width:1.1px;height:1.1px;background:#666"></div>
<div class="a" style="left:399px;top:434px;width:1.1px;height:1.1px;background:#666"></div>
<div class="a" style="left:394px;top:434px;width:1.1px;height:1.1px;background:#666"></div>
<div class="a" style="left:390px;top:434px;width:1.1px;height:1.1px;background:#666"></div>
<div class="a" style="left:385px;top:434px;width:1.1px;height:1.1px;background:#666"></div>
<div class="a" style="left:413.7px;top:422.4px;width:229px;height:12.9px;background:#fff;border:1px solid #d6e2f2"></div>
<div class="t" style="left:301.7px;top:443.75px;font-size:8.0px;line-height:10.0px;color:#404040;transform:scaleX(0.9);transform-origin:left;">Hospodářské středisko</div>
<div class="a" style="left:404px;top:450px;width:1.1px;height:1.1px;background:#666"></div>
<div class="a" style="left:399px;top:450px;width:1.1px;height:1.1px;background:#666"></div>
<div class="a" style="left:394px;top:450px;width:1.1px;height:1.1px;background:#666"></div>
<div class="a" style="left:390px;top:450px;width:1.1px;height:1.1px;background:#666"></div>
<div class="a" style="left:385px;top:450px;width:1.1px;height:1.1px;background:#666"></div>
<div class="a" style="left:380px;top:450px;width:1.1px;height:1.1px;background:#666"></div>
<div class="a" style="left:413.7px;top:439.04999999999995px;width:229px;height:12.9px;background:#fff;border:1px solid #d6e2f2"></div>
<div class="t" style="left:301.7px;top:460.4px;font-size:8.0px;line-height:10.0px;color:#404040;transform:scaleX(0.9);transform-origin:left;">Název hospodářského střediska</div>
<div class="a" style="left:413.7px;top:455.7px;width:229px;height:12.9px;background:#dde9fd"></div>
<div class="t" style="left:301.7px;top:473.5px;font-size:8.0px;line-height:10.0px;color:#666;transform:scaleX(0.9);transform-origin:left;">. . . . .</div>
<div class="a" style="left:413.7px;top:472.5px;width:229px;height:6px;background:#fff;border:1px solid #d6e2f2;border-bottom:none"></div>
<div class="a" style="left:293.5px;top:478.5px;width:300px;height:30px;background:#fff"></div>
<div class="a" style="left:644px;top:255.3px;width:11.8px;height:223px;background:#d6e4f0"></div>
<div class="a" style="left:644px;top:255.3px;width:11.8px;height:11.5px;background:#4a7fb0"></div>
<svg style="left:646.5px;top:258.8px" width="7" height="5"><path d="M0.8 4 L3.5 1.2 L6.2 4" fill="none" stroke="#fff" stroke-width="1.5"/></svg>
<div class="t" style="left:301.7px;top:524.1px;font-size:8.0px;line-height:10.0px;color:#404040;transform:scaleX(0.9);transform-origin:left;">Počáteční stav počítadla</div>
<div class="a" style="left:404px;top:530px;width:1.1px;height:1.1px;background:#666"></div>
<div class="a" style="left:399px;top:530px;width:1.1px;height:1.1px;background:#666"></div>
<div class="a" style="left:394px;top:530px;width:1.1px;height:1.1px;background:#666"></div>
<div class="a" style="left:390px;top:530px;width:1.1px;height:1.1px;background:#666"></div>
<div class="a" style="left:385px;top:530px;width:1.1px;height:1.1px;background:#666"></div>
<div class="a" style="left:413.8px;top:519.4px;width:54.5px;height:12.9px;background:#dbfdb5"></div>
<div class="t" style="right:701.7px;top:520.9px;font-size:8.0px;line-height:10.0px;color:#2a2a2a;transform:scaleX(0.9);transform-origin:right;">120 981</div>
<div class="t" style="left:301.7px;top:540.72px;font-size:8.0px;line-height:10.0px;color:#404040;transform:scaleX(0.9);transform-origin:left;">Výkon za provoz</div>
<div class="a" style="left:404px;top:547px;width:1.1px;height:1.1px;background:#666"></div>
<div class="a" style="left:399px;top:547px;width:1.1px;height:1.1px;background:#666"></div>
<div class="a" style="left:394px;top:547px;width:1.1px;height:1.1px;background:#666"></div>
<div class="a" style="left:390px;top:547px;width:1.1px;height:1.1px;background:#666"></div>
<div class="a" style="left:385px;top:547px;width:1.1px;height:1.1px;background:#666"></div>
<div class="a" style="left:380px;top:547px;width:1.1px;height:1.1px;background:#666"></div>
<div class="a" style="left:375px;top:547px;width:1.1px;height:1.1px;background:#666"></div>
<div class="a" style="left:370px;top:547px;width:1.1px;height:1.1px;background:#666"></div>
<div class="a" style="left:366px;top:547px;width:1.1px;height:1.1px;background:#666"></div>
<div class="a" style="left:361px;top:547px;width:1.1px;height:1.1px;background:#666"></div>
<div class="a" style="left:413.8px;top:536.02px;width:54.5px;height:12.9px;background:#dde9fd"></div>
<div class="t" style="right:701.7px;top:537.52px;font-size:8.0px;line-height:10.0px;color:#2a2a2a;transform:scaleX(0.9);transform-origin:right;">408,00</div>
<div class="t" style="left:301.7px;top:557.34px;font-size:8.0px;line-height:10.0px;color:#404040;transform:scaleX(0.9);transform-origin:left;">Konečný stav počítadla</div>
<div class="a" style="left:404px;top:564px;width:1.1px;height:1.1px;background:#666"></div>
<div class="a" style="left:399px;top:564px;width:1.1px;height:1.1px;background:#666"></div>
<div class="a" style="left:394px;top:564px;width:1.1px;height:1.1px;background:#666"></div>
<div class="a" style="left:390px;top:564px;width:1.1px;height:1.1px;background:#666"></div>
<div class="a" style="left:385px;top:564px;width:1.1px;height:1.1px;background:#666"></div>
<div class="a" style="left:413.8px;top:552.64px;width:54.5px;height:12.9px;background:#dde9fd"></div>
<div class="t" style="right:701.7px;top:554.14px;font-size:8.0px;line-height:10.0px;color:#2a2a2a;transform:scaleX(0.9);transform-origin:right;">121 389</div>
<div class="t" style="left:301.7px;top:573.96px;font-size:8.0px;line-height:10.0px;color:#404040;transform:scaleX(0.9);transform-origin:left;">Konečný stav počítadla cílový</div>
<div class="a" style="left:404px;top:580px;width:1.1px;height:1.1px;background:#666"></div>
<div class="a" style="left:413.8px;top:569.26px;width:54.5px;height:12.9px;background:#fff;border:1px solid #d6e2f2"></div>
<div class="t" style="right:701.7px;top:570.76px;font-size:8.0px;line-height:10.0px;color:#2a2a2a;transform:scaleX(0.9);transform-origin:right;">121 389,0</div>
<div class="t" style="left:301.7px;top:590.58px;font-size:8.0px;line-height:10.0px;color:#404040;transform:scaleX(0.9);transform-origin:left;">Zbývá vykázat</div>
<div class="a" style="left:404px;top:597px;width:1.1px;height:1.1px;background:#666"></div>
<div class="a" style="left:399px;top:597px;width:1.1px;height:1.1px;background:#666"></div>
<div class="a" style="left:394px;top:597px;width:1.1px;height:1.1px;background:#666"></div>
<div class="a" style="left:390px;top:597px;width:1.1px;height:1.1px;background:#666"></div>
<div class="a" style="left:385px;top:597px;width:1.1px;height:1.1px;background:#666"></div>
<div class="a" style="left:380px;top:597px;width:1.1px;height:1.1px;background:#666"></div>
<div class="a" style="left:375px;top:597px;width:1.1px;height:1.1px;background:#666"></div>
<div class="a" style="left:370px;top:597px;width:1.1px;height:1.1px;background:#666"></div>
<div class="a" style="left:366px;top:597px;width:1.1px;height:1.1px;background:#666"></div>
<div class="a" style="left:361px;top:597px;width:1.1px;height:1.1px;background:#666"></div>
<div class="a" style="left:356px;top:597px;width:1.1px;height:1.1px;background:#666"></div>
<div class="a" style="left:413.8px;top:585.88px;width:54.5px;height:12.9px;background:#dde9fd"></div>
<div class="t" style="right:701.7px;top:587.38px;font-size:8.0px;line-height:10.0px;color:#9aa0a8;transform:scaleX(0.9);transform-origin:right;">0</div>
<div class="t" style="left:301.7px;top:607.2px;font-size:8.0px;line-height:10.0px;color:#404040;transform:scaleX(0.9);transform-origin:left;">Spotřeba PHm - agregát</div>
<div class="a" style="left:404px;top:614px;width:1.1px;height:1.1px;background:#666"></div>
<div class="a" style="left:399px;top:614px;width:1.1px;height:1.1px;background:#666"></div>
<div class="a" style="left:394px;top:614px;width:1.1px;height:1.1px;background:#666"></div>
<div class="a" style="left:390px;top:614px;width:1.1px;height:1.1px;background:#666"></div>
<div class="a" style="left:385px;top:614px;width:1.1px;height:1.1px;background:#666"></div>
<div class="a" style="left:413.8px;top:602.5px;width:54.5px;height:12.9px;background:#dde9fd"></div>
<div class="t" style="right:701.7px;top:604.0px;font-size:8.0px;line-height:10.0px;color:#2a2a2a;transform:scaleX(0.9);transform-origin:right;">24,57</div>
<div class="t" style="left:301.7px;top:623.82px;font-size:8.0px;line-height:10.0px;color:#404040;transform:scaleX(0.9);transform-origin:left;">Vykázaný čas celkem</div>
<div class="a" style="left:404px;top:630px;width:1.1px;height:1.1px;background:#666"></div>
<div class="a" style="left:399px;top:630px;width:1.1px;height:1.1px;background:#666"></div>
<div class="a" style="left:394px;top:630px;width:1.1px;height:1.1px;background:#666"></div>
<div class="a" style="left:390px;top:630px;width:1.1px;height:1.1px;background:#666"></div>
<div class="a" style="left:385px;top:630px;width:1.1px;height:1.1px;background:#666"></div>
<div class="a" style="left:380px;top:630px;width:1.1px;height:1.1px;background:#666"></div>
<div class="a" style="left:375px;top:630px;width:1.1px;height:1.1px;background:#666"></div>
<div class="a" style="left:413.8px;top:619.12px;width:54.5px;height:12.9px;background:#dde9fd"></div>
<div class="t" style="right:701.7px;top:620.62px;font-size:8.0px;line-height:10.0px;color:#2a2a2a;transform:scaleX(0.9);transform-origin:right;">5,71</div>
<div class="a" style="left:661px;top:226.5px;width:280.4px;height:250px;background:#f7faff;border:1px solid #dbe6f3"></div>
<div class="a" style="left:662px;top:226.5px;width:68px;height:14px;background:#f7faff;border:1px solid #dbe6f3;border-bottom:none"></div>
<div class="a" style="left:661px;top:226.5px;width:290px;height:0px;"></div>
<div class="a" style="left:730.5px;top:226px;width:211px;height:14px;background:#fff;border-bottom:1px solid #dbe6f3"></div>
<div class="t" style="left:665.5px;top:228.5px;font-size:8.0px;line-height:10.0px;color:#404040;transform:scaleX(0.9);transform-origin:left;">Obchodní partner</div>
<div class="t" style="left:733.5px;top:229.0px;font-size:8.0px;line-height:10.0px;color:#303030;transform:scaleX(0.9);transform-origin:left;">Poznámky</div>
<div class="a" style="left:661px;top:239.5px;width:1px;height:240px;background:#dbe6f3"></div>
<div class="t" style="left:668.8px;top:255.1px;font-size:8.0px;line-height:10.0px;color:#404040;transform:scaleX(0.9);transform-origin:left;">Kód partnera</div>
<div class="a" style="left:755px;top:262px;width:1.1px;height:1.1px;background:#666"></div>
<div class="a" style="left:750px;top:262px;width:1.1px;height:1.1px;background:#666"></div>
<div class="a" style="left:745px;top:262px;width:1.1px;height:1.1px;background:#666"></div>
<div class="a" style="left:741px;top:262px;width:1.1px;height:1.1px;background:#666"></div>
<div class="a" style="left:736px;top:262px;width:1.1px;height:1.1px;background:#666"></div>
<div class="a" style="left:731px;top:262px;width:1.1px;height:1.1px;background:#666"></div>
<div class="a" style="left:726px;top:262px;width:1.1px;height:1.1px;background:#666"></div>
<div class="a" style="left:721px;top:262px;width:1.1px;height:1.1px;background:#666"></div>
<div class="a" style="left:717px;top:262px;width:1.1px;height:1.1px;background:#666"></div>
<div class="a" style="left:765.2px;top:249.8px;width:167.4px;height:12.9px;background:#fff;border:1px solid #d6e2f2"></div>
<div class="a" style="left:922.5px;top:255.8px;width:1.2px;height:1.2px;background:#222"></div>
<div class="a" style="left:925.1px;top:255.8px;width:1.2px;height:1.2px;background:#222"></div>
<div class="a" style="left:927.7px;top:255.8px;width:1.2px;height:1.2px;background:#222"></div>
<div class="t" style="left:668.8px;top:271.75px;font-size:8.0px;line-height:10.0px;color:#404040;transform:scaleX(0.9);transform-origin:left;">Obchodní partner</div>
<div class="a" style="left:755px;top:278px;width:1.1px;height:1.1px;background:#666"></div>
<div class="a" style="left:750px;top:278px;width:1.1px;height:1.1px;background:#666"></div>
<div class="a" style="left:745px;top:278px;width:1.1px;height:1.1px;background:#666"></div>
<div class="a" style="left:741px;top:278px;width:1.1px;height:1.1px;background:#666"></div>
<div class="a" style="left:736px;top:278px;width:1.1px;height:1.1px;background:#666"></div>
<div class="a" style="left:731px;top:278px;width:1.1px;height:1.1px;background:#666"></div>
<div class="a" style="left:765.2px;top:266.45px;width:167.4px;height:12.9px;background:#fff;border:1px solid #d6e2f2"></div>
<div class="a" style="left:922.5px;top:272.45px;width:1.2px;height:1.2px;background:#222"></div>
<div class="a" style="left:925.1px;top:272.45px;width:1.2px;height:1.2px;background:#222"></div>
<div class="a" style="left:927.7px;top:272.45px;width:1.2px;height:1.2px;background:#222"></div>
<div class="t" style="left:668.8px;top:288.4px;font-size:8.0px;line-height:10.0px;color:#404040;transform:scaleX(0.9);transform-origin:left;">Ulice</div>
<div class="a" style="left:755px;top:295px;width:1.1px;height:1.1px;background:#666"></div>
<div class="a" style="left:750px;top:295px;width:1.1px;height:1.1px;background:#666"></div>
<div class="a" style="left:745px;top:295px;width:1.1px;height:1.1px;background:#666"></div>
<div class="a" style="left:741px;top:295px;width:1.1px;height:1.1px;background:#666"></div>
<div class="a" style="left:736px;top:295px;width:1.1px;height:1.1px;background:#666"></div>
<div class="a" style="left:731px;top:295px;width:1.1px;height:1.1px;background:#666"></div>
<div class="a" style="left:726px;top:295px;width:1.1px;height:1.1px;background:#666"></div>
<div class="a" style="left:721px;top:295px;width:1.1px;height:1.1px;background:#666"></div>
<div class="a" style="left:717px;top:295px;width:1.1px;height:1.1px;background:#666"></div>
<div class="a" style="left:712px;top:295px;width:1.1px;height:1.1px;background:#666"></div>
<div class="a" style="left:707px;top:295px;width:1.1px;height:1.1px;background:#666"></div>
<div class="a" style="left:702px;top:295px;width:1.1px;height:1.1px;background:#666"></div>
<div class="a" style="left:697px;top:295px;width:1.1px;height:1.1px;background:#666"></div>
<div class="a" style="left:693px;top:295px;width:1.1px;height:1.1px;background:#666"></div>
<div class="a" style="left:765.2px;top:283.1px;width:167.4px;height:12.9px;background:#dde9fd"></div>
<div class="t" style="left:668.8px;top:305.05px;font-size:8.0px;line-height:10.0px;color:#404040;transform:scaleX(0.9);transform-origin:left;">Obec</div>
<div class="a" style="left:755px;top:312px;width:1.1px;height:1.1px;background:#666"></div>
<div class="a" style="left:750px;top:312px;width:1.1px;height:1.1px;background:#666"></div>
<div class="a" style="left:745px;top:312px;width:1.1px;height:1.1px;background:#666"></div>
<div class="a" style="left:741px;top:312px;width:1.1px;height:1.1px;background:#666"></div>
<div class="a" style="left:736px;top:312px;width:1.1px;height:1.1px;background:#666"></div>
<div class="a" style="left:731px;top:312px;width:1.1px;height:1.1px;background:#666"></div>
<div class="a" style="left:726px;top:312px;width:1.1px;height:1.1px;background:#666"></div>
<div class="a" style="left:721px;top:312px;width:1.1px;height:1.1px;background:#666"></div>
<div class="a" style="left:717px;top:312px;width:1.1px;height:1.1px;background:#666"></div>
<div class="a" style="left:712px;top:312px;width:1.1px;height:1.1px;background:#666"></div>
<div class="a" style="left:707px;top:312px;width:1.1px;height:1.1px;background:#666"></div>
<div class="a" style="left:702px;top:312px;width:1.1px;height:1.1px;background:#666"></div>
<div class="a" style="left:697px;top:312px;width:1.1px;height:1.1px;background:#666"></div>
<div class="a" style="left:693px;top:312px;width:1.1px;height:1.1px;background:#666"></div>
<div class="a" style="left:765.2px;top:299.75px;width:167.4px;height:12.9px;background:#dde9fd"></div>
<div class="t" style="left:668.8px;top:321.7px;font-size:8.0px;line-height:10.0px;color:#404040;transform:scaleX(0.9);transform-origin:left;">PSČ</div>
<div class="a" style="left:755px;top:328px;width:1.1px;height:1.1px;background:#666"></div>
<div class="a" style="left:750px;top:328px;width:1.1px;height:1.1px;background:#666"></div>
<div class="a" style="left:745px;top:328px;width:1.1px;height:1.1px;background:#666"></div>
<div class="a" style="left:741px;top:328px;width:1.1px;height:1.1px;background:#666"></div>
<div class="a" style="left:736px;top:328px;width:1.1px;height:1.1px;background:#666"></div>
<div class="a" style="left:731px;top:328px;width:1.1px;height:1.1px;background:#666"></div>
<div class="a" style="left:726px;top:328px;width:1.1px;height:1.1px;background:#666"></div>
<div class="a" style="left:721px;top:328px;width:1.1px;height:1.1px;background:#666"></div>
<div class="a" style="left:717px;top:328px;width:1.1px;height:1.1px;background:#666"></div>
<div class="a" style="left:712px;top:328px;width:1.1px;height:1.1px;background:#666"></div>
<div class="a" style="left:707px;top:328px;width:1.1px;height:1.1px;background:#666"></div>
<div class="a" style="left:702px;top:328px;width:1.1px;height:1.1px;background:#666"></div>
<div class="a" style="left:697px;top:328px;width:1.1px;height:1.1px;background:#666"></div>
<div class="a" style="left:693px;top:328px;width:1.1px;height:1.1px;background:#666"></div>
<div class="a" style="left:688px;top:328px;width:1.1px;height:1.1px;background:#666"></div>
<div class="a" style="left:765.2px;top:316.4px;width:167.4px;height:12.9px;background:#dde9fd"></div>
<div class="t" style="left:668.8px;top:338.35px;font-size:8.0px;line-height:10.0px;color:#404040;transform:scaleX(0.9);transform-origin:left;">Stát</div>
<div class="a" style="left:755px;top:345px;width:1.1px;height:1.1px;background:#666"></div>
<div class="a" style="left:750px;top:345px;width:1.1px;height:1.1px;background:#666"></div>
<div class="a" style="left:745px;top:345px;width:1.1px;height:1.1px;background:#666"></div>
<div class="a" style="left:741px;top:345px;width:1.1px;height:1.1px;background:#666"></div>
<div class="a" style="left:736px;top:345px;width:1.1px;height:1.1px;background:#666"></div>
<div class="a" style="left:731px;top:345px;width:1.1px;height:1.1px;background:#666"></div>
<div class="a" style="left:726px;top:345px;width:1.1px;height:1.1px;background:#666"></div>
<div class="a" style="left:721px;top:345px;width:1.1px;height:1.1px;background:#666"></div>
<div class="a" style="left:717px;top:345px;width:1.1px;height:1.1px;background:#666"></div>
<div class="a" style="left:712px;top:345px;width:1.1px;height:1.1px;background:#666"></div>
<div class="a" style="left:707px;top:345px;width:1.1px;height:1.1px;background:#666"></div>
<div class="a" style="left:702px;top:345px;width:1.1px;height:1.1px;background:#666"></div>
<div class="a" style="left:697px;top:345px;width:1.1px;height:1.1px;background:#666"></div>
<div class="a" style="left:693px;top:345px;width:1.1px;height:1.1px;background:#666"></div>
<div class="a" style="left:688px;top:345px;width:1.1px;height:1.1px;background:#666"></div>
<div class="a" style="left:765.2px;top:333.05px;width:167.4px;height:12.9px;background:#dde9fd"></div>
<div class="a" style="left:474px;top:342.8px;width:634.5px;height:351.6px;background:#fff;border:1px solid #6b93bd;border-top:none"></div>
<div class="a" style="left:474px;top:342.8px;width:634.5px;height:19px;background:#1c4a68"></div>
<svg style="left:479px;top:346.5px" width="11" height="12" viewBox="0 0 11 12"><polygon points="0.5,0.5 10.5,6 0.5,11.5" fill="#fff"/></svg>
<div class="t" style="left:492px;top:348.01px;font-size:8.3px;line-height:10.38px;color:#fff;font-weight:bold;transform-origin:left;">Výkaz provozních událostí</div>
<div class="t" style="left:1040.5px;top:347.23px;font-size:8.6px;line-height:10.75px;color:#f4f4f4;font-weight:bold;transform-origin:left;">19</div>
<div class="a" style="left:1058.5px;top:351.7px;width:7px;height:1.3px;background:#e8eef4"></div>
<div class="a" style="left:1075.5px;top:348.8px;width:7.5px;height:7.3px;border:1.2px solid #e8eef4;border-radius:1px"></div>
<svg style="left:1092.5px;top:348.8px" width="7.5" height="7.5" viewBox="0 0 7.5 7.5"><path d="M0.6 0.6L6.9 6.9M6.9 0.6L0.6 6.9" stroke="#e8eef4" stroke-width="1.6"/></svg>
<div class="t" style="left:481.9px;top:367.6px;font-size:8.0px;line-height:10.0px;color:#404040;transform:scaleX(0.9);transform-origin:left;">Evidenční číslo dokladu</div>
<div class="t" style="left:576.8px;top:367.6px;font-size:8.0px;line-height:10.0px;color:#404040;transform:scaleX(0.9);transform-origin:left;">Období od</div>
<div class="t" style="left:652px;top:367.6px;font-size:8.0px;line-height:10.0px;color:#404040;transform:scaleX(0.9);transform-origin:left;">Období do</div>
<div class="t" style="left:727px;top:367.6px;font-size:8.0px;line-height:10.0px;color:#404040;transform:scaleX(0.9);transform-origin:left;">Identifikace vozidla</div>
<div class="t" style="left:802px;top:367.6px;font-size:8.0px;line-height:10.0px;color:#404040;transform:scaleX(0.9);transform-origin:left;">Název vozidla</div>
<div class="a" style="left:483.3px;top:380.2px;width:87.59999999999997px;height:13.3px;background:#dde9fd"></div>
<div class="a" style="left:578px;top:380.2px;width:67.79999999999995px;height:13.3px;background:#dde9fd"></div>
<div class="a" style="left:652.8px;top:380.2px;width:67.80000000000007px;height:13.3px;background:#dde9fd"></div>
<div class="a" style="left:728px;top:380.2px;width:67.79999999999995px;height:13.3px;background:#dde9fd"></div>
<div class="a" style="left:803px;top:380.2px;width:199.70000000000005px;height:13.3px;background:#dde9fd"></div>
<div class="t" style="left:485px;top:381.75px;font-size:8.4px;line-height:10.5px;color:#222;font-weight:bold;transform-origin:left;">ZPVV-2017-000004</div>
<div class="t" style="left:579.5px;top:382.0px;font-size:8.0px;line-height:10.0px;color:#2a2a2a;transform:scaleX(0.975);transform-origin:left;">8.11.2017 5:17</div>
<div class="t" style="left:654.5px;top:382.0px;font-size:8.0px;line-height:10.0px;color:#2a2a2a;transform:scaleX(0.975);transform-origin:left;">8.11.2017 18:17</div>
<div class="t" style="left:729.5px;top:381.75px;font-size:8.4px;line-height:10.5px;color:#222;font-weight:bold;transform-origin:left;">2B95241</div>
<div class="t" style="left:804.5px;top:382.0px;font-size:8.0px;line-height:10.0px;color:#2a2a2a;transform:scaleX(0.9);transform-origin:left;">Seat Ibiza</div>
<div class="a" style="left:1011.7px;top:379.6px;width:89.0px;height:15.299999999999955px;background:#4d88bd"></div>
<div class="t" style="left:756.2px;width:600px;text-align:center;top:383.25px;font-size:8.0px;line-height:10.0px;color:#eef4fa;transform:scaleX(0.9);transform-origin:center;">Karta zařízení</div>
<div class="a" style="left:482.5px;top:418.4px;width:520px;height:203px;background:#f7faff;border:1px solid #dbe6f3"></div>
<div class="a" style="left:482.5px;top:404.1px;width:36.5px;height:15px;background:#f7faff;border:1px solid #dbe6f3;border-bottom:none;border-radius:2px 2px 0 0"></div>
<div class="t" style="left:487.7px;top:406.0px;font-size:8.0px;line-height:10.0px;color:#505050;transform:scaleX(0.9);transform-origin:left;">Seznam</div>
<div class="t" style="left:521.9px;top:406.3px;font-size:8.0px;line-height:10.0px;color:#303030;transform:scaleX(0.9);transform-origin:left;">Poznámka</div>
<div class="a" style="left:491.3px;top:427.3px;width:502.2px;height:185.1px;background:#f7faff;border:1px solid #dde7f4"></div>
<div class="a" style="left:492px;top:428px;width:489.7px;height:24.5px;background:linear-gradient(#fdfeff,#f0f5fb)"></div>
<div class="a" style="left:522.4px;top:428px;width:0.8px;height:24.5px;background:#e4ecf6"></div>
<div class="a" style="left:571.4px;top:428px;width:0.8px;height:24.5px;background:#e4ecf6"></div>
<div class="a" style="left:626.6px;top:428px;width:0.8px;height:24.5px;background:#e4ecf6"></div>
<div class="a" style="left:671.8px;top:428px;width:0.8px;height:24.5px;background:#e4ecf6"></div>
<div class="a" style="left:728.3px;top:428px;width:0.8px;height:24.5px;background:#e4ecf6"></div>
<div class="a" style="left:775.9px;top:428px;width:0.8px;height:24.5px;background:#e4ecf6"></div>
<div class="a" style="left:820.8px;top:428px;width:0.8px;height:24.5px;background:#e4ecf6"></div>
<div class="a" style="left:849.8px;top:428px;width:0.8px;height:24.5px;background:#e4ecf6"></div>
<div class="a" style="left:875px;top:428px;width:0.8px;height:24.5px;background:#e4ecf6"></div>
<div class="a" style="left:896.6px;top:428px;width:0.8px;height:24.5px;background:#e4ecf6"></div>
<div class="t" style="left:493.8px;top:428.8px;font-size:8.0px;line-height:10.0px;color:#404040;transform:scaleX(0.9);transform-origin:left;">Kód</div>
<div class="t" style="left:493.8px;top:438.0px;font-size:8.0px;line-height:10.0px;color:#404040;transform:scaleX(0.9);transform-origin:left;">události</div>
<div class="t" style="left:524.9px;top:428.8px;font-size:8.0px;line-height:10.0px;color:#404040;transform:scaleX(0.9);transform-origin:left;">Název</div>
<div class="t" style="left:524.9px;top:438.0px;font-size:8.0px;line-height:10.0px;color:#404040;transform:scaleX(0.9);transform-origin:left;">události</div>
<div class="t" style="left:573.9px;top:428.8px;font-size:8.0px;line-height:10.0px;color:#404040;transform:scaleX(0.9);transform-origin:left;">Datum zahájení</div>
<div class="t" style="left:629.1px;top:428.8px;font-size:8.0px;line-height:10.0px;color:#404040;transform:scaleX(0.9);transform-origin:left;">Čas zahájení</div>
<div class="t" style="left:674.3px;top:428.8px;font-size:8.0px;line-height:10.0px;color:#404040;transform:scaleX(0.9);transform-origin:left;">Datum ukončení</div>
<div class="t" style="left:730.8px;top:428.8px;font-size:8.0px;line-height:10.0px;color:#404040;transform:scaleX(0.9);transform-origin:left;">Čas ukončení</div>
<div class="t" style="left:778.4px;top:428.8px;font-size:8.0px;line-height:10.0px;color:#404040;transform:scaleX(0.9);transform-origin:left;">Výkon</div>
<div class="t" style="left:823.3px;top:428.8px;font-size:8.0px;line-height:10.0px;color:#404040;transform:scaleX(0.9);transform-origin:left;">MJ</div>
<div class="t" style="left:823.3px;top:438.0px;font-size:8.0px;line-height:10.0px;color:#404040;transform:scaleX(0.9);transform-origin:left;">výkonu</div>
<div class="t" style="left:852.3px;top:428.8px;font-size:8.0px;line-height:10.0px;color:#404040;transform:scaleX(0.9);transform-origin:left;">Doba</div>
<div class="t" style="left:877.5px;top:428.8px;font-size:8.0px;line-height:10.0px;color:#404040;transform:scaleX(0.9);transform-origin:left;">MJ</div>
<div class="t" style="left:877.5px;top:438.0px;font-size:8.0px;line-height:10.0px;color:#404040;transform:scaleX(0.9);transform-origin:left;">času</div>
<div class="t" style="left:899.1px;top:428.8px;font-size:8.0px;line-height:10.0px;color:#404040;transform:scaleX(0.9);transform-origin:left;">Místo konání</div>
<div class="a" style="left:492.0px;top:452.5px;width:30.399999999999967px;height:12.45px;background:#0d4a6f"></div>
<div class="a" style="left:523.1999999999999px;top:452.5px;width:48.2px;height:12.45px;background:#0d4a6f"></div>
<div class="a" style="left:572.1999999999999px;top:452.5px;width:54.40000000000005px;height:12.45px;background:#0d4a6f"></div>
<div class="a" style="left:627.4px;top:452.5px;width:44.399999999999935px;height:12.45px;background:#0d4a6f"></div>
<div class="a" style="left:672.5999999999999px;top:452.5px;width:55.7px;height:12.45px;background:#0d4a6f"></div>
<div class="a" style="left:729.0999999999999px;top:452.5px;width:46.800000000000026px;height:12.45px;background:#0d4a6f"></div>
<div class="a" style="left:776.6999999999999px;top:452.5px;width:44.09999999999998px;height:12.45px;background:#0d4a6f"></div>
<div class="a" style="left:821.5999999999999px;top:452.5px;width:28.2px;height:12.45px;background:#0d4a6f"></div>
<div class="a" style="left:850.5999999999999px;top:452.5px;width:24.400000000000045px;height:12.45px;background:#0d4a6f"></div>
<div class="a" style="left:875.8px;top:452.5px;width:20.800000000000022px;height:12.45px;background:#0d4a6f"></div>
<div class="a" style="left:897.4px;top:452.5px;width:84.30000000000003px;height:12.45px;background:#0d4a6f"></div>
<div style="position:absolute;left:0;top:0;width:981.7px;height:700px;overflow:hidden">
<div class="t" style="left:493.5px;top:454.0px;font-size:8.0px;line-height:10.0px;color:#f2f5f8;transform:scaleX(0.9);transform-origin:left;">J</div>
<div class="t" style="left:524.6px;top:454.0px;font-size:8.0px;line-height:10.0px;color:#f2f5f8;transform:scaleX(0.9);transform-origin:left;">Jízda služební</div>
<div class="t" style="left:573.6px;top:454.0px;font-size:8.0px;line-height:10.0px;color:#f2f5f8;transform:scaleX(0.975);transform-origin:left;">08.11.2017</div>
<div class="t" style="left:628.8000000000001px;top:454.0px;font-size:8.0px;line-height:10.0px;color:#f2f5f8;transform:scaleX(0.975);transform-origin:left;">05:17</div>
<div class="t" style="left:674.0px;top:454.0px;font-size:8.0px;line-height:10.0px;color:#f2f5f8;transform:scaleX(0.975);transform-origin:left;">08.11.2017</div>
<div class="t" style="left:730.5px;top:454.0px;font-size:8.0px;line-height:10.0px;color:#f2f5f8;transform:scaleX(0.975);transform-origin:left;">08:00</div>
<div class="t" style="right:162.7px;top:454.0px;font-size:8.0px;line-height:10.0px;color:#f2f5f8;transform:scaleX(0.975);transform-origin:right;">257,00</div>
<div class="t" style="left:823.0px;top:454.0px;font-size:8.0px;line-height:10.0px;color:#f2f5f8;transform:scaleX(0.9);transform-origin:left;">km</div>
<div class="t" style="right:108.5px;top:454.0px;font-size:8.0px;line-height:10.0px;color:#f2f5f8;transform:scaleX(0.975);transform-origin:right;">2,71</div>
<div class="t" style="left:877.2px;top:454.0px;font-size:8.0px;line-height:10.0px;color:#f2f5f8;transform:scaleX(0.9);transform-origin:left;">hod</div>
<div class="t" style="left:898.8000000000001px;top:454.0px;font-size:8.0px;line-height:10.0px;color:#f2f5f8;transform:scaleX(0.9);transform-origin:left;">Jalubí » Petříkov,00320</div>
</div>
<div class="a" style="left:492.0px;top:464.99px;width:30.399999999999967px;height:12.45px;background:#f4f8fc"></div>
<div class="a" style="left:523.1999999999999px;top:464.99px;width:48.2px;height:12.45px;background:#b9f983"></div>
<div class="a" style="left:572.1999999999999px;top:464.99px;width:54.40000000000005px;height:12.45px;background:#b9f983"></div>
<div class="a" style="left:627.4px;top:464.99px;width:44.399999999999935px;height:12.45px;background:#b9f983"></div>
<div class="a" style="left:672.5999999999999px;top:464.99px;width:55.7px;height:12.45px;background:#b9f983"></div>
<div class="a" style="left:729.0999999999999px;top:464.99px;width:46.800000000000026px;height:12.45px;background:#b9f983"></div>
<div class="a" style="left:776.6999999999999px;top:464.99px;width:44.09999999999998px;height:12.45px;background:#b9f983"></div>
<div class="a" style="left:821.5999999999999px;top:464.99px;width:28.2px;height:12.45px;background:#cfe0fb"></div>
<div class="a" style="left:850.5999999999999px;top:464.99px;width:24.400000000000045px;height:12.45px;background:#cfe0fb"></div>
<div class="a" style="left:875.8px;top:464.99px;width:20.800000000000022px;height:12.45px;background:#cfe0fb"></div>
<div class="a" style="left:897.4px;top:464.99px;width:84.30000000000003px;height:12.45px;background:#b9f983"></div>
<div style="position:absolute;left:0;top:0;width:981.7px;height:700px;overflow:hidden">
<div class="t" style="left:493.5px;top:466.49px;font-size:8.0px;line-height:10.0px;color:#2a2a2a;transform:scaleX(0.9);transform-origin:left;">ST</div>
<div class="t" style="left:524.6px;top:466.49px;font-size:8.0px;line-height:10.0px;color:#2a2a2a;transform:scaleX(0.9);transform-origin:left;">Stání</div>
<div class="t" style="left:573.6px;top:466.49px;font-size:8.0px;line-height:10.0px;color:#2a2a2a;transform:scaleX(0.975);transform-origin:left;">08.11.2017</div>
<div class="t" style="left:628.8000000000001px;top:466.49px;font-size:8.0px;line-height:10.0px;color:#2a2a2a;transform:scaleX(0.975);transform-origin:left;">08:00</div>
<div class="t" style="left:674.0px;top:466.49px;font-size:8.0px;line-height:10.0px;color:#2a2a2a;transform:scaleX(0.975);transform-origin:left;">08.11.2017</div>
<div class="t" style="left:730.5px;top:466.49px;font-size:8.0px;line-height:10.0px;color:#2a2a2a;transform:scaleX(0.975);transform-origin:left;">08:11</div>
<div class="t" style="right:162.7px;top:466.49px;font-size:8.0px;line-height:10.0px;color:#2a2a2a;transform:scaleX(0.975);transform-origin:right;">0,19</div>
<div class="t" style="left:823.0px;top:466.49px;font-size:8.0px;line-height:10.0px;color:#2a2a2a;transform:scaleX(0.9);transform-origin:left;">hod</div>
<div class="t" style="left:898.8000000000001px;top:466.49px;font-size:8.0px;line-height:10.0px;color:#2a2a2a;transform:scaleX(0.9);transform-origin:left;">Petříkov,00320</div>
</div>
<div class="a" style="left:492.0px;top:477.48px;width:30.399999999999967px;height:12.45px;background:#ffffff"></div>
<div class="a" style="left:523.1999999999999px;top:477.48px;width:48.2px;height:12.45px;background:#dafcb9"></div>
<div class="a" style="left:572.1999999999999px;top:477.48px;width:54.40000000000005px;height:12.45px;background:#dafcb9"></div>
<div class="a" style="left:627.4px;top:477.48px;width:44.399999999999935px;height:12.45px;background:#dafcb9"></div>
<div class="a" style="left:672.5999999999999px;top:477.48px;width:55.7px;height:12.45px;background:#dafcb9"></div>
<div class="a" style="left:729.0999999999999px;top:477.48px;width:46.800000000000026px;height:12.45px;background:#dafcb9"></div>
<div class="a" style="left:776.6999999999999px;top:477.48px;width:44.09999999999998px;height:12.45px;background:#dafcb9"></div>
<div class="a" style="left:821.5999999999999px;top:477.48px;width:28.2px;height:12.45px;background:#e1edfd"></div>
<div class="a" style="left:850.5999999999999px;top:477.48px;width:24.400000000000045px;height:12.45px;background:#ffffff"></div>
<div class="a" style="left:875.8px;top:477.48px;width:20.800000000000022px;height:12.45px;background:#e1edfd"></div>
<div class="a" style="left:897.4px;top:477.48px;width:84.30000000000003px;height:12.45px;background:#dafcb9"></div>
<div style="position:absolute;left:0;top:0;width:981.7px;height:700px;overflow:hidden">
<div class="t" style="left:493.5px;top:478.98px;font-size:8.0px;line-height:10.0px;color:#2a2a2a;transform:scaleX(0.9);transform-origin:left;">J</div>
<div class="t" style="left:524.6px;top:478.98px;font-size:8.0px;line-height:10.0px;color:#2a2a2a;transform:scaleX(0.9);transform-origin:left;">Jízda služební</div>
<div class="t" style="left:573.6px;top:478.98px;font-size:8.0px;line-height:10.0px;color:#2a2a2a;transform:scaleX(0.975);transform-origin:left;">08.11.2017</div>
<div class="t" style="left:628.8000000000001px;top:478.98px;font-size:8.0px;line-height:10.0px;color:#2a2a2a;transform:scaleX(0.975);transform-origin:left;">08:11</div>
<div class="t" style="left:674.0px;top:478.98px;font-size:8.0px;line-height:10.0px;color:#2a2a2a;transform:scaleX(0.975);transform-origin:left;">08.11.2017</div>
<div class="t" style="left:730.5px;top:478.98px;font-size:8.0px;line-height:10.0px;color:#2a2a2a;transform:scaleX(0.975);transform-origin:left;">09:07</div>
<div class="t" style="right:162.7px;top:478.98px;font-size:8.0px;line-height:10.0px;color:#2a2a2a;transform:scaleX(0.975);transform-origin:right;">34,00</div>
<div class="t" style="left:823.0px;top:478.98px;font-size:8.0px;line-height:10.0px;color:#2a2a2a;transform:scaleX(0.9);transform-origin:left;">km</div>
<div class="t" style="right:108.5px;top:478.98px;font-size:8.0px;line-height:10.0px;color:#2a2a2a;transform:scaleX(0.975);transform-origin:right;">0,93</div>
<div class="t" style="left:877.2px;top:478.98px;font-size:8.0px;line-height:10.0px;color:#2a2a2a;transform:scaleX(0.9);transform-origin:left;">hod</div>
<div class="t" style="left:898.8000000000001px;top:478.98px;font-size:8.0px;line-height:10.0px;color:#2a2a2a;transform:scaleX(0.9);transform-origin:left;">Petříkov,00320 » Libeň,Bulovka</div>
</div>
<div class="a" style="left:492.0px;top:489.97px;width:30.399999999999967px;height:12.45px;background:#f4f8fc"></div>
<div class="a" style="left:523.1999999999999px;top:489.97px;width:48.2px;height:12.45px;background:#b9f983"></div>
<div class="a" style="left:572.1999999999999px;top:489.97px;width:54.40000000000005px;height:12.45px;background:#b9f983"></div>
<div class="a" style="left:627.4px;top:489.97px;width:44.399999999999935px;height:12.45px;background:#b9f983"></div>
<div class="a" style="left:672.5999999999999px;top:489.97px;width:55.7px;height:12.45px;background:#b9f983"></div>
<div class="a" style="left:729.0999999999999px;top:489.97px;width:46.800000000000026px;height:12.45px;background:#b9f983"></div>
<div class="a" style="left:776.6999999999999px;top:489.97px;width:44.09999999999998px;height:12.45px;background:#b9f983"></div>
<div class="a" style="left:821.5999999999999px;top:489.97px;width:28.2px;height:12.45px;background:#cfe0fb"></div>
<div class="a" style="left:850.5999999999999px;top:489.97px;width:24.400000000000045px;height:12.45px;background:#cfe0fb"></div>
<div class="a" style="left:875.8px;top:489.97px;width:20.800000000000022px;height:12.45px;background:#cfe0fb"></div>
<div class="a" style="left:897.4px;top:489.97px;width:84.30000000000003px;height:12.45px;background:#b9f983"></div>
<div style="position:absolute;left:0;top:0;width:981.7px;height:700px;overflow:hidden">
<div class="t" style="left:493.5px;top:491.47px;font-size:8.0px;line-height:10.0px;color:#2a2a2a;transform:scaleX(0.9);transform-origin:left;">ST</div>
<div class="t" style="left:524.6px;top:491.47px;font-size:8.0px;line-height:10.0px;color:#2a2a2a;transform:scaleX(0.9);transform-origin:left;">Stání</div>
<div class="t" style="left:573.6px;top:491.47px;font-size:8.0px;line-height:10.0px;color:#2a2a2a;transform:scaleX(0.975);transform-origin:left;">08.11.2017</div>
<div class="t" style="left:628.8000000000001px;top:491.47px;font-size:8.0px;line-height:10.0px;color:#2a2a2a;transform:scaleX(0.975);transform-origin:left;">09:07</div>
<div class="t" style="left:674.0px;top:491.47px;font-size:8.0px;line-height:10.0px;color:#2a2a2a;transform:scaleX(0.975);transform-origin:left;">08.11.2017</div>
<div class="t" style="left:730.5px;top:491.47px;font-size:8.0px;line-height:10.0px;color:#2a2a2a;transform:scaleX(0.975);transform-origin:left;">09:17</div>
<div class="t" style="right:162.7px;top:491.47px;font-size:8.0px;line-height:10.0px;color:#2a2a2a;transform:scaleX(0.975);transform-origin:right;">0,17</div>
<div class="t" style="left:823.0px;top:491.47px;font-size:8.0px;line-height:10.0px;color:#2a2a2a;transform:scaleX(0.9);transform-origin:left;">hod</div>
<div class="t" style="left:898.8000000000001px;top:491.47px;font-size:8.0px;line-height:10.0px;color:#2a2a2a;transform:scaleX(0.9);transform-origin:left;">Libeň,Bulovka</div>
</div>
<div class="a" style="left:492.0px;top:502.46px;width:30.399999999999967px;height:12.45px;background:#ffffff"></div>
<div class="a" style="left:523.1999999999999px;top:502.46px;width:48.2px;height:12.45px;background:#dafcb9"></div>
<div class="a" style="left:572.1999999999999px;top:502.46px;width:54.40000000000005px;height:12.45px;background:#dafcb9"></div>
<div class="a" style="left:627.4px;top:502.46px;width:44.399999999999935px;height:12.45px;background:#dafcb9"></div>
<div class="a" style="left:672.5999999999999px;top:502.46px;width:55.7px;height:12.45px;background:#dafcb9"></div>
<div class="a" style="left:729.0999999999999px;top:502.46px;width:46.800000000000026px;height:12.45px;background:#dafcb9"></div>
<div class="a" style="left:776.6999999999999px;top:502.46px;width:44.09999999999998px;height:12.45px;background:#dafcb9"></div>
<div class="a" style="left:821.5999999999999px;top:502.46px;width:28.2px;height:12.45px;background:#e1edfd"></div>
<div class="a" style="left:850.5999999999999px;top:502.46px;width:24.400000000000045px;height:12.45px;background:#ffffff"></div>
<div class="a" style="left:875.8px;top:502.46px;width:20.800000000000022px;height:12.45px;background:#e1edfd"></div>
<div class="a" style="left:897.4px;top:502.46px;width:84.30000000000003px;height:12.45px;background:#dafcb9"></div>
<div style="position:absolute;left:0;top:0;width:981.7px;height:700px;overflow:hidden">
<div class="t" style="left:493.5px;top:503.96px;font-size:8.0px;line-height:10.0px;color:#2a2a2a;transform:scaleX(0.9);transform-origin:left;">J</div>
<div class="t" style="left:524.6px;top:503.96px;font-size:8.0px;line-height:10.0px;color:#2a2a2a;transform:scaleX(0.9);transform-origin:left;">Jízda služební</div>
<div class="t" style="left:573.6px;top:503.96px;font-size:8.0px;line-height:10.0px;color:#2a2a2a;transform:scaleX(0.975);transform-origin:left;">08.11.2017</div>
<div class="t" style="left:628.8000000000001px;top:503.96px;font-size:8.0px;line-height:10.0px;color:#2a2a2a;transform:scaleX(0.975);transform-origin:left;">09:17</div>
<div class="t" style="left:674.0px;top:503.96px;font-size:8.0px;line-height:10.0px;color:#2a2a2a;transform:scaleX(0.975);transform-origin:left;">08.11.2017</div>
<div class="t" style="left:730.5px;top:503.96px;font-size:8.0px;line-height:10.0px;color:#2a2a2a;transform:scaleX(0.975);transform-origin:left;">09:20</div>
<div class="t" style="right:162.7px;top:503.96px;font-size:8.0px;line-height:10.0px;color:#2a2a2a;transform:scaleX(0.975);transform-origin:right;">0,00</div>
<div class="t" style="left:823.0px;top:503.96px;font-size:8.0px;line-height:10.0px;color:#2a2a2a;transform:scaleX(0.9);transform-origin:left;">km</div>
<div class="t" style="right:108.5px;top:503.96px;font-size:8.0px;line-height:10.0px;color:#2a2a2a;transform:scaleX(0.975);transform-origin:right;">0,05</div>
<div class="t" style="left:877.2px;top:503.96px;font-size:8.0px;line-height:10.0px;color:#2a2a2a;transform:scaleX(0.9);transform-origin:left;">hod</div>
<div class="t" style="left:898.8000000000001px;top:503.96px;font-size:8.0px;line-height:10.0px;color:#2a2a2a;transform:scaleX(0.9);transform-origin:left;">Libeň,Bulovka » Libeň,Bulovka</div>
</div>
<div class="a" style="left:492.0px;top:514.95px;width:30.399999999999967px;height:12.45px;background:#f4f8fc"></div>
<div class="a" style="left:523.1999999999999px;top:514.95px;width:48.2px;height:12.45px;background:#b9f983"></div>
<div class="a" style="left:572.1999999999999px;top:514.95px;width:54.40000000000005px;height:12.45px;background:#b9f983"></div>
<div class="a" style="left:627.4px;top:514.95px;width:44.399999999999935px;height:12.45px;background:#b9f983"></div>
<div class="a" style="left:672.5999999999999px;top:514.95px;width:55.7px;height:12.45px;background:#b9f983"></div>
<div class="a" style="left:729.0999999999999px;top:514.95px;width:46.800000000000026px;height:12.45px;background:#b9f983"></div>
<div class="a" style="left:776.6999999999999px;top:514.95px;width:44.09999999999998px;height:12.45px;background:#b9f983"></div>
<div class="a" style="left:821.5999999999999px;top:514.95px;width:28.2px;height:12.45px;background:#cfe0fb"></div>
<div class="a" style="left:850.5999999999999px;top:514.95px;width:24.400000000000045px;height:12.45px;background:#cfe0fb"></div>
<div class="a" style="left:875.8px;top:514.95px;width:20.800000000000022px;height:12.45px;background:#cfe0fb"></div>
<div class="a" style="left:897.4px;top:514.95px;width:84.30000000000003px;height:12.45px;background:#b9f983"></div>
<div style="position:absolute;left:0;top:0;width:981.7px;height:700px;overflow:hidden">
<div class="t" style="left:493.5px;top:516.45px;font-size:8.0px;line-height:10.0px;color:#2a2a2a;transform:scaleX(0.9);transform-origin:left;">ST</div>
<div class="t" style="left:524.6px;top:516.45px;font-size:8.0px;line-height:10.0px;color:#2a2a2a;transform:scaleX(0.9);transform-origin:left;">Stání</div>
<div class="t" style="left:573.6px;top:516.45px;font-size:8.0px;line-height:10.0px;color:#2a2a2a;transform:scaleX(0.975);transform-origin:left;">08.11.2017</div>
<div class="t" style="left:628.8000000000001px;top:516.45px;font-size:8.0px;line-height:10.0px;color:#2a2a2a;transform:scaleX(0.975);transform-origin:left;">09:20</div>
<div class="t" style="left:674.0px;top:516.45px;font-size:8.0px;line-height:10.0px;color:#2a2a2a;transform:scaleX(0.975);transform-origin:left;">08.11.2017</div>
<div class="t" style="left:730.5px;top:516.45px;font-size:8.0px;line-height:10.0px;color:#2a2a2a;transform:scaleX(0.975);transform-origin:left;">10:32</div>
<div class="t" style="right:162.7px;top:516.45px;font-size:8.0px;line-height:10.0px;color:#2a2a2a;transform:scaleX(0.975);transform-origin:right;">1,19</div>
<div class="t" style="left:823.0px;top:516.45px;font-size:8.0px;line-height:10.0px;color:#2a2a2a;transform:scaleX(0.9);transform-origin:left;">hod</div>
<div class="t" style="left:898.8000000000001px;top:516.45px;font-size:8.0px;line-height:10.0px;color:#2a2a2a;transform:scaleX(0.9);transform-origin:left;">Libeň,Bulovka</div>
</div>
<div class="a" style="left:492.0px;top:527.44px;width:30.399999999999967px;height:12.45px;background:#ffffff"></div>
<div class="a" style="left:523.1999999999999px;top:527.44px;width:48.2px;height:12.45px;background:#dafcb9"></div>
<div class="a" style="left:572.1999999999999px;top:527.44px;width:54.40000000000005px;height:12.45px;background:#dafcb9"></div>
<div class="a" style="left:627.4px;top:527.44px;width:44.399999999999935px;height:12.45px;background:#dafcb9"></div>
<div class="a" style="left:672.5999999999999px;top:527.44px;width:55.7px;height:12.45px;background:#dafcb9"></div>
<div class="a" style="left:729.0999999999999px;top:527.44px;width:46.800000000000026px;height:12.45px;background:#dafcb9"></div>
<div class="a" style="left:776.6999999999999px;top:527.44px;width:44.09999999999998px;height:12.45px;background:#dafcb9"></div>
<div class="a" style="left:821.5999999999999px;top:527.44px;width:28.2px;height:12.45px;background:#e1edfd"></div>
<div class="a" style="left:850.5999999999999px;top:527.44px;width:24.400000000000045px;height:12.45px;background:#ffffff"></div>
<div class="a" style="left:875.8px;top:527.44px;width:20.800000000000022px;height:12.45px;background:#e1edfd"></div>
<div class="a" style="left:897.4px;top:527.44px;width:84.30000000000003px;height:12.45px;background:#dafcb9"></div>
<div style="position:absolute;left:0;top:0;width:981.7px;height:700px;overflow:hidden">
<div class="t" style="left:493.5px;top:528.94px;font-size:8.0px;line-height:10.0px;color:#2a2a2a;transform:scaleX(0.9);transform-origin:left;">J</div>
<div class="t" style="left:524.6px;top:528.94px;font-size:8.0px;line-height:10.0px;color:#2a2a2a;transform:scaleX(0.9);transform-origin:left;">Jízda služební</div>
<div class="t" style="left:573.6px;top:528.94px;font-size:8.0px;line-height:10.0px;color:#2a2a2a;transform:scaleX(0.975);transform-origin:left;">08.11.2017</div>
<div class="t" style="left:628.8000000000001px;top:528.94px;font-size:8.0px;line-height:10.0px;color:#2a2a2a;transform:scaleX(0.975);transform-origin:left;">10:32</div>
<div class="t" style="left:674.0px;top:528.94px;font-size:8.0px;line-height:10.0px;color:#2a2a2a;transform:scaleX(0.975);transform-origin:left;">08.11.2017</div>
<div class="t" style="left:730.5px;top:528.94px;font-size:8.0px;line-height:10.0px;color:#2a2a2a;transform:scaleX(0.975);transform-origin:left;">10:32</div>
<div class="t" style="right:162.7px;top:528.94px;font-size:8.0px;line-height:10.0px;color:#2a2a2a;transform:scaleX(0.975);transform-origin:right;">0,00</div>
<div class="t" style="left:823.0px;top:528.94px;font-size:8.0px;line-height:10.0px;color:#2a2a2a;transform:scaleX(0.9);transform-origin:left;">km</div>
<div class="t" style="right:108.5px;top:528.94px;font-size:8.0px;line-height:10.0px;color:#2a2a2a;transform:scaleX(0.975);transform-origin:right;">0,00</div>
<div class="t" style="left:877.2px;top:528.94px;font-size:8.0px;line-height:10.0px;color:#2a2a2a;transform:scaleX(0.9);transform-origin:left;">hod</div>
<div class="t" style="left:898.8000000000001px;top:528.94px;font-size:8.0px;line-height:10.0px;color:#2a2a2a;transform:scaleX(0.9);transform-origin:left;">Libeň,Bulovka » Libeň,Bulovka</div>
</div>
<div class="a" style="left:492.0px;top:539.9300000000001px;width:30.399999999999967px;height:12.45px;background:#f4f8fc"></div>
<div class="a" style="left:523.1999999999999px;top:539.9300000000001px;width:48.2px;height:12.45px;background:#b9f983"></div>
<div class="a" style="left:572.1999999999999px;top:539.9300000000001px;width:54.40000000000005px;height:12.45px;background:#b9f983"></div>
<div class="a" style="left:627.4px;top:539.9300000000001px;width:44.399999999999935px;height:12.45px;background:#b9f983"></div>
<div class="a" style="left:672.5999999999999px;top:539.9300000000001px;width:55.7px;height:12.45px;background:#b9f983"></div>
<div class="a" style="left:729.0999999999999px;top:539.9300000000001px;width:46.800000000000026px;height:12.45px;background:#b9f983"></div>
<div class="a" style="left:776.6999999999999px;top:539.9300000000001px;width:44.09999999999998px;height:12.45px;background:#b9f983"></div>
<div class="a" style="left:821.5999999999999px;top:539.9300000000001px;width:28.2px;height:12.45px;background:#cfe0fb"></div>
<div class="a" style="left:850.5999999999999px;top:539.9300000000001px;width:24.400000000000045px;height:12.45px;background:#cfe0fb"></div>
<div class="a" style="left:875.8px;top:539.9300000000001px;width:20.800000000000022px;height:12.45px;background:#cfe0fb"></div>
<div class="a" style="left:897.4px;top:539.9300000000001px;width:84.30000000000003px;height:12.45px;background:#b9f983"></div>
<div style="position:absolute;left:0;top:0;width:981.7px;height:700px;overflow:hidden">
<div class="t" style="left:493.5px;top:541.43px;font-size:8.0px;line-height:10.0px;color:#2a2a2a;transform:scaleX(0.9);transform-origin:left;">ST</div>
<div class="t" style="left:524.6px;top:541.43px;font-size:8.0px;line-height:10.0px;color:#2a2a2a;transform:scaleX(0.9);transform-origin:left;">Stání</div>
<div class="t" style="left:573.6px;top:541.43px;font-size:8.0px;line-height:10.0px;color:#2a2a2a;transform:scaleX(0.975);transform-origin:left;">08.11.2017</div>
<div class="t" style="left:628.8000000000001px;top:541.43px;font-size:8.0px;line-height:10.0px;color:#2a2a2a;transform:scaleX(0.975);transform-origin:left;">10:32</div>
<div class="t" style="left:674.0px;top:541.43px;font-size:8.0px;line-height:10.0px;color:#2a2a2a;transform:scaleX(0.975);transform-origin:left;">08.11.2017</div>
<div class="t" style="left:730.5px;top:541.43px;font-size:8.0px;line-height:10.0px;color:#2a2a2a;transform:scaleX(0.975);transform-origin:left;">11:40</div>
<div class="t" style="right:162.7px;top:541.43px;font-size:8.0px;line-height:10.0px;color:#2a2a2a;transform:scaleX(0.975);transform-origin:right;">1,13</div>
<div class="t" style="left:823.0px;top:541.43px;font-size:8.0px;line-height:10.0px;color:#2a2a2a;transform:scaleX(0.9);transform-origin:left;">hod</div>
<div class="t" style="left:898.8000000000001px;top:541.43px;font-size:8.0px;line-height:10.0px;color:#2a2a2a;transform:scaleX(0.9);transform-origin:left;">Libeň,Bulovka</div>
</div>
<div class="a" style="left:492.0px;top:552.42px;width:30.399999999999967px;height:12.45px;background:#ffffff"></div>
<div class="a" style="left:523.1999999999999px;top:552.42px;width:48.2px;height:12.45px;background:#dafcb9"></div>
<div class="a" style="left:572.1999999999999px;top:552.42px;width:54.40000000000005px;height:12.45px;background:#dafcb9"></div>
<div class="a" style="left:627.4px;top:552.42px;width:44.399999999999935px;height:12.45px;background:#dafcb9"></div>
<div class="a" style="left:672.5999999999999px;top:552.42px;width:55.7px;height:12.45px;background:#dafcb9"></div>
<div class="a" style="left:729.0999999999999px;top:552.42px;width:46.800000000000026px;height:12.45px;background:#dafcb9"></div>
<div class="a" style="left:776.6999999999999px;top:552.42px;width:44.09999999999998px;height:12.45px;background:#dafcb9"></div>
<div class="a" style="left:821.5999999999999px;top:552.42px;width:28.2px;height:12.45px;background:#e1edfd"></div>
<div class="a" style="left:850.5999999999999px;top:552.42px;width:24.400000000000045px;height:12.45px;background:#ffffff"></div>
<div class="a" style="left:875.8px;top:552.42px;width:20.800000000000022px;height:12.45px;background:#e1edfd"></div>
<div class="a" style="left:897.4px;top:552.42px;width:84.30000000000003px;height:12.45px;background:#dafcb9"></div>
<div style="position:absolute;left:0;top:0;width:981.7px;height:700px;overflow:hidden">
<div class="t" style="left:493.5px;top:553.92px;font-size:8.0px;line-height:10.0px;color:#2a2a2a;transform:scaleX(0.9);transform-origin:left;">J</div>
<div class="t" style="left:524.6px;top:553.92px;font-size:8.0px;line-height:10.0px;color:#2a2a2a;transform:scaleX(0.9);transform-origin:left;">Jízda služební</div>
<div class="t" style="left:573.6px;top:553.92px;font-size:8.0px;line-height:10.0px;color:#2a2a2a;transform:scaleX(0.975);transform-origin:left;">08.11.2017</div>
<div class="t" style="left:628.8000000000001px;top:553.92px;font-size:8.0px;line-height:10.0px;color:#2a2a2a;transform:scaleX(0.975);transform-origin:left;">11:40</div>
<div class="t" style="left:674.0px;top:553.92px;font-size:8.0px;line-height:10.0px;color:#2a2a2a;transform:scaleX(0.975);transform-origin:left;">08.11.2017</div>
<div class="t" style="left:730.5px;top:553.92px;font-size:8.0px;line-height:10.0px;color:#2a2a2a;transform:scaleX(0.975);transform-origin:left;">11:41</div>
<div class="t" style="right:162.7px;top:553.92px;font-size:8.0px;line-height:10.0px;color:#2a2a2a;transform:scaleX(0.975);transform-origin:right;">0,00</div>
<div class="t" style="left:823.0px;top:553.92px;font-size:8.0px;line-height:10.0px;color:#2a2a2a;transform:scaleX(0.9);transform-origin:left;">km</div>
<div class="t" style="right:108.5px;top:553.92px;font-size:8.0px;line-height:10.0px;color:#2a2a2a;transform:scaleX(0.975);transform-origin:right;">0,02</div>
<div class="t" style="left:877.2px;top:553.92px;font-size:8.0px;line-height:10.0px;color:#2a2a2a;transform:scaleX(0.9);transform-origin:left;">hod</div>
<div class="t" style="left:898.8000000000001px;top:553.92px;font-size:8.0px;line-height:10.0px;color:#2a2a2a;transform:scaleX(0.9);transform-origin:left;">Libeň,Bulovka » Libeň,Bulovka</div>
</div>
<div class="a" style="left:492.0px;top:564.91px;width:30.399999999999967px;height:12.45px;background:#f4f8fc"></div>
<div class="a" style="left:523.1999999999999px;top:564.91px;width:48.2px;height:12.45px;background:#b9f983"></div>
<div class="a" style="left:572.1999999999999px;top:564.91px;width:54.40000000000005px;height:12.45px;background:#b9f983"></div>
<div class="a" style="left:627.4px;top:564.91px;width:44.399999999999935px;height:12.45px;background:#b9f983"></div>
<div class="a" style="left:672.5999999999999px;top:564.91px;width:55.7px;height:12.45px;background:#b9f983"></div>
<div class="a" style="left:729.0999999999999px;top:564.91px;width:46.800000000000026px;height:12.45px;background:#b9f983"></div>
<div class="a" style="left:776.6999999999999px;top:564.91px;width:44.09999999999998px;height:12.45px;background:#b9f983"></div>
<div class="a" style="left:821.5999999999999px;top:564.91px;width:28.2px;height:12.45px;background:#cfe0fb"></div>
<div class="a" style="left:850.5999999999999px;top:564.91px;width:24.400000000000045px;height:12.45px;background:#cfe0fb"></div>
<div class="a" style="left:875.8px;top:564.91px;width:20.800000000000022px;height:12.45px;background:#cfe0fb"></div>
<div class="a" style="left:897.4px;top:564.91px;width:84.30000000000003px;height:12.45px;background:#b9f983"></div>
<div style="position:absolute;left:0;top:0;width:981.7px;height:700px;overflow:hidden">
<div class="t" style="left:493.5px;top:566.41px;font-size:8.0px;line-height:10.0px;color:#2a2a2a;transform:scaleX(0.9);transform-origin:left;">ST</div>
<div class="t" style="left:524.6px;top:566.41px;font-size:8.0px;line-height:10.0px;color:#2a2a2a;transform:scaleX(0.9);transform-origin:left;">Stání</div>
<div class="t" style="left:573.6px;top:566.41px;font-size:8.0px;line-height:10.0px;color:#2a2a2a;transform:scaleX(0.975);transform-origin:left;">08.11.2017</div>
<div class="t" style="left:628.8000000000001px;top:566.41px;font-size:8.0px;line-height:10.0px;color:#2a2a2a;transform:scaleX(0.975);transform-origin:left;">11:41</div>
<div class="t" style="left:674.0px;top:566.41px;font-size:8.0px;line-height:10.0px;color:#2a2a2a;transform:scaleX(0.975);transform-origin:left;">08.11.2017</div>
<div class="t" style="left:730.5px;top:566.41px;font-size:8.0px;line-height:10.0px;color:#2a2a2a;transform:scaleX(0.975);transform-origin:left;">12:56</div>
<div class="t" style="right:162.7px;top:566.41px;font-size:8.0px;line-height:10.0px;color:#2a2a2a;transform:scaleX(0.975);transform-origin:right;">1,25</div>
<div class="t" style="left:823.0px;top:566.41px;font-size:8.0px;line-height:10.0px;color:#2a2a2a;transform:scaleX(0.9);transform-origin:left;">hod</div>
<div class="t" style="left:898.8000000000001px;top:566.41px;font-size:8.0px;line-height:10.0px;color:#2a2a2a;transform:scaleX(0.9);transform-origin:left;">Libeň,Bulovka</div>
</div>
<div class="a" style="left:492.0px;top:577.4px;width:30.399999999999967px;height:12.45px;background:#ffffff"></div>
<div class="a" style="left:523.1999999999999px;top:577.4px;width:48.2px;height:12.45px;background:#dafcb9"></div>
<div class="a" style="left:572.1999999999999px;top:577.4px;width:54.40000000000005px;height:12.45px;background:#dafcb9"></div>
<div class="a" style="left:627.4px;top:577.4px;width:44.399999999999935px;height:12.45px;background:#dafcb9"></div>
<div class="a" style="left:672.5999999999999px;top:577.4px;width:55.7px;height:12.45px;background:#dafcb9"></div>
<div class="a" style="left:729.0999999999999px;top:577.4px;width:46.800000000000026px;height:12.45px;background:#dafcb9"></div>
<div class="a" style="left:776.6999999999999px;top:577.4px;width:44.09999999999998px;height:12.45px;background:#dafcb9"></div>
<div class="a" style="left:821.5999999999999px;top:577.4px;width:28.2px;height:12.45px;background:#e1edfd"></div>
<div class="a" style="left:850.5999999999999px;top:577.4px;width:24.400000000000045px;height:12.45px;background:#ffffff"></div>
<div class="a" style="left:875.8px;top:577.4px;width:20.800000000000022px;height:12.45px;background:#e1edfd"></div>
<div class="a" style="left:897.4px;top:577.4px;width:84.30000000000003px;height:12.45px;background:#dafcb9"></div>
<div style="position:absolute;left:0;top:0;width:981.7px;height:700px;overflow:hidden">
<div class="t" style="left:493.5px;top:578.9px;font-size:8.0px;line-height:10.0px;color:#2a2a2a;transform:scaleX(0.9);transform-origin:left;">J</div>
<div class="t" style="left:524.6px;top:578.9px;font-size:8.0px;line-height:10.0px;color:#2a2a2a;transform:scaleX(0.9);transform-origin:left;">Jízda služební</div>
<div class="t" style="left:573.6px;top:578.9px;font-size:8.0px;line-height:10.0px;color:#2a2a2a;transform:scaleX(0.975);transform-origin:left;">08.11.2017</div>
<div class="t" style="left:628.8000000000001px;top:578.9px;font-size:8.0px;line-height:10.0px;color:#2a2a2a;transform:scaleX(0.975);transform-origin:left;">12:56</div>
<div class="t" style="left:674.0px;top:578.9px;font-size:8.0px;line-height:10.0px;color:#2a2a2a;transform:scaleX(0.975);transform-origin:left;">08.11.2017</div>
<div class="t" style="left:730.5px;top:578.9px;font-size:8.0px;line-height:10.0px;color:#2a2a2a;transform:scaleX(0.975);transform-origin:left;">14:08</div>
<div class="t" style="right:162.7px;top:578.9px;font-size:8.0px;line-height:10.0px;color:#2a2a2a;transform:scaleX(0.975);transform-origin:right;">100,00</div>
<div class="t" style="left:823.0px;top:578.9px;font-size:8.0px;line-height:10.0px;color:#2a2a2a;transform:scaleX(0.9);transform-origin:left;">km</div>
<div class="t" style="right:108.5px;top:578.9px;font-size:8.0px;line-height:10.0px;color:#2a2a2a;transform:scaleX(0.975);transform-origin:right;">1,19</div>
<div class="t" style="left:877.2px;top:578.9px;font-size:8.0px;line-height:10.0px;color:#2a2a2a;transform:scaleX(0.9);transform-origin:left;">hod</div>
<div class="t" style="left:898.8000000000001px;top:578.9px;font-size:8.0px;line-height:10.0px;color:#2a2a2a;transform:scaleX(0.9);transform-origin:left;">Libeň,Bulovka » Liberec,Česko</div>
</div>
<div class="a" style="left:492px;top:452.3px;width:30.4px;height:12.45px;border:1px solid #d0283a"></div>
<div class="a" style="left:981.7px;top:428px;width:11.8px;height:184px;background:#f7faff"></div>
<div class="a" style="left:981.7px;top:439px;width:11.8px;height:150px;background:#eef3f9"></div>
<div class="a" style="left:981.7px;top:439px;width:11.8px;height:57px;background:#d6e4f0"></div>
<svg style="left:984.5px;top:431px" width="7" height="5"><path d="M0.8 4 L3.5 1.2 L6.2 4" fill="none" stroke="#222" stroke-width="1.4"/></svg>
<svg style="left:984.5px;top:592.5px" width="7" height="5"><path d="M0.8 1 L3.5 3.8 L6.2 1" fill="none" stroke="#222" stroke-width="1.4"/></svg>
<div class="a" style="left:492px;top:600.6px;width:489.7px;height:10.8px;background:#eef3f9"></div>
<div class="a" style="left:503px;top:600.6px;width:11px;height:10.8px;background:#d6e4f0"></div>
<svg style="left:494.5px;top:602.5px" width="5" height="7"><path d="M4 0.8 L1.2 3.5 L4 6.2" fill="none" stroke="#222" stroke-width="1.4"/></svg>
<svg style="left:973.5px;top:602.5px" width="5" height="7"><path d="M1 0.8 L3.8 3.5 L1 6.2" fill="none" stroke="#222" stroke-width="1.4"/></svg>
<div class="a" style="left:1011.7px;top:417.8px;width:89.0px;height:15.199999999999989px;background:#4d88bd"></div>
<div class="t" style="left:756.2px;width:600px;text-align:center;top:421.4px;font-size:8.0px;line-height:10.0px;color:#8fb4d8;transform:scaleX(0.9);transform-origin:center;">Zobrazení akce</div>
<div class="a" style="left:1011.7px;top:437.4px;width:89.0px;height:15.0px;background:#4d88bd"></div>
<div class="t" style="left:756.2px;width:600px;text-align:center;top:440.9px;font-size:8.0px;line-height:10.0px;color:#eef4fa;transform:scaleX(0.9);transform-origin:center;">Karta místa</div>
<div class="a" style="left:1011.7px;top:457px;width:89.0px;height:15.199999999999989px;background:#4d88bd"></div>
<div class="t" style="left:756.2px;width:600px;text-align:center;top:460.6px;font-size:8.0px;line-height:10.0px;color:#eef4fa;transform:scaleX(0.9);transform-origin:center;">Výkaz provozu</div>
<div class="a" style="left:1011.7px;top:476.8px;width:89.0px;height:14.899999999999977px;background:#4d88bd"></div>
<div class="t" style="left:756.2px;width:600px;text-align:center;top:480.25px;font-size:8.0px;line-height:10.0px;color:#8fb4d8;transform:scaleX(0.9);transform-origin:center;">Sloučené události</div>
<div class="a" style="left:1011.7px;top:496.4px;width:89.0px;height:14.400000000000034px;background:#4d88bd"></div>
<div class="t" style="left:756.2px;width:600px;text-align:center;top:499.6px;font-size:8.0px;line-height:10.0px;color:#eef4fa;transform:scaleX(0.9);transform-origin:center;">Načtení událostí</div>
<div class="t" style="left:482.3px;top:629.7px;font-size:8.0px;line-height:10.0px;color:#404040;transform:scaleX(0.9);transform-origin:left;">Počáteční stav</div>
<div class="a" style="left:483.2px;top:642.9px;width:67.80000000000001px;height:12.8px;background:#dde9fd"></div>
<div class="t" style="right:619.5px;top:644.3px;font-size:8.0px;line-height:10.0px;color:#2a2a2a;transform:scaleX(0.9);transform-origin:right;">120 981</div>
<div class="t" style="left:557.1px;top:629.7px;font-size:8.0px;line-height:10.0px;color:#404040;transform:scaleX(0.9);transform-origin:left;">Konečný stav cílový</div>
<div class="a" style="left:558.4px;top:642.9px;width:68.20000000000005px;height:12.8px;background:#fff;border:1px solid #d6e2f2"></div>
<div class="t" style="right:543.9px;top:644.3px;font-size:8.0px;line-height:10.0px;color:#2a2a2a;transform:scaleX(0.9);transform-origin:right;">121 389,0</div>
<div class="t" style="left:705px;top:629.7px;font-size:8.0px;line-height:10.0px;color:#404040;transform:scaleX(0.9);transform-origin:left;">Počáteční stav PHm</div>
<div class="a" style="left:705.5px;top:642.9px;width:68.60000000000002px;height:12.8px;background:#dde9fd"></div>
<div class="t" style="right:396.4px;top:644.3px;font-size:8.0px;line-height:10.0px;color:#2a2a2a;transform:scaleX(0.9);transform-origin:right;">23,00</div>
<div class="t" style="left:780.3px;top:629.7px;font-size:8.0px;line-height:10.0px;color:#404040;transform:scaleX(0.9);transform-origin:left;">Čerpání PHm</div>
<div class="a" style="left:781px;top:642.9px;width:67.5px;height:12.8px;background:#dde9fd"></div>
<div class="t" style="right:322.0px;top:644.3px;font-size:8.0px;line-height:10.0px;color:#2a2a2a;transform:scaleX(0.9);transform-origin:right;">35,00</div>
<div class="t" style="left:865.8px;top:629.7px;font-size:8.0px;line-height:10.0px;color:#404040;transform:scaleX(0.9);transform-origin:left;">Vykázaný čas</div>
<div class="a" style="left:867.5px;top:642.9px;width:66.89999999999998px;height:12.8px;background:#dde9fd"></div>
<div class="t" style="right:236.1px;top:644.3px;font-size:8.0px;line-height:10.0px;color:#2a2a2a;transform:scaleX(0.9);transform-origin:right;">5,71</div>
<div class="t" style="left:482.3px;top:659.7px;font-size:8.0px;line-height:10.0px;color:#404040;transform:scaleX(0.9);transform-origin:left;">Vykázáno</div>
<div class="a" style="left:483.2px;top:672.9px;width:67.80000000000001px;height:12.8px;background:#dde9fd"></div>
<div class="t" style="right:619.5px;top:674.3px;font-size:8.0px;line-height:10.0px;color:#2a2a2a;transform:scaleX(0.9);transform-origin:right;">408</div>
<div class="t" style="left:557.1px;top:659.7px;font-size:8.0px;line-height:10.0px;color:#404040;transform:scaleX(0.9);transform-origin:left;">Průběžný stav</div>
<div class="a" style="left:558.4px;top:672.9px;width:68.20000000000005px;height:12.8px;background:#dde9fd"></div>
<div class="t" style="right:543.9px;top:674.3px;font-size:8.0px;line-height:10.0px;color:#2a2a2a;transform:scaleX(0.9);transform-origin:right;">121 389</div>
<div class="t" style="left:632.8px;top:659.7px;font-size:8.0px;line-height:10.0px;color:#404040;transform:scaleX(0.9);transform-origin:left;">Zbývá vykázat</div>
<div class="a" style="left:633.5px;top:672.9px;width:53.5px;height:12.8px;background:#dde9fd"></div>
<div class="t" style="right:483.5px;top:674.3px;font-size:8.0px;line-height:10.0px;color:#9aa0a8;transform:scaleX(0.9);transform-origin:right;">0</div>
<div class="t" style="left:705px;top:659.7px;font-size:8.0px;line-height:10.0px;color:#404040;transform:scaleX(0.9);transform-origin:left;">Spotřeba PHm</div>
<div class="a" style="left:705.5px;top:672.9px;width:68.60000000000002px;height:12.8px;background:#dde9fd"></div>
<div class="t" style="right:396.4px;top:674.3px;font-size:8.0px;line-height:10.0px;color:#2a2a2a;transform:scaleX(0.9);transform-origin:right;">24,57</div>
<div class="t" style="left:780.3px;top:659.7px;font-size:8.0px;line-height:10.0px;color:#404040;transform:scaleX(0.9);transform-origin:left;">Konečný stav PHm</div>
<div class="a" style="left:781px;top:672.9px;width:67.5px;height:12.8px;background:#dde9fd"></div>
<div class="t" style="right:322.0px;top:674.3px;font-size:8.0px;line-height:10.0px;color:#2a2a2a;transform:scaleX(0.9);transform-origin:right;">33,43</div>
<div class="t" style="left:865.8px;top:659.7px;font-size:8.0px;line-height:10.0px;color:#404040;transform:scaleX(0.9);transform-origin:left;">Doba provozu</div>
<div class="a" style="left:867.5px;top:672.9px;width:66.89999999999998px;height:12.8px;background:#dde9fd"></div>
<div class="a" style="left:0px;top:31.5px;width:54.5px;height:17.5px;border-right:1px solid #e6edf6"></div>
<div class="a" style="left:55px;top:31.5px;width:71.5px;height:17.5px;border-right:1px solid #e6edf6"></div>
<div class="a" style="left:127px;top:31.5px;width:150px;height:17.5px;border-right:1px solid #e6edf6"></div>
<div class="a" style="left:278px;top:31.5px;width:54px;height:17.5px;border-right:1px solid #e6edf6"></div>
<div class="a" style="left:333px;top:31.5px;width:101px;height:17.5px;border-right:1px solid #e6edf6"></div>
<div class="a" style="left:435px;top:31.5px;width:170px;height:17.5px;border-right:1px solid #e6edf6"></div>
<div class="a" style="left:606px;top:31.5px;width:22px;height:17.5px;border-right:1px solid #e6edf6"></div>
<div class="a" style="left:629px;top:31.5px;width:169px;height:17.5px;border-right:1px solid #e6edf6"></div>
<div class="a" style="left:799px;top:31.5px;width:38px;height:17.5px;border-right:1px solid #e6edf6"></div>
<div class="a" style="left:838px;top:31.5px;width:20px;height:17.5px;border-right:1px solid #e6edf6"></div>
<div class="a" style="left:2.9px;top:35.0px;width:1.1px;height:1.1px;background:#5b7cb8"></div>
<div class="a" style="left:2.9px;top:37.4px;width:1.1px;height:1.1px;background:#5b7cb8"></div>
<div class="a" style="left:2.9px;top:39.8px;width:1.1px;height:1.1px;background:#5b7cb8"></div>
<div class="a" style="left:2.9px;top:42.2px;width:1.1px;height:1.1px;background:#5b7cb8"></div>
<div class="a" style="left:2.9px;top:44.6px;width:1.1px;height:1.1px;background:#5b7cb8"></div>
<div class="a" style="left:57.5px;top:35.0px;width:1.1px;height:1.1px;background:#5b7cb8"></div>
<div class="a" style="left:57.5px;top:37.4px;width:1.1px;height:1.1px;background:#5b7cb8"></div>
<div class="a" style="left:57.5px;top:39.8px;width:1.1px;height:1.1px;background:#5b7cb8"></div>
<div class="a" style="left:57.5px;top:42.2px;width:1.1px;height:1.1px;background:#5b7cb8"></div>
<div class="a" style="left:57.5px;top:44.6px;width:1.1px;height:1.1px;background:#5b7cb8"></div>
<div class="a" style="left:128.5px;top:35.0px;width:1.1px;height:1.1px;background:#5b7cb8"></div>
<div class="a" style="left:128.5px;top:37.4px;width:1.1px;height:1.1px;background:#5b7cb8"></div>
<div class="a" style="left:128.5px;top:39.8px;width:1.1px;height:1.1px;background:#5b7cb8"></div>
<div class="a" style="left:128.5px;top:42.2px;width:1.1px;height:1.1px;background:#5b7cb8"></div>
<div class="a" style="left:128.5px;top:44.6px;width:1.1px;height:1.1px;background:#5b7cb8"></div>
<div class="a" style="left:279.5px;top:35.0px;width:1.1px;height:1.1px;background:#5b7cb8"></div>
<div class="a" style="left:279.5px;top:37.4px;width:1.1px;height:1.1px;background:#5b7cb8"></div>
<div class="a" style="left:279.5px;top:39.8px;width:1.1px;height:1.1px;background:#5b7cb8"></div>
<div class="a" style="left:279.5px;top:42.2px;width:1.1px;height:1.1px;background:#5b7cb8"></div>
<div class="a" style="left:279.5px;top:44.6px;width:1.1px;height:1.1px;background:#5b7cb8"></div>
<div class="a" style="left:334.5px;top:35.0px;width:1.1px;height:1.1px;background:#5b7cb8"></div>
<div class="a" style="left:334.5px;top:37.4px;width:1.1px;height:1.1px;background:#5b7cb8"></div>
<div class="a" style="left:334.5px;top:39.8px;width:1.1px;height:1.1px;background:#5b7cb8"></div>
<div class="a" style="left:334.5px;top:42.2px;width:1.1px;height:1.1px;background:#5b7cb8"></div>
<div class="a" style="left:334.5px;top:44.6px;width:1.1px;height:1.1px;background:#5b7cb8"></div>
<div class="a" style="left:437.1px;top:35.0px;width:1.1px;height:1.1px;background:#5b7cb8"></div>
<div class="a" style="left:437.1px;top:37.4px;width:1.1px;height:1.1px;background:#5b7cb8"></div>
<div class="a" style="left:437.1px;top:39.8px;width:1.1px;height:1.1px;background:#5b7cb8"></div>
<div class="a" style="left:437.1px;top:42.2px;width:1.1px;height:1.1px;background:#5b7cb8"></div>
<div class="a" style="left:437.1px;top:44.6px;width:1.1px;height:1.1px;background:#5b7cb8"></div>
<div class="a" style="left:607.5px;top:35.0px;width:1.1px;height:1.1px;background:#5b7cb8"></div>
<div class="a" style="left:607.5px;top:37.4px;width:1.1px;height:1.1px;background:#5b7cb8"></div>
<div class="a" style="left:607.5px;top:39.8px;width:1.1px;height:1.1px;background:#5b7cb8"></div>
<div class="a" style="left:607.5px;top:42.2px;width:1.1px;height:1.1px;background:#5b7cb8"></div>
<div class="a" style="left:607.5px;top:44.6px;width:1.1px;height:1.1px;background:#5b7cb8"></div>
<div class="a" style="left:630.5px;top:35.0px;width:1.1px;height:1.1px;background:#5b7cb8"></div>
<div class="a" style="left:630.5px;top:37.4px;width:1.1px;height:1.1px;background:#5b7cb8"></div>
<div class="a" style="left:630.5px;top:39.8px;width:1.1px;height:1.1px;background:#5b7cb8"></div>
<div class="a" style="left:630.5px;top:42.2px;width:1.1px;height:1.1px;background:#5b7cb8"></div>
<div class="a" style="left:630.5px;top:44.6px;width:1.1px;height:1.1px;background:#5b7cb8"></div>
<div class="a" style="left:800.5px;top:35.0px;width:1.1px;height:1.1px;background:#5b7cb8"></div>
<div class="a" style="left:800.5px;top:37.4px;width:1.1px;height:1.1px;background:#5b7cb8"></div>
<div class="a" style="left:800.5px;top:39.8px;width:1.1px;height:1.1px;background:#5b7cb8"></div>
<div class="a" style="left:800.5px;top:42.2px;width:1.1px;height:1.1px;background:#5b7cb8"></div>
<div class="a" style="left:800.5px;top:44.6px;width:1.1px;height:1.1px;background:#5b7cb8"></div>
<div class="a" style="left:839.5px;top:35.0px;width:1.1px;height:1.1px;background:#5b7cb8"></div>
<div class="a" style="left:839.5px;top:37.4px;width:1.1px;height:1.1px;background:#5b7cb8"></div>
<div class="a" style="left:839.5px;top:39.8px;width:1.1px;height:1.1px;background:#5b7cb8"></div>
<div class="a" style="left:839.5px;top:42.2px;width:1.1px;height:1.1px;background:#5b7cb8"></div>
<div class="a" style="left:839.5px;top:44.6px;width:1.1px;height:1.1px;background:#5b7cb8"></div>
<svg style="left:7.0px;top:34.3px" width="12" height="12" viewBox="0 0 12 12"><rect x="1" y="1" width="6" height="8" fill="#b8cde8" stroke="#6d8cc0" stroke-width="0.8"/><rect x="4.5" y="3.5" width="6.5" height="8" fill="#5a86c8" stroke="#2f5aa0" stroke-width="0.8"/></svg>
<svg style="left:23.0px;top:34.3px" width="12" height="12" viewBox="0 0 12 12"><path d="M3 1 L8 9 M9 1 L4 9" stroke="#b8b8b8" stroke-width="1.2"/><circle cx="3.5" cy="10" r="1.5" fill="none" stroke="#b8b8b8"/><circle cx="8.5" cy="10" r="1.5" fill="none" stroke="#b8b8b8"/></svg>
<svg style="left:39.0px;top:34.3px" width="12" height="12" viewBox="0 0 12 12"><rect x="1" y="2" width="9" height="9" fill="#d8d8d8" stroke="#c0c0c0" stroke-width="0.8"/><rect x="5" y="5" width="6" height="6" fill="#e8e8e8" stroke="#c4c4c4" stroke-width="0.8"/></svg>
<svg style="left:62.0px;top:34.3px" width="12" height="12" viewBox="0 0 12 12"><circle cx="6.5" cy="6" r="5.3" fill="#1e88c8"/><circle cx="6.5" cy="5" r="3.5" fill="#4fb2e8" opacity="0.6"/><text x="6.5" y="8.6" font-size="7.5" font-weight="bold" text-anchor="middle" fill="#fff" font-family="Liberation Sans">?</text><polygon points="0.5,3.5 4.5,6 0.5,9" fill="#e02020"/></svg>
<svg style="left:78.0px;top:34.3px" width="12" height="12" viewBox="0 0 12 12"><circle cx="6.5" cy="6" r="5.3" fill="#1e88c8"/><circle cx="6.5" cy="5" r="3.5" fill="#4fb2e8" opacity="0.6"/><text x="6.5" y="8.6" font-size="7.5" font-weight="bold" text-anchor="middle" fill="#fff" font-family="Liberation Sans">?</text><rect x="0.5" y="5.5" width="5" height="6" fill="#888" stroke="#666" stroke-width="0.5"/></svg>
<svg style="left:94.0px;top:34.3px" width="12" height="12" viewBox="0 0 12 12"><circle cx="6.5" cy="6" r="5.3" fill="#1e88c8"/><circle cx="6.5" cy="5" r="3.5" fill="#4fb2e8" opacity="0.6"/><text x="6.5" y="8.6" font-size="7.5" font-weight="bold" text-anchor="middle" fill="#fff" font-family="Liberation Sans">?</text></svg>
<svg style="left:110.0px;top:34.3px" width="12" height="12" viewBox="0 0 12 12"><circle cx="6.5" cy="6" r="5.3" fill="#1e88c8"/><circle cx="6.5" cy="5" r="3.5" fill="#4fb2e8" opacity="0.6"/><text x="6.5" y="8.6" font-size="7.5" font-weight="bold" text-anchor="middle" fill="#fff" font-family="Liberation Sans">?</text><circle cx="4" cy="6" r="2.3" fill="#e8b890"/><path d="M1 11.5 Q4 7.5 7 11.5 Z" fill="#5cc050"/><path d="M1.7 5 Q4 2.5 6.3 5" fill="#6a4020"/></svg>
<svg style="left:133.0px;top:34.3px" width="12" height="12" viewBox="0 0 12 12"><path d="M6 2 A4 4 0 1 1 2.2 5" fill="none" stroke="#2f6fd0" stroke-width="2.2"/><polygon points="3.5,0 7.8,2.2 4,4.8" fill="#2f6fd0"/></svg>
<svg style="left:149.0px;top:34.3px" width="12" height="12" viewBox="0 0 12 12"><circle cx="6" cy="6" r="5.2" fill="#d4d4d4" stroke="#bdbdbd" stroke-width="0.8"/><path d="M3.5 6 L5.5 8 L8.8 4" stroke="#fff" stroke-width="1.3" fill="none"/></svg>
<svg style="left:165.0px;top:34.3px" width="12" height="12" viewBox="0 0 12 12"><path d="M1 6 L6 2 L11 5.5 L6 10 Z" fill="#7a80d8"/><path d="M1 6 L6 10 L6 11.5 L1 7.5Z" fill="#4a50a8"/><path d="M6 10 L11 5.5 L11 7 L6 11.5Z" fill="#5a60b8"/></svg>
<svg style="left:181.0px;top:34.3px" width="12" height="12" viewBox="0 0 12 12"><rect x="1" y="2.5" width="10" height="8" fill="#f4f4f4" stroke="#a8a8a8" stroke-width="0.9"/><rect x="1" y="2.5" width="10" height="1.5" fill="#c8c8c8"/></svg>
<svg style="left:197.0px;top:34.3px" width="12" height="12" viewBox="0 0 12 12"><rect x="1" y="3" width="4" height="7" rx="1" fill="#203a80"/><rect x="7" y="3" width="4" height="7" rx="1" fill="#203a80"/><rect x="4" y="4" width="4" height="3" fill="#3a5aa0"/><circle cx="3" cy="9" r="1.5" fill="#8ab0e0"/><circle cx="9" cy="9" r="1.5" fill="#8ab0e0"/></svg>
<svg style="left:212.0px;top:34.3px" width="12" height="12" viewBox="0 0 12 12"><text x="1" y="5.5" font-size="5.5" font-weight="bold" fill="#2a4a90" font-family="Liberation Sans">ab</text><text x="5" y="11" font-size="5.5" font-weight="bold" fill="#2a8a40" font-family="Liberation Sans">ac</text><path d="M2 7 L4 10" stroke="#2a4a90" stroke-width="0.8"/></svg>
<svg style="left:228.0px;top:34.3px" width="12" height="12" viewBox="0 0 12 12"><rect x="3" y="1" width="6" height="4" fill="#fff" stroke="#888" stroke-width="0.6"/><rect x="0.5" y="4.5" width="11" height="5" fill="#607090"/><rect x="2.5" y="8" width="7" height="3.5" fill="#f0f0f0" stroke="#888" stroke-width="0.6"/></svg>
<svg style="left:244.0px;top:34.3px" width="12" height="12" viewBox="0 0 12 12"><rect x="0.5" y="3" width="6" height="7" fill="#9a9a9a"/><polygon points="5,4 9,4 9,2 12,6.5 9,11 9,9 5,9" fill="#2a70d0"/></svg>
<svg style="left:260.0px;top:34.3px" width="12" height="12" viewBox="0 0 12 12"><circle cx="6" cy="6" r="5.2" fill="#d6d6d6" stroke="#c4c4c4" stroke-width="0.8"/><circle cx="6" cy="6" r="2.8" fill="#fff"/></svg>
<svg style="left:283.4px;top:34.3px" width="12" height="12" viewBox="0 0 12 12"><circle cx="6" cy="6" r="5.5" fill="#1aa030"/><rect x="3" y="5" width="6" height="2" fill="#fff"/><rect x="5" y="3" width="2" height="6" fill="#fff"/></svg>
<svg style="left:300.0px;top:34.3px" width="12" height="12" viewBox="0 0 12 12"><circle cx="6" cy="6" r="5.5" fill="#d02030"/><rect x="3" y="5" width="6" height="2" fill="#fff"/></svg>
<svg style="left:315.0px;top:34.3px" width="12" height="12" viewBox="0 0 12 12"><rect x="2" y="1" width="8" height="10" fill="#e0e0e0" stroke="#c4c4c4" stroke-width="0.8"/><path d="M3.5 4h5M3.5 6h5M3.5 8h5" stroke="#bbb" stroke-width="0.8"/></svg>
<svg style="left:339.0px;top:34.3px" width="12" height="12" viewBox="0 0 12 12"><circle cx="6" cy="6" r="5.4" fill="#d0d0d0"/><polygon points="5,3.5 8,6 5,8.5" fill="#fff"/></svg>
<svg style="left:355.0px;top:34.3px" width="12" height="12" viewBox="0 0 12 12"><circle cx="6" cy="6" r="5.4" fill="#d0d0d0"/><polygon points="5,3.5 8,6 5,8.5" fill="#fff"/></svg>
<svg style="left:371.0px;top:34.3px" width="12" height="12" viewBox="0 0 12 12"><circle cx="6" cy="6" r="5.4" fill="#d0d0d0"/><polygon points="5,3.5 8,6 5,8.5" fill="#fff"/></svg>
<svg style="left:387.0px;top:34.3px" width="12" height="12" viewBox="0 0 12 12"><circle cx="6" cy="6" r="5.4" fill="#1a82c4"/><polygon points="5,3.5 8,6 5,8.5" fill="#fff"/></svg>
<svg style="left:403.0px;top:34.3px" width="12" height="12" viewBox="0 0 12 12"><circle cx="6" cy="6" r="5.4" fill="#1a82c4"/><polygon points="5,3.5 8,6 5,8.5" fill="#fff"/></svg>
<svg style="left:419.0px;top:34.3px" width="12" height="12" viewBox="0 0 12 12"><circle cx="6" cy="6" r="5.4" fill="#1a82c4"/><polygon points="5,3.5 8,6 5,8.5" fill="#fff"/></svg>
<div class="a" style="left:440.4px;top:33.2px;width:83px;height:14.2px;background:#fff;border:1px solid #dce6f2"></div>
<svg style="left:516.0px;top:38.8px" width="5" height="4" viewBox="0 0 5 4"><polygon points="0.5,0.5 4.5,0.5 2.5,3" fill="#222"/></svg>
<svg style="left:525.7px;top:34.3px" width="12" height="12" viewBox="0 0 12 12"><polygon points="1,1.5 11,1.5 7,6.5 7,11 5,10 5,6.5" fill="#1a80d0"/></svg>
<svg style="left:541.0px;top:34.3px" width="12" height="12" viewBox="0 0 12 12"><polygon points="1,1.5 11,1.5 7,6.5 7,11 5,10 5,6.5" fill="#c8c8c8"/></svg>
<svg style="left:557.7px;top:34.3px" width="12" height="12" viewBox="0 0 12 12"><text x="0.5" y="5.5" font-size="5.5" font-weight="bold" fill="#2a4a9a" font-family="Liberation Sans">A</text><text x="0.5" y="11.5" font-size="5.5" font-weight="bold" fill="#a02020" font-family="Liberation Sans">Z</text><path d="M8.5 1 V11 M6.8 2.8 L8.5 1 L10.2 2.8 M6.8 9.2 L8.5 11 L10.2 9.2" stroke="#222" stroke-width="1" fill="none"/></svg>
<svg style="left:572.7px;top:34.3px" width="12" height="12" viewBox="0 0 12 12"><rect x="0.5" y="4" width="4" height="6" fill="#aaa"/><polygon points="3,1.5 12,1.5 8.5,6 8.5,10 6.5,9 6.5,6" fill="#1a80d0"/></svg>
<svg style="left:588.0px;top:34.3px" width="12" height="12" viewBox="0 0 12 12"><rect x="0.5" y="4" width="4" height="6" fill="#ccc"/><polygon points="3,1.5 12,1.5 8.5,6 8.5,10 6.5,9 6.5,6" fill="#cfcfcf"/></svg>
<svg style="left:612.0px;top:34.3px" width="12" height="12" viewBox="0 0 12 12"><circle cx="6" cy="6" r="5.3" fill="#5a8ad0"/><circle cx="6" cy="6" r="3.6" fill="#8ab4ec"/><circle cx="6" cy="6" r="1.6" fill="#3a68b0"/></svg>
<div class="a" style="left:633.2px;top:33.2px;width:83.2px;height:14.2px;background:#fff;border:1px solid #dce6f2"></div>
<svg style="left:635.0px;top:34.3px" width="12" height="12" viewBox="0 0 12 12"><circle cx="6" cy="5" r="3.5" fill="#e6b080"/><path d="M2 3 Q6 -1 10 3 L10 6 Q6 2 2 6Z" fill="#8a5020"/><path d="M1 12 Q6 6 11 12Z" fill="#3aa0e0"/></svg>
<div class="t" style="left:648px;top:35.5px;font-size:8px;line-height:10.0px;color:#222;transform-origin:left;">Základní</div>
<svg style="left:709.5px;top:38.8px" width="5" height="4" viewBox="0 0 5 4"><polygon points="0.5,0.5 4.5,0.5 2.5,3" fill="#222"/></svg>
<svg style="left:719.6px;top:34.3px" width="12" height="12" viewBox="0 0 12 12"><circle cx="5" cy="6" r="4.5" fill="#5a8ad0"/><circle cx="8" cy="6" r="2.5" fill="#e6b080"/><path d="M5 12 Q8 8 11 12Z" fill="#d07020"/></svg>
<svg style="left:734.7px;top:34.3px" width="12" height="12" viewBox="0 0 12 12"><rect x="1" y="1" width="10" height="10" fill="#4a70c0"/><circle cx="6" cy="5" r="2.5" fill="#e6b080"/><path d="M2 11 Q6 7 10 11Z" fill="#e0a030"/><path d="M8 1 L11 4" stroke="#f0c030" stroke-width="1.5"/></svg>
<svg style="left:750.5px;top:34.3px" width="12" height="12" viewBox="0 0 12 12"><rect x="0.5" y="2" width="11" height="8" fill="#fff" stroke="#5a80c0" stroke-width="0.8"/><circle cx="8" cy="5.5" r="2" fill="#e6b080"/><path d="M5.5 10 Q8 7 10.5 10Z" fill="#d07020"/><rect x="2" y="5" width="3" height="1" fill="#5a80c0"/></svg>
<div class="a" style="left:767px;top:33.5px;width:13.5px;height:14px;background:#dbe8f8;border:1px solid #9cb8e0"></div>
<svg style="left:767.5px;top:34.3px" width="12" height="12" viewBox="0 0 12 12"><rect x="1" y="1" width="10" height="10" fill="#4a70c0"/><circle cx="7" cy="6" r="2.5" fill="#e6b080"/><path d="M3.5 11 Q7 7.5 10.5 11Z" fill="#d07020"/><path d="M1.5 5 L3.5 7.5 L7 2" stroke="#20b030" stroke-width="1.5" fill="none"/></svg>
<svg style="left:783.0px;top:34.3px" width="12" height="12" viewBox="0 0 12 12"><rect x="1" y="1" width="10" height="10" fill="#e4e4e4" stroke="#c8c8c8" stroke-width="0.8"/><path d="M3 9 L9 3" stroke="#c0c0c0" stroke-width="1"/></svg>
<svg style="left:805.0px;top:34.3px" width="12" height="12" viewBox="0 0 12 12"><rect x="0.5" y="2" width="8" height="7" fill="#c8a050"/><polygon points="6,6 9,6 9,4 12,7.5 9,11 9,9 6,9" fill="#30b040"/></svg>
<svg style="left:821.0px;top:34.3px" width="12" height="12" viewBox="0 0 12 12"><circle cx="6" cy="6.5" r="4.8" fill="#b8c4d8"/><circle cx="6" cy="6.5" r="2.5" fill="#e8eef6"/><rect x="5" y="0.5" width="2" height="2" fill="#8090a8"/></svg>
<svg style="left:844.0px;top:34.3px" width="12" height="12" viewBox="0 0 12 12"><path d="M6 1.5 Q8.5 1.5 8.5 5.5 L9.5 8.5 H2.5 L3.5 5.5 Q3.5 1.5 6 1.5Z" fill="#6a86b8"/><circle cx="6" cy="9.8" r="1" fill="#6a86b8"/></svg>
<svg style="left:2px;top:1px" width="11" height="11" viewBox="0 0 11 11"><polygon points="0.5,0.5 10.5,5.5 0.5,10.5" fill="#e02028"/><path d="M1.5 3 L3 4" stroke="#fff" stroke-width="0.6"/></svg>
<div class="a" style="left:2px;top:65.6px;width:17.5px;height:71.5px;background:#fff;border:1px solid #cddcf0;border-right:none"></div>
<div class="t" style="left:-89.5px;top:90.5px;width:200px;height:10px;line-height:10px;text-align:center;font-size:8px;color:#333;transform:rotate(-90deg)">Hlavní nabídka</div>
<svg style="left:6px;top:125px" width="9" height="6"><polygon points="0.5,5.5 4.5,0.5 8.5,5.5" fill="#1f5a87"/></svg>
<div class="a" style="left:3px;top:139px;width:16px;height:0.8px;background:#dce6f2"></div>
<div class="t" style="left:-89.5px;top:158px;width:200px;height:10px;line-height:10px;text-align:center;font-size:8px;color:#333;transform:rotate(-90deg)">Oblíbené</div>
<svg style="left:4.5px;top:181px" width="12" height="11" viewBox="0 0 11 10"><polygon points="5.5,0 7,3.5 11,3.7 8,6.2 9,10 5.5,7.9 2,10 3,6.2 0,3.7 4,3.5" fill="#1f5a87"/></svg>
<div class="a" style="left:3px;top:199.5px;width:16px;height:0.8px;background:#dce6f2"></div>
<div class="a" style="left:3px;top:204px;width:16px;height:64px;background:#f25252"></div>
<div class="t" style="left:-89.2px;top:226px;width:200px;height:10px;line-height:10px;text-align:center;font-size:8px;color:#2a1a1a;transform:rotate(-90deg)">Novinky (19)</div>
<div class="a" style="left:6.5px;top:255px;width:8px;height:6px;background:#e8eef8;border:1px solid #8aa0c8"></div>
<div class="a" style="left:3px;top:272px;width:16px;height:0.8px;background:#dce6f2"></div>
<div class="t" style="left:-89.2px;top:285px;width:200px;height:10px;line-height:10px;text-align:center;font-size:8px;color:#333;transform:rotate(-90deg)">Okna</div>
<svg style="left:5.5px;top:301px" width="9" height="10" viewBox="0 0 9 10"><rect x="0.5" y="3.5" width="5" height="6" fill="none" stroke="#3a68b0" stroke-width="1"/><rect x="3" y="0.5" width="5.5" height="6" fill="#fff" stroke="#3a68b0" stroke-width="1"/></svg>
</body></html>
